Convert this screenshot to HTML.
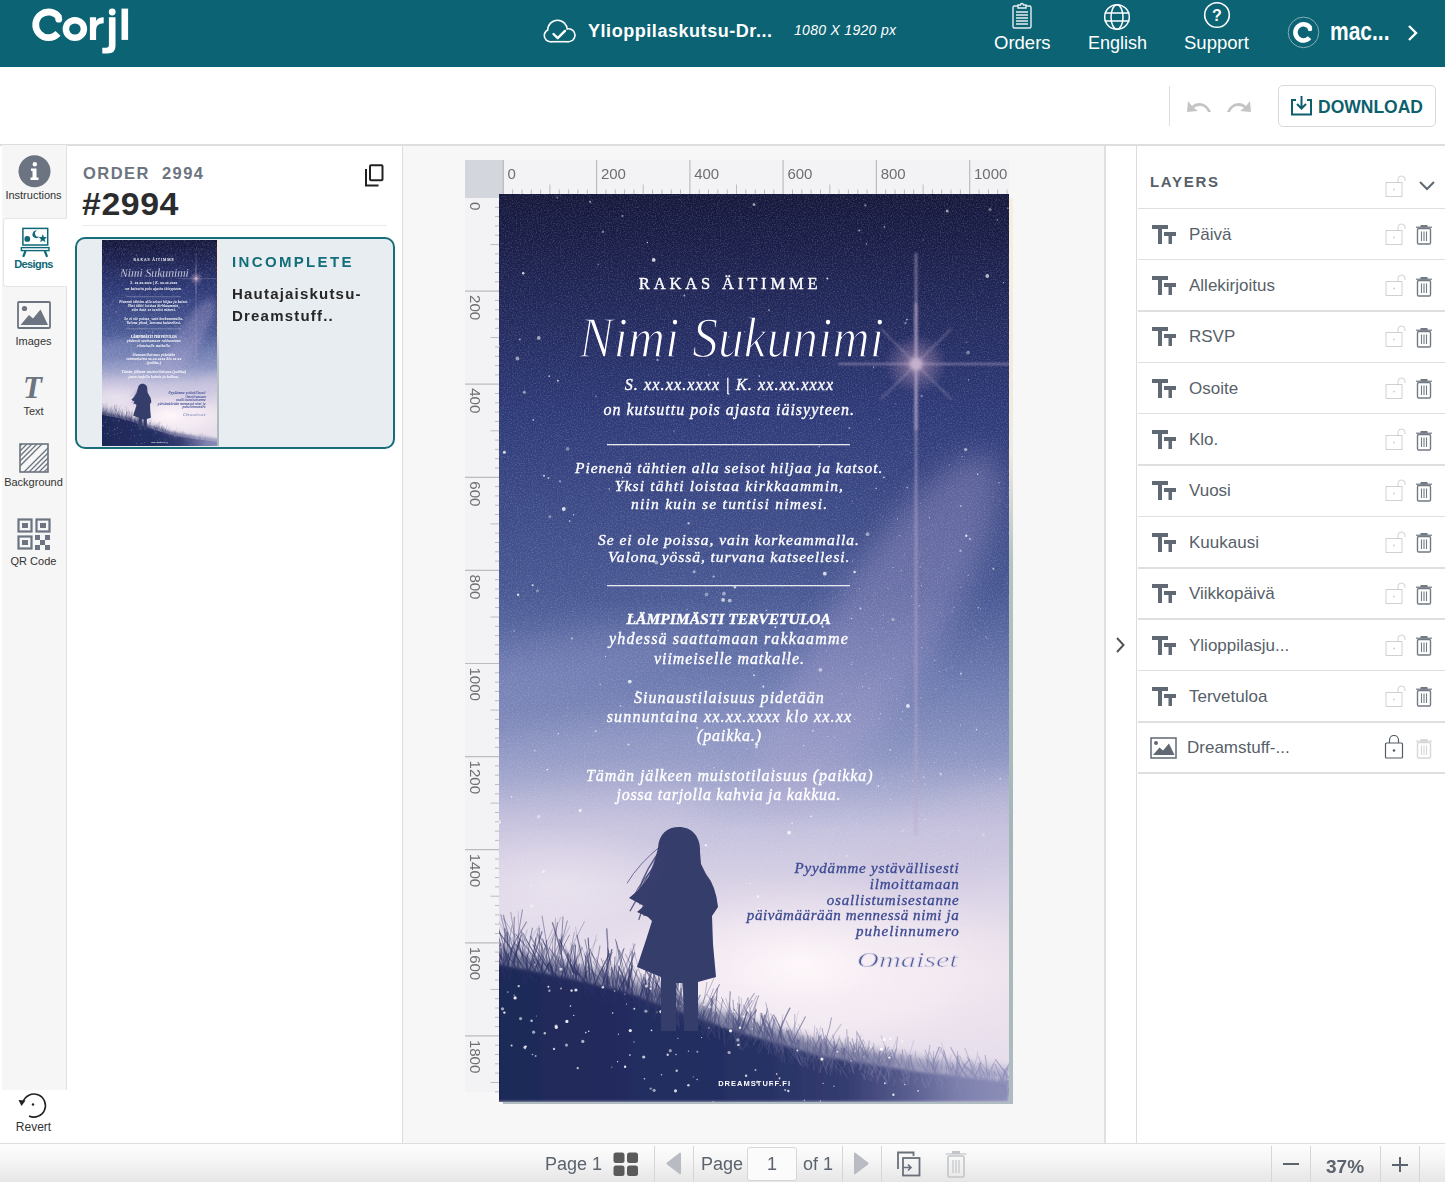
<!DOCTYPE html>
<html><head><meta charset="utf-8">
<style>
*{margin:0;padding:0;box-sizing:border-box}
html,body{width:1445px;height:1182px;overflow:hidden;background:#fff;font-family:"Liberation Sans",sans-serif}
.a{position:absolute}
.nw{white-space:nowrap}
#hdr{left:0;top:0;width:1445px;height:67px;background:#0b6374}
#hdr .t{color:#fff}
#tb{left:0;top:67px;width:1445px;height:78px;background:#fff}
#sep1{left:0;top:144px;width:1445px;height:1.5px;background:#dedede}
#lsb{left:2px;top:145px;width:65px;height:945px;background:#f6f6f6;border-right:1px solid #e2e2e2}
.lbl{font-size:11px;color:#333;text-align:center;width:67px;left:0}
#ord{left:67px;top:146px;width:336px;height:997px;background:#fff;border-right:1px solid #dcdcdc}
#cv{left:403px;top:146px;width:703px;height:997px;background:#f7f7f7}
#strip{left:1104px;top:146px;width:32px;height:997px;background:#fff;border-left:2px solid #e0e0e0}
#lay{left:1136px;top:146px;width:309px;height:997px;background:#fff;border-left:1px solid #dcdcdc}
.row{left:1138px;width:307px;height:51px;border-bottom:2px solid #e3e3e3}
.lname{font-size:17px;color:#575f69}
#bb{left:0;top:1143px;width:1445px;height:39px;background:linear-gradient(#fdfdfd,#f6f6f6 40%,#e6e6e6);border-top:1.5px solid #dedede}
.bsep{top:1146px;width:1px;height:36px;background:#d6d6d6}
</style></head><body>

<!-- HEADER -->
<div id="hdr" class="a">
  <svg class="a" style="left:0;top:0" width="140" height="60" viewBox="0 0 140 60"><g fill="#fff">
<path d="M58.01 33.36 A12.8 12.8 0 1 1 59.36 18.02" fill="none" stroke="#fff" stroke-width="6.8"/>
<circle cx="58.76" cy="19.22" r="3.4"/>
<ellipse cx="74.9" cy="29" rx="9" ry="8.8" fill="none" stroke="#fff" stroke-width="6.5"/>
<path d="M89.9 39.9 V17.3 H96.1 V21 Q98 17.3 103.7 17.3 V23.2 Q96.1 23.2 96.1 30 V39.9z"/>
<path d="M108.9 17.3 H115.5 V46 Q115.5 53.6 107.5 53.6 H102.3 V47.8 H106 Q108.9 47.8 108.9 45z"/>
<circle cx="112.2" cy="12" r="3.4"/>
<rect x="121.5" y="8.6" width="6.6" height="31.3"/>
</g></svg>
  <svg class="a" style="left:543px;top:19px" width="34" height="25" viewBox="0 0 34 25"><circle cx="14.5" cy="11" r="10.600000000000001" fill="#fff"/><circle cx="7.5" cy="16.5" r="7.0" fill="#fff"/><circle cx="25.5" cy="16.2" r="7.3" fill="#fff"/><rect x="7.5" y="11" width="18" height="12.5" fill="#fff"/><circle cx="14.5" cy="11" r="9.0" fill="#0b6374"/><circle cx="7.5" cy="16.5" r="5.4" fill="#0b6374"/><circle cx="25.5" cy="16.2" r="5.7" fill="#0b6374"/><rect x="7.5" y="11" width="18" height="10.899999999999999" fill="#0b6374"/><path d="M10.5 15 l4.2 4.2 l7.3 -7.3" fill="none" stroke="#fff" stroke-width="2.4" stroke-linecap="round" stroke-linejoin="round"/></svg>
  <div class="a t nw" style="left:588px;top:21px;font-size:18px;font-weight:bold;letter-spacing:0.55px">Ylioppilaskutsu-Dr...</div>
  <div class="a t nw" style="left:794px;top:22px;font-size:14px;font-style:italic;letter-spacing:0.3px">1080 X 1920 px</div>
  <div class="a t nw" style="left:994px;top:32px;font-size:18.5px">Orders</div>
  <div class="a t nw" style="left:1088px;top:33px;font-size:18px">English</div>
  <div class="a t nw" style="left:1184px;top:32px;font-size:18.5px">Support</div>
  <svg class="a" style="left:1011px;top:2px" width="22" height="27" viewBox="0 0 22 27"><rect x="2" y="4" width="18" height="22" rx="1.5" fill="none" stroke="#e8eef0" stroke-width="1.4"/><path d="M7 6 V3 h2.5 a1.5 1.5 0 0 1 3 0 H15 v3z" fill="#0b6374" stroke="#e8eef0" stroke-width="1.4"/><path d="M5 10h12M5 13h12M5 16h12M5 19h12M5 22h12" stroke="#e8eef0" stroke-width="1.3"/></svg>
  <svg class="a" style="left:1103px;top:3px" width="28" height="28" viewBox="0 0 28 28"><g fill="none" stroke="#fff" stroke-width="1.5"><circle cx="14" cy="14" r="12.3"/><ellipse cx="14" cy="14" rx="6" ry="12.3"/><path d="M1.7 10h24.6M1.7 18h24.6"/></g></svg>
  <svg class="a" style="left:1203px;top:1px" width="28" height="28" viewBox="0 0 28 28"><circle cx="14" cy="14" r="12.3" fill="none" stroke="#fff" stroke-width="1.6"/><text x="14" y="19.5" font-family="Liberation Sans" font-weight="bold" font-size="16" fill="#fff" text-anchor="middle">?</text></svg>
  <svg class="a" style="left:1287px;top:16px" width="33" height="33" viewBox="0 0 33 33"><circle cx="16.5" cy="16.4" r="15.3" fill="none" stroke="#86aeb6" stroke-width="1"/><path d="M22.52 21.82 A8.1 8.1 0 1 1 23.37 12.11" fill="none" stroke="#fff" stroke-width="4.6"/><circle cx="22.97" cy="12.91" r="2.3" fill="#fff"/></svg>
  <svg class="a" style="left:1406px;top:24px" width="14" height="18" viewBox="0 0 14 18"><path d="M3 2 L10 9 L3 16" fill="none" stroke="#fff" stroke-width="2.4"/></svg>
  <div class="a t nw" style="left:1330px;top:17px;font-size:21px;font-weight:bold;transform:scaleY(1.2);transform-origin:0 0">mac...</div>
</div>

<!-- TOOLBAR -->
<div id="tb" class="a"></div>
<div class="a" style="left:1169px;top:86px;width:1px;height:40px;background:#dedede"></div>
<div class="a" style="left:1278px;top:85px;width:158px;height:42px;border:1px solid #d8d8d8;border-radius:5px"></div>
<div class="a nw" style="left:1318px;top:97px;font-size:17.5px;font-weight:bold;color:#0e5f6e">DOWNLOAD</div>
<svg class="a" style="left:1185px;top:98px" width="29" height="15" viewBox="0 0 29 15"><path d="M26 14 C22 4 12 3 7 8 L3 3 L2 14 L13 13 L9 10 C13 7 20 7 23 14z" fill="#c4c4c4"/></svg>
<svg class="a" style="left:1224px;top:98px" width="29" height="15" viewBox="0 0 29 15"><path d="M3 14 C7 4 17 3 22 8 L26 3 L27 14 L16 13 L20 10 C16 7 9 7 6 14z" fill="#c4c4c4"/></svg>
<svg class="a" style="left:1290px;top:95px" width="23" height="21" viewBox="0 0 23 21"><path d="M6 5 H2 V19.5 H21 V5 H17" fill="none" stroke="#0e5f6e" stroke-width="2"/><path d="M11.5 1 V13 M7 9 L11.5 13.5 L16 9" fill="none" stroke="#0e5f6e" stroke-width="2"/></svg>
<div id="sep1" class="a"></div>

<!-- LEFT SIDEBAR -->
<div id="lsb" class="a"></div>
<div class="a" style="left:3px;top:218px;width:65px;height:69px;background:#fff;border:1px solid #e6e6e6;border-right:none;border-radius:4px 0 0 4px"></div>
<svg class="a" style="left:18px;top:155px" width="33" height="33" viewBox="0 0 33 33"><circle cx="16.5" cy="16.3" r="16" fill="#6b7480"/><circle cx="16.8" cy="9.3" r="2.2" fill="#fff"/><path d="M13 13.5 H18.5 V22.5 H20.5 V25 H12.5 V22.5 H14.5 V16 H13z" fill="#fff"/></svg>
<div class="a lbl nw" style="top:189px">Instructions</div>
<svg class="a" style="left:19px;top:226px" width="32" height="32" viewBox="0 0 32 32"><rect x="3.9" y="2.4" width="24.8" height="16.6" fill="none" stroke="#0e6877" stroke-width="1.5"/><circle cx="8.3" cy="12.9" r="2.9" fill="#0e6877"/><path d="M18.2 4.6 A3.8 3.8 0 1 0 20.3 10.6 A3 3 0 0 1 18.2 4.6z" fill="#0e6877"/><polygon points="23.80,8.20 24.92,11.06 27.98,11.24 25.61,13.19 26.39,16.16 23.80,14.50 21.21,16.16 21.99,13.19 19.62,11.24 22.68,11.06" fill="#0e6877"/><rect x="2.4" y="21.6" width="27.6" height="3" fill="none" stroke="#0e6877" stroke-width="1.4"/><path d="M6.5 25 L4.2 30.8 M25.8 25 L28.1 30.8" stroke="#0e6877" stroke-width="2.2"/></svg>
<div class="a lbl nw" style="top:258px;color:#0e6877;font-weight:bold;letter-spacing:-0.6px">Designs</div>
<svg class="a" style="left:17px;top:301px" width="34" height="28" viewBox="0 0 34 28"><rect x="1" y="1" width="32" height="26" rx="1" fill="none" stroke="#6b7480" stroke-width="1.8"/><circle cx="7.5" cy="7.5" r="2.6" fill="#6b7480"/><path d="M3.5 24 L12 14 L16 17.5 L23.5 8.5 L31 24z" fill="#6b7480"/></svg>
<div class="a lbl nw" style="top:335px">Images</div>
<div class="a nw" style="left:23px;top:371px;font-family:'Liberation Serif',serif;font-style:italic;font-weight:bold;font-size:31px;line-height:34px;color:#6b7480">T</div>
<div class="a lbl nw" style="top:405px">Text</div>
<svg class="a" style="left:19px;top:443px" width="30" height="30" viewBox="0 0 30 30"><defs><clipPath id="bgc"><rect x="1" y="1" width="28" height="28"/></clipPath></defs><rect x="1" y="1" width="28" height="28" fill="none" stroke="#6b7480" stroke-width="1.6"/><g clip-path="url(#bgc)" stroke="#6b7480" stroke-width="1.3"><path d="M-5 9 L9 -5 M-5 14 L14 -5 M-5 19 L19 -5 M-5 24 L24 -5 M-5 29 L29 -5 M0 34 L34 0 M5 34 L34 5 M10 34 L34 10 M15 34 L34 15 M20 34 L34 20 M25 34 L34 25 M-5 4 L4 -5"/></g></svg>
<div class="a lbl nw" style="top:476px">Background</div>
<svg class="a" style="left:17px;top:518px" width="34" height="32" viewBox="0 0 34 32"><g fill="none" stroke="#6b7480" stroke-width="2.2"><rect x="1.5" y="1.5" width="13" height="12"/><rect x="19.5" y="1.5" width="13" height="12"/><rect x="1.5" y="18.5" width="13" height="12"/></g><g fill="#6b7480"><rect x="5" y="5" width="6" height="5"/><rect x="23" y="5" width="6" height="5"/><rect x="5" y="22" width="6" height="5"/><rect x="18" y="17" width="5" height="5"/><rect x="28" y="17" width="5" height="5"/><rect x="23" y="22" width="5" height="5"/><rect x="18" y="27" width="5" height="5"/><rect x="28" y="27" width="5" height="5"/></g></svg>
<div class="a lbl nw" style="top:555px">QR Code</div>
<svg class="a" style="left:17px;top:1091px" width="32" height="28" viewBox="0 0 32 28"><path d="M6 11 A11.5 11.5 0 1 1 12 25" fill="none" stroke="#222" stroke-width="1.6"/><path d="M1.5 9 L8.5 9.5 L4.5 15z" fill="#222"/><circle cx="16" cy="13.5" r="1.2" fill="#222"/></svg>
<div class="a lbl nw" style="top:1120px;font-size:12px">Revert</div>

<!-- ORDER PANEL -->
<div id="ord" class="a"></div>
<div class="a nw" style="left:83px;top:163.5px;font-size:16.5px;font-weight:bold;color:#6c7480;letter-spacing:1.45px">ORDER&nbsp; 2994</div>
<div class="a nw" style="left:82px;top:187px;font-size:30.5px;font-weight:bold;color:#2a2c2e;letter-spacing:0.5px;transform:scaleX(1.11);transform-origin:0 0">#2994</div>
<svg class="a" style="left:364px;top:164px" width="20" height="23" viewBox="0 0 20 23"><rect x="6" y="1.2" width="12.5" height="15" rx="1" fill="none" stroke="#222" stroke-width="2"/><path d="M2 5 V21.5 H14.5" fill="none" stroke="#222" stroke-width="2"/></svg>
<div class="a" style="left:82px;top:225px;width:305px;height:1px;background:#ececec"></div>
<div class="a" style="left:75px;top:237px;width:320px;height:212px;border:2px solid #166e7b;border-radius:10px;background:#e8edf1"></div>
<svg class="a" style="left:102px;top:239.6px" width="115" height="206.2" viewBox="0 0 510 908" preserveAspectRatio="none"><use href="#dz"/></svg>
<div class="a" style="left:216.5px;top:240px;width:2.5px;height:206px;background:linear-gradient(#f6eadc,#efe6da 45%,#b8c4c2 60%,#aab9ba)"></div>

<div class="a nw" style="left:232px;top:253px;font-size:15px;font-weight:bold;color:#146d7a;letter-spacing:2.35px">INCOMPLETE</div>
<div class="a" style="left:232px;top:283px;font-size:15px;font-weight:bold;color:#262626;line-height:22px;letter-spacing:1.2px">Hautajaiskutsu-<br>Dreamstuff..</div>

<!-- CANVAS -->
<div id="cv" class="a"></div>
<svg class="a" style="left:0;top:0" width="1445" height="1182" viewBox="0 0 1445 1182"><rect x="465" y="160" width="544" height="34" fill="#f3f3f5"/><rect x="465" y="160" width="34" height="932" fill="#f3f3f5"/><rect x="465" y="160" width="39" height="38" fill="#d3d7dd"/><line x1="503.3" y1="160" x2="503.3" y2="194" stroke="#b9bcc0" stroke-width="1.2"/><text x="507.6" y="179" font-size="15" fill="#6e6e6e" font-family="Liberation Sans">0</text><line x1="512.6" y1="189.5" x2="512.6" y2="194" stroke="#b9bcc0" stroke-width="1"/><line x1="522.0" y1="189.5" x2="522.0" y2="194" stroke="#b9bcc0" stroke-width="1"/><line x1="531.3" y1="189.5" x2="531.3" y2="194" stroke="#b9bcc0" stroke-width="1"/><line x1="540.6" y1="189.5" x2="540.6" y2="194" stroke="#b9bcc0" stroke-width="1"/><line x1="549.9" y1="184.5" x2="549.9" y2="194" stroke="#b9bcc0" stroke-width="1"/><line x1="559.3" y1="189.5" x2="559.3" y2="194" stroke="#b9bcc0" stroke-width="1"/><line x1="568.6" y1="189.5" x2="568.6" y2="194" stroke="#b9bcc0" stroke-width="1"/><line x1="577.9" y1="189.5" x2="577.9" y2="194" stroke="#b9bcc0" stroke-width="1"/><line x1="587.3" y1="189.5" x2="587.3" y2="194" stroke="#b9bcc0" stroke-width="1"/><line x1="596.6" y1="160" x2="596.6" y2="194" stroke="#b9bcc0" stroke-width="1.2"/><text x="600.9" y="179" font-size="15" fill="#6e6e6e" font-family="Liberation Sans">200</text><line x1="605.9" y1="189.5" x2="605.9" y2="194" stroke="#b9bcc0" stroke-width="1"/><line x1="615.2" y1="189.5" x2="615.2" y2="194" stroke="#b9bcc0" stroke-width="1"/><line x1="624.6" y1="189.5" x2="624.6" y2="194" stroke="#b9bcc0" stroke-width="1"/><line x1="633.9" y1="189.5" x2="633.9" y2="194" stroke="#b9bcc0" stroke-width="1"/><line x1="643.2" y1="184.5" x2="643.2" y2="194" stroke="#b9bcc0" stroke-width="1"/><line x1="652.5" y1="189.5" x2="652.5" y2="194" stroke="#b9bcc0" stroke-width="1"/><line x1="661.9" y1="189.5" x2="661.9" y2="194" stroke="#b9bcc0" stroke-width="1"/><line x1="671.2" y1="189.5" x2="671.2" y2="194" stroke="#b9bcc0" stroke-width="1"/><line x1="680.5" y1="189.5" x2="680.5" y2="194" stroke="#b9bcc0" stroke-width="1"/><line x1="689.9" y1="160" x2="689.9" y2="194" stroke="#b9bcc0" stroke-width="1.2"/><text x="694.2" y="179" font-size="15" fill="#6e6e6e" font-family="Liberation Sans">400</text><line x1="699.2" y1="189.5" x2="699.2" y2="194" stroke="#b9bcc0" stroke-width="1"/><line x1="708.5" y1="189.5" x2="708.5" y2="194" stroke="#b9bcc0" stroke-width="1"/><line x1="717.8" y1="189.5" x2="717.8" y2="194" stroke="#b9bcc0" stroke-width="1"/><line x1="727.2" y1="189.5" x2="727.2" y2="194" stroke="#b9bcc0" stroke-width="1"/><line x1="736.5" y1="184.5" x2="736.5" y2="194" stroke="#b9bcc0" stroke-width="1"/><line x1="745.8" y1="189.5" x2="745.8" y2="194" stroke="#b9bcc0" stroke-width="1"/><line x1="755.2" y1="189.5" x2="755.2" y2="194" stroke="#b9bcc0" stroke-width="1"/><line x1="764.5" y1="189.5" x2="764.5" y2="194" stroke="#b9bcc0" stroke-width="1"/><line x1="773.8" y1="189.5" x2="773.8" y2="194" stroke="#b9bcc0" stroke-width="1"/><line x1="783.1" y1="160" x2="783.1" y2="194" stroke="#b9bcc0" stroke-width="1.2"/><text x="787.4" y="179" font-size="15" fill="#6e6e6e" font-family="Liberation Sans">600</text><line x1="792.5" y1="189.5" x2="792.5" y2="194" stroke="#b9bcc0" stroke-width="1"/><line x1="801.8" y1="189.5" x2="801.8" y2="194" stroke="#b9bcc0" stroke-width="1"/><line x1="811.1" y1="189.5" x2="811.1" y2="194" stroke="#b9bcc0" stroke-width="1"/><line x1="820.5" y1="189.5" x2="820.5" y2="194" stroke="#b9bcc0" stroke-width="1"/><line x1="829.8" y1="184.5" x2="829.8" y2="194" stroke="#b9bcc0" stroke-width="1"/><line x1="839.1" y1="189.5" x2="839.1" y2="194" stroke="#b9bcc0" stroke-width="1"/><line x1="848.4" y1="189.5" x2="848.4" y2="194" stroke="#b9bcc0" stroke-width="1"/><line x1="857.8" y1="189.5" x2="857.8" y2="194" stroke="#b9bcc0" stroke-width="1"/><line x1="867.1" y1="189.5" x2="867.1" y2="194" stroke="#b9bcc0" stroke-width="1"/><line x1="876.4" y1="160" x2="876.4" y2="194" stroke="#b9bcc0" stroke-width="1.2"/><text x="880.7" y="179" font-size="15" fill="#6e6e6e" font-family="Liberation Sans">800</text><line x1="885.7" y1="189.5" x2="885.7" y2="194" stroke="#b9bcc0" stroke-width="1"/><line x1="895.1" y1="189.5" x2="895.1" y2="194" stroke="#b9bcc0" stroke-width="1"/><line x1="904.4" y1="189.5" x2="904.4" y2="194" stroke="#b9bcc0" stroke-width="1"/><line x1="913.7" y1="189.5" x2="913.7" y2="194" stroke="#b9bcc0" stroke-width="1"/><line x1="923.1" y1="184.5" x2="923.1" y2="194" stroke="#b9bcc0" stroke-width="1"/><line x1="932.4" y1="189.5" x2="932.4" y2="194" stroke="#b9bcc0" stroke-width="1"/><line x1="941.7" y1="189.5" x2="941.7" y2="194" stroke="#b9bcc0" stroke-width="1"/><line x1="951.0" y1="189.5" x2="951.0" y2="194" stroke="#b9bcc0" stroke-width="1"/><line x1="960.4" y1="189.5" x2="960.4" y2="194" stroke="#b9bcc0" stroke-width="1"/><line x1="969.7" y1="160" x2="969.7" y2="194" stroke="#b9bcc0" stroke-width="1.2"/><text x="974.0" y="179" font-size="15" fill="#6e6e6e" font-family="Liberation Sans">1000</text><line x1="979.0" y1="189.5" x2="979.0" y2="194" stroke="#b9bcc0" stroke-width="1"/><line x1="988.4" y1="189.5" x2="988.4" y2="194" stroke="#b9bcc0" stroke-width="1"/><line x1="997.7" y1="189.5" x2="997.7" y2="194" stroke="#b9bcc0" stroke-width="1"/><line x1="1007.0" y1="189.5" x2="1007.0" y2="194" stroke="#b9bcc0" stroke-width="1"/><text x="0" y="0" font-size="15" fill="#6e6e6e" font-family="Liberation Sans" transform="translate(469.5 202.0) rotate(90)">0</text><line x1="495" y1="207.3" x2="499" y2="207.3" stroke="#b9bcc0" stroke-width="1"/><line x1="495" y1="216.6" x2="499" y2="216.6" stroke="#b9bcc0" stroke-width="1"/><line x1="495" y1="225.9" x2="499" y2="225.9" stroke="#b9bcc0" stroke-width="1"/><line x1="495" y1="235.2" x2="499" y2="235.2" stroke="#b9bcc0" stroke-width="1"/><line x1="490.5" y1="244.6" x2="499" y2="244.6" stroke="#b9bcc0" stroke-width="1"/><line x1="495" y1="253.9" x2="499" y2="253.9" stroke="#b9bcc0" stroke-width="1"/><line x1="495" y1="263.2" x2="499" y2="263.2" stroke="#b9bcc0" stroke-width="1"/><line x1="495" y1="272.5" x2="499" y2="272.5" stroke="#b9bcc0" stroke-width="1"/><line x1="495" y1="281.8" x2="499" y2="281.8" stroke="#b9bcc0" stroke-width="1"/><line x1="465" y1="291.1" x2="499" y2="291.1" stroke="#b9bcc0" stroke-width="1.2"/><text x="0" y="0" font-size="15" fill="#6e6e6e" font-family="Liberation Sans" transform="translate(469.5 295.1) rotate(90)">200</text><line x1="495" y1="300.4" x2="499" y2="300.4" stroke="#b9bcc0" stroke-width="1"/><line x1="495" y1="309.7" x2="499" y2="309.7" stroke="#b9bcc0" stroke-width="1"/><line x1="495" y1="319.0" x2="499" y2="319.0" stroke="#b9bcc0" stroke-width="1"/><line x1="495" y1="328.3" x2="499" y2="328.3" stroke="#b9bcc0" stroke-width="1"/><line x1="490.5" y1="337.6" x2="499" y2="337.6" stroke="#b9bcc0" stroke-width="1"/><line x1="495" y1="347.0" x2="499" y2="347.0" stroke="#b9bcc0" stroke-width="1"/><line x1="495" y1="356.3" x2="499" y2="356.3" stroke="#b9bcc0" stroke-width="1"/><line x1="495" y1="365.6" x2="499" y2="365.6" stroke="#b9bcc0" stroke-width="1"/><line x1="495" y1="374.9" x2="499" y2="374.9" stroke="#b9bcc0" stroke-width="1"/><line x1="465" y1="384.2" x2="499" y2="384.2" stroke="#b9bcc0" stroke-width="1.2"/><text x="0" y="0" font-size="15" fill="#6e6e6e" font-family="Liberation Sans" transform="translate(469.5 388.2) rotate(90)">400</text><line x1="495" y1="393.5" x2="499" y2="393.5" stroke="#b9bcc0" stroke-width="1"/><line x1="495" y1="402.8" x2="499" y2="402.8" stroke="#b9bcc0" stroke-width="1"/><line x1="495" y1="412.1" x2="499" y2="412.1" stroke="#b9bcc0" stroke-width="1"/><line x1="495" y1="421.4" x2="499" y2="421.4" stroke="#b9bcc0" stroke-width="1"/><line x1="490.5" y1="430.8" x2="499" y2="430.8" stroke="#b9bcc0" stroke-width="1"/><line x1="495" y1="440.1" x2="499" y2="440.1" stroke="#b9bcc0" stroke-width="1"/><line x1="495" y1="449.4" x2="499" y2="449.4" stroke="#b9bcc0" stroke-width="1"/><line x1="495" y1="458.7" x2="499" y2="458.7" stroke="#b9bcc0" stroke-width="1"/><line x1="495" y1="468.0" x2="499" y2="468.0" stroke="#b9bcc0" stroke-width="1"/><line x1="465" y1="477.3" x2="499" y2="477.3" stroke="#b9bcc0" stroke-width="1.2"/><text x="0" y="0" font-size="15" fill="#6e6e6e" font-family="Liberation Sans" transform="translate(469.5 481.3) rotate(90)">600</text><line x1="495" y1="486.6" x2="499" y2="486.6" stroke="#b9bcc0" stroke-width="1"/><line x1="495" y1="495.9" x2="499" y2="495.9" stroke="#b9bcc0" stroke-width="1"/><line x1="495" y1="505.2" x2="499" y2="505.2" stroke="#b9bcc0" stroke-width="1"/><line x1="495" y1="514.5" x2="499" y2="514.5" stroke="#b9bcc0" stroke-width="1"/><line x1="490.5" y1="523.9" x2="499" y2="523.9" stroke="#b9bcc0" stroke-width="1"/><line x1="495" y1="533.2" x2="499" y2="533.2" stroke="#b9bcc0" stroke-width="1"/><line x1="495" y1="542.5" x2="499" y2="542.5" stroke="#b9bcc0" stroke-width="1"/><line x1="495" y1="551.8" x2="499" y2="551.8" stroke="#b9bcc0" stroke-width="1"/><line x1="495" y1="561.1" x2="499" y2="561.1" stroke="#b9bcc0" stroke-width="1"/><line x1="465" y1="570.4" x2="499" y2="570.4" stroke="#b9bcc0" stroke-width="1.2"/><text x="0" y="0" font-size="15" fill="#6e6e6e" font-family="Liberation Sans" transform="translate(469.5 574.4) rotate(90)">800</text><line x1="495" y1="579.7" x2="499" y2="579.7" stroke="#b9bcc0" stroke-width="1"/><line x1="495" y1="589.0" x2="499" y2="589.0" stroke="#b9bcc0" stroke-width="1"/><line x1="495" y1="598.3" x2="499" y2="598.3" stroke="#b9bcc0" stroke-width="1"/><line x1="495" y1="607.6" x2="499" y2="607.6" stroke="#b9bcc0" stroke-width="1"/><line x1="490.5" y1="617.0" x2="499" y2="617.0" stroke="#b9bcc0" stroke-width="1"/><line x1="495" y1="626.3" x2="499" y2="626.3" stroke="#b9bcc0" stroke-width="1"/><line x1="495" y1="635.6" x2="499" y2="635.6" stroke="#b9bcc0" stroke-width="1"/><line x1="495" y1="644.9" x2="499" y2="644.9" stroke="#b9bcc0" stroke-width="1"/><line x1="495" y1="654.2" x2="499" y2="654.2" stroke="#b9bcc0" stroke-width="1"/><line x1="465" y1="663.5" x2="499" y2="663.5" stroke="#b9bcc0" stroke-width="1.2"/><text x="0" y="0" font-size="15" fill="#6e6e6e" font-family="Liberation Sans" transform="translate(469.5 667.5) rotate(90)">1000</text><line x1="495" y1="672.8" x2="499" y2="672.8" stroke="#b9bcc0" stroke-width="1"/><line x1="495" y1="682.1" x2="499" y2="682.1" stroke="#b9bcc0" stroke-width="1"/><line x1="495" y1="691.4" x2="499" y2="691.4" stroke="#b9bcc0" stroke-width="1"/><line x1="495" y1="700.7" x2="499" y2="700.7" stroke="#b9bcc0" stroke-width="1"/><line x1="490.5" y1="710.1" x2="499" y2="710.1" stroke="#b9bcc0" stroke-width="1"/><line x1="495" y1="719.4" x2="499" y2="719.4" stroke="#b9bcc0" stroke-width="1"/><line x1="495" y1="728.7" x2="499" y2="728.7" stroke="#b9bcc0" stroke-width="1"/><line x1="495" y1="738.0" x2="499" y2="738.0" stroke="#b9bcc0" stroke-width="1"/><line x1="495" y1="747.3" x2="499" y2="747.3" stroke="#b9bcc0" stroke-width="1"/><line x1="465" y1="756.6" x2="499" y2="756.6" stroke="#b9bcc0" stroke-width="1.2"/><text x="0" y="0" font-size="15" fill="#6e6e6e" font-family="Liberation Sans" transform="translate(469.5 760.6) rotate(90)">1200</text><line x1="495" y1="765.9" x2="499" y2="765.9" stroke="#b9bcc0" stroke-width="1"/><line x1="495" y1="775.2" x2="499" y2="775.2" stroke="#b9bcc0" stroke-width="1"/><line x1="495" y1="784.5" x2="499" y2="784.5" stroke="#b9bcc0" stroke-width="1"/><line x1="495" y1="793.8" x2="499" y2="793.8" stroke="#b9bcc0" stroke-width="1"/><line x1="490.5" y1="803.1" x2="499" y2="803.1" stroke="#b9bcc0" stroke-width="1"/><line x1="495" y1="812.5" x2="499" y2="812.5" stroke="#b9bcc0" stroke-width="1"/><line x1="495" y1="821.8" x2="499" y2="821.8" stroke="#b9bcc0" stroke-width="1"/><line x1="495" y1="831.1" x2="499" y2="831.1" stroke="#b9bcc0" stroke-width="1"/><line x1="495" y1="840.4" x2="499" y2="840.4" stroke="#b9bcc0" stroke-width="1"/><line x1="465" y1="849.7" x2="499" y2="849.7" stroke="#b9bcc0" stroke-width="1.2"/><text x="0" y="0" font-size="15" fill="#6e6e6e" font-family="Liberation Sans" transform="translate(469.5 853.7) rotate(90)">1400</text><line x1="495" y1="859.0" x2="499" y2="859.0" stroke="#b9bcc0" stroke-width="1"/><line x1="495" y1="868.3" x2="499" y2="868.3" stroke="#b9bcc0" stroke-width="1"/><line x1="495" y1="877.6" x2="499" y2="877.6" stroke="#b9bcc0" stroke-width="1"/><line x1="495" y1="886.9" x2="499" y2="886.9" stroke="#b9bcc0" stroke-width="1"/><line x1="490.5" y1="896.2" x2="499" y2="896.2" stroke="#b9bcc0" stroke-width="1"/><line x1="495" y1="905.6" x2="499" y2="905.6" stroke="#b9bcc0" stroke-width="1"/><line x1="495" y1="914.9" x2="499" y2="914.9" stroke="#b9bcc0" stroke-width="1"/><line x1="495" y1="924.2" x2="499" y2="924.2" stroke="#b9bcc0" stroke-width="1"/><line x1="495" y1="933.5" x2="499" y2="933.5" stroke="#b9bcc0" stroke-width="1"/><line x1="465" y1="942.8" x2="499" y2="942.8" stroke="#b9bcc0" stroke-width="1.2"/><text x="0" y="0" font-size="15" fill="#6e6e6e" font-family="Liberation Sans" transform="translate(469.5 946.8) rotate(90)">1600</text><line x1="495" y1="952.1" x2="499" y2="952.1" stroke="#b9bcc0" stroke-width="1"/><line x1="495" y1="961.4" x2="499" y2="961.4" stroke="#b9bcc0" stroke-width="1"/><line x1="495" y1="970.7" x2="499" y2="970.7" stroke="#b9bcc0" stroke-width="1"/><line x1="495" y1="980.0" x2="499" y2="980.0" stroke="#b9bcc0" stroke-width="1"/><line x1="490.5" y1="989.4" x2="499" y2="989.4" stroke="#b9bcc0" stroke-width="1"/><line x1="495" y1="998.7" x2="499" y2="998.7" stroke="#b9bcc0" stroke-width="1"/><line x1="495" y1="1008.0" x2="499" y2="1008.0" stroke="#b9bcc0" stroke-width="1"/><line x1="495" y1="1017.3" x2="499" y2="1017.3" stroke="#b9bcc0" stroke-width="1"/><line x1="495" y1="1026.6" x2="499" y2="1026.6" stroke="#b9bcc0" stroke-width="1"/><line x1="465" y1="1035.9" x2="499" y2="1035.9" stroke="#b9bcc0" stroke-width="1.2"/><text x="0" y="0" font-size="15" fill="#6e6e6e" font-family="Liberation Sans" transform="translate(469.5 1039.9) rotate(90)">1800</text><line x1="495" y1="1045.2" x2="499" y2="1045.2" stroke="#b9bcc0" stroke-width="1"/><line x1="495" y1="1054.5" x2="499" y2="1054.5" stroke="#b9bcc0" stroke-width="1"/><line x1="495" y1="1063.8" x2="499" y2="1063.8" stroke="#b9bcc0" stroke-width="1"/><line x1="495" y1="1073.1" x2="499" y2="1073.1" stroke="#b9bcc0" stroke-width="1"/><line x1="490.5" y1="1082.5" x2="499" y2="1082.5" stroke="#b9bcc0" stroke-width="1"/><line x1="495" y1="1091.8" x2="499" y2="1091.8" stroke="#b9bcc0" stroke-width="1"/></svg>
<div class="a" style="left:503px;top:198px;width:510px;height:906px;background:linear-gradient(180deg,#f8ede0 0%,#f1e9df 28%,#b4c3c2 40%,#a3b6b6 70%,#aebcbf 100%)"></div>
<svg class="a" style="left:499px;top:194px" width="510" height="908" viewBox="0 0 510 908">
<defs>
<linearGradient id="g0" x1="0" y1="0" x2="0" y2="1">
<stop offset="0" stop-color="#15173a"/>
<stop offset="0.06" stop-color="#1a1e49"/>
<stop offset="0.24" stop-color="#2d3977"/>
<stop offset="0.44" stop-color="#485893"/>
<stop offset="0.53" stop-color="#6a78ae"/>
<stop offset="0.62" stop-color="#8d96c2"/>
<stop offset="0.70" stop-color="#c5c2de"/>
<stop offset="0.76" stop-color="#d8d1e5"/>
<stop offset="0.86" stop-color="#eee5ef"/>
<stop offset="1" stop-color="#e4dbe9"/>
</linearGradient>
<radialGradient id="glow" cx="0.5" cy="0.5" r="0.5">
<stop offset="0" stop-color="#fff8fa" stop-opacity="0.95"/>
<stop offset="0.55" stop-color="#f7eef4" stop-opacity="0.6"/>
<stop offset="1" stop-color="#eadfec" stop-opacity="0"/>
</radialGradient>
<radialGradient id="mw" cx="0.5" cy="0.5" r="0.5">
<stop offset="0" stop-color="#a7a6d2" stop-opacity="0.45"/>
<stop offset="1" stop-color="#8b8cc0" stop-opacity="0"/>
</radialGradient>
<radialGradient id="sg" cx="0.5" cy="0.5" r="0.5">
<stop offset="0" stop-color="#d8c0d4" stop-opacity="0.9"/>
<stop offset="0.35" stop-color="#b895b6" stop-opacity="0.45"/>
<stop offset="1" stop-color="#9c84b0" stop-opacity="0"/>
</radialGradient>
<linearGradient id="hillg" x1="0" y1="0" x2="1" y2="0">
<stop offset="0" stop-color="#1e2858"/>
<stop offset="0.5" stop-color="#253063"/>
<stop offset="0.68" stop-color="#343c6f"/>
<stop offset="0.8" stop-color="#575c8e"/>
<stop offset="0.9" stop-color="#7b7fac"/>
<stop offset="1" stop-color="#8d90b9"/>
</linearGradient>
<filter id="b4" x="-20%" y="-20%" width="140%" height="140%"><feGaussianBlur stdDeviation="4"/></filter>
<filter id="b12" x="-30%" y="-30%" width="160%" height="160%"><feGaussianBlur stdDeviation="14"/></filter>
<filter id="b1"><feGaussianBlur stdDeviation="0.5"/></filter>
<filter id="b08" x="-10%" y="-10%" width="120%" height="120%"><feGaussianBlur stdDeviation="0.9"/></filter>
<filter id="b06" x="-5%" y="-5%" width="110%" height="110%"><feGaussianBlur stdDeviation="0.6"/></filter>
<filter id="grain" x="0" y="0" width="100%" height="100%"><feTurbulence type="fractalNoise" baseFrequency="0.75" numOctaves="2" seed="5"/><feColorMatrix type="matrix" values="0 0 0 0 0.85  0 0 0 0 0.85  0 0 0 0 1  0 0 0 -2.2 1.25"/></filter>
<filter id="b15" x="-50%" y="-50%" width="200%" height="200%"><feGaussianBlur stdDeviation="1.5"/></filter>
</defs>
<g id="dz">
<rect width="510" height="908" fill="url(#g0)"/>
<g filter="url(#b12)">
<ellipse cx="380" cy="440" rx="210" ry="55" fill="#b4a9d2" opacity="0.32" transform="rotate(-58 380 440)"/>
<ellipse cx="60" cy="470" rx="150" ry="28" fill="#9ea3d0" opacity="0.2" transform="rotate(-12 60 470)"/>
<ellipse cx="110" cy="560" rx="190" ry="32" fill="#b3b0d8" opacity="0.22" transform="rotate(-8 110 560)"/>
<ellipse cx="40" cy="640" rx="170" ry="40" fill="#d8cde4" opacity="0.3" transform="rotate(-10 40 640)"/>
<ellipse cx="470" cy="640" rx="120" ry="40" fill="#c9bfdc" opacity="0.35" transform="rotate(-20 470 640)"/>
<ellipse cx="460" cy="760" rx="110" ry="35" fill="#f0e4ee" opacity="0.45"/>
</g>
<ellipse cx="60" cy="690" rx="150" ry="60" fill="url(#glow)" opacity="0.45"/>
<ellipse cx="310" cy="780" rx="250" ry="100" fill="url(#glow)"/>
<ellipse cx="300" cy="770" rx="120" ry="55" fill="url(#glow)" opacity="0.8"/>
<ellipse cx="417" cy="170" rx="32" ry="30" fill="url(#sg)"/>
<g stroke="#b9a6c6" stroke-linecap="round" filter="url(#b08)">
<path d="M417 60 L417 640" stroke-width="2.6" opacity="0.55"/>
<path d="M417 110 L417 235" stroke-width="3.2" opacity="0.6"/>
<path d="M340 170 L510 170" stroke-width="2.2" opacity="0.55"/>
<path d="M382 135 L452 205 M452 135 L382 205" stroke-width="1.3" opacity="0.5"/>
</g>
<circle cx="417" cy="170" r="6" fill="#c9b4cf" opacity="0.7" filter="url(#b15)"/>
<g filter="url(#b06)"><circle cx="230.7" cy="406.6" r="1.9" fill="#fff" opacity="0.58"/><circle cx="259.0" cy="426.7" r="0.8" fill="#fff" opacity="0.75"/><circle cx="242.6" cy="446.0" r="0.8" fill="#fff" opacity="0.40"/><circle cx="154.7" cy="65.9" r="1.9" fill="#fff" opacity="0.80"/><circle cx="323.6" cy="432.5" r="1.0" fill="#fff" opacity="0.83"/><circle cx="333.5" cy="447.1" r="0.8" fill="#fff" opacity="0.66"/><circle cx="424.2" cy="45.9" r="0.7" fill="#fff" opacity="0.45"/><circle cx="123.4" cy="21.9" r="1.0" fill="#fff" opacity="0.51"/><circle cx="301.4" cy="141.9" r="0.8" fill="#fff" opacity="0.67"/><circle cx="254.9" cy="481.2" r="1.0" fill="#fff" opacity="0.68"/><circle cx="207.5" cy="400.4" r="1.9" fill="#fff" opacity="0.39"/><circle cx="129.5" cy="550.6" r="1.2" fill="#fff" opacity="0.49"/><circle cx="35.8" cy="556.6" r="1.0" fill="#fff" opacity="0.40"/><circle cx="148.4" cy="48.5" r="0.7" fill="#fff" opacity="0.77"/><circle cx="0.3" cy="152.3" r="0.7" fill="#fff" opacity="0.58"/><circle cx="500.0" cy="288.7" r="0.7" fill="#fff" opacity="0.63"/><circle cx="101.2" cy="490.3" r="0.9" fill="#fff" opacity="0.39"/><circle cx="169.6" cy="700.3" r="1.9" fill="#fff" opacity="0.81"/><circle cx="68.6" cy="513.6" r="0.7" fill="#fff" opacity="0.38"/><circle cx="406.5" cy="129.1" r="1.2" fill="#fff" opacity="0.44"/><circle cx="259.5" cy="715.7" r="1.9" fill="#fff" opacity="0.42"/><circle cx="328.3" cy="84.6" r="1.0" fill="#fff" opacity="0.85"/><circle cx="0.2" cy="627.9" r="1.9" fill="#fff" opacity="0.65"/><circle cx="508.9" cy="14.3" r="0.8" fill="#fff" opacity="0.55"/><circle cx="435.7" cy="466.2" r="0.7" fill="#fff" opacity="0.37"/><circle cx="74.6" cy="320.7" r="0.7" fill="#fff" opacity="0.74"/><circle cx="167.8" cy="215.3" r="0.7" fill="#fff" opacity="0.39"/><circle cx="106.5" cy="462.4" r="0.7" fill="#fff" opacity="0.65"/><circle cx="189.6" cy="329.2" r="1.2" fill="#fff" opacity="0.59"/><circle cx="293.0" cy="629.4" r="0.8" fill="#fff" opacity="0.66"/><circle cx="158.5" cy="165.9" r="1.2" fill="#fff" opacity="0.47"/><circle cx="96.8" cy="537.1" r="1.2" fill="#fff" opacity="0.45"/><circle cx="484.6" cy="640.8" r="1.2" fill="#fff" opacity="0.39"/><circle cx="24.2" cy="79.2" r="1.2" fill="#fff" opacity="0.83"/><circle cx="121.6" cy="511.8" r="0.9" fill="#fff" opacity="0.56"/><circle cx="461.5" cy="356.7" r="1.2" fill="#fff" opacity="0.44"/><circle cx="367.4" cy="50.0" r="0.8" fill="#fff" opacity="0.59"/><circle cx="333.3" cy="447.4" r="0.7" fill="#fff" opacity="0.49"/><circle cx="467.9" cy="148.2" r="0.7" fill="#fff" opacity="0.38"/><circle cx="209.8" cy="180.9" r="0.7" fill="#fff" opacity="0.44"/><circle cx="188.1" cy="415.6" r="0.8" fill="#fff" opacity="0.40"/><circle cx="70.6" cy="327.1" r="0.9" fill="#fff" opacity="0.68"/><circle cx="352.5" cy="424.5" r="0.8" fill="#fff" opacity="0.64"/><circle cx="471.0" cy="344.9" r="0.9" fill="#fff" opacity="0.70"/><circle cx="491.0" cy="15.4" r="1.5" fill="#fff" opacity="0.39"/><circle cx="34.3" cy="226.0" r="0.8" fill="#fff" opacity="0.85"/><circle cx="38.4" cy="396.7" r="1.5" fill="#fff" opacity="0.37"/><circle cx="477.5" cy="535.5" r="0.8" fill="#fff" opacity="0.75"/><circle cx="466.7" cy="255.6" r="1.5" fill="#fff" opacity="0.59"/><circle cx="39.6" cy="622.7" r="1.9" fill="#fff" opacity="0.37"/><circle cx="255.0" cy="10.6" r="1.5" fill="#fff" opacity="0.54"/><circle cx="297.2" cy="442.3" r="0.7" fill="#fff" opacity="0.40"/><circle cx="58.9" cy="186.8" r="1.0" fill="#fff" opacity="0.71"/><circle cx="198.1" cy="533.9" r="1.2" fill="#fff" opacity="0.58"/><circle cx="235.9" cy="393.2" r="1.2" fill="#fff" opacity="0.73"/><circle cx="15.2" cy="436.8" r="1.0" fill="#fff" opacity="0.36"/><circle cx="488.3" cy="82.0" r="1.9" fill="#fff" opacity="0.66"/><circle cx="469.4" cy="185.8" r="0.7" fill="#fff" opacity="0.53"/><circle cx="73.0" cy="444.4" r="1.2" fill="#fff" opacity="0.43"/><circle cx="461.9" cy="479.4" r="1.0" fill="#fff" opacity="0.60"/><circle cx="123.2" cy="294.0" r="0.9" fill="#fff" opacity="0.45"/><circle cx="219.8" cy="585.5" r="0.8" fill="#fff" opacity="0.79"/><circle cx="196.1" cy="423.6" r="0.9" fill="#fff" opacity="0.45"/><circle cx="68.6" cy="254.8" r="1.9" fill="#fff" opacity="0.37"/><circle cx="32.7" cy="712.1" r="1.9" fill="#fff" opacity="0.43"/><circle cx="229.8" cy="199.9" r="0.8" fill="#fff" opacity="0.77"/><circle cx="195.1" cy="377.7" r="1.5" fill="#fff" opacity="0.51"/><circle cx="428.0" cy="713.4" r="1.0" fill="#fff" opacity="0.51"/><circle cx="422.7" cy="202.0" r="1.2" fill="#fff" opacity="0.37"/><circle cx="361.4" cy="414.5" r="0.9" fill="#fff" opacity="0.67"/><circle cx="287.7" cy="465.6" r="1.0" fill="#fff" opacity="0.58"/><circle cx="12.6" cy="602.7" r="0.8" fill="#fff" opacity="0.74"/><circle cx="406.4" cy="714.8" r="0.7" fill="#fff" opacity="0.57"/><circle cx="321.3" cy="475.8" r="1.9" fill="#fff" opacity="0.53"/><circle cx="39.8" cy="143.9" r="1.9" fill="#fff" opacity="0.59"/><circle cx="91.1" cy="7.8" r="1.0" fill="#fff" opacity="0.62"/><circle cx="18.4" cy="164.5" r="1.9" fill="#fff" opacity="0.52"/><circle cx="355.6" cy="378.0" r="1.2" fill="#fff" opacity="0.85"/><circle cx="81.2" cy="616.5" r="1.5" fill="#fff" opacity="0.80"/><circle cx="44.5" cy="677.4" r="1.5" fill="#fff" opacity="0.54"/><circle cx="229.8" cy="143.0" r="0.7" fill="#fff" opacity="0.54"/><circle cx="290.1" cy="638.7" r="1.9" fill="#fff" opacity="0.76"/><circle cx="175.0" cy="237.1" r="0.8" fill="#fff" opacity="0.40"/><circle cx="441.7" cy="579.9" r="1.5" fill="#fff" opacity="0.41"/><circle cx="123.6" cy="283.5" r="0.7" fill="#fff" opacity="0.84"/><circle cx="273.8" cy="574.4" r="0.9" fill="#fff" opacity="0.48"/><circle cx="366.3" cy="11.4" r="1.2" fill="#fff" opacity="0.39"/><circle cx="224.9" cy="399.7" r="1.9" fill="#fff" opacity="0.49"/><circle cx="469.1" cy="158.6" r="1.9" fill="#fff" opacity="0.38"/><circle cx="407.9" cy="125.6" r="0.9" fill="#fff" opacity="0.69"/><circle cx="467.2" cy="341.8" r="1.2" fill="#fff" opacity="0.80"/><circle cx="264.3" cy="492.4" r="1.0" fill="#fff" opacity="0.82"/><circle cx="251.2" cy="689.5" r="0.7" fill="#fff" opacity="0.73"/><circle cx="224.1" cy="405.9" r="1.9" fill="#fff" opacity="0.71"/><circle cx="325.8" cy="379.7" r="1.9" fill="#fff" opacity="0.80"/><circle cx="130.8" cy="487.6" r="1.9" fill="#fff" opacity="0.79"/><circle cx="310.8" cy="221.2" r="0.8" fill="#fff" opacity="0.83"/><circle cx="267.4" cy="416.2" r="0.8" fill="#fff" opacity="0.56"/><circle cx="58.3" cy="3.6" r="1.0" fill="#fff" opacity="0.36"/><circle cx="494.4" cy="374.8" r="1.0" fill="#fff" opacity="0.62"/><circle cx="504.6" cy="88.6" r="0.7" fill="#fff" opacity="0.70"/><circle cx="33.6" cy="391.3" r="1.0" fill="#fff" opacity="0.81"/><circle cx="408.2" cy="293.6" r="0.8" fill="#fff" opacity="0.59"/><circle cx="64.8" cy="315.0" r="1.9" fill="#fff" opacity="0.82"/><circle cx="469.2" cy="381.3" r="0.7" fill="#fff" opacity="0.45"/><circle cx="315.1" cy="672.1" r="0.8" fill="#fff" opacity="0.70"/><circle cx="498.4" cy="25.9" r="0.8" fill="#fff" opacity="0.46"/><circle cx="350.4" cy="234.0" r="0.9" fill="#fff" opacity="0.47"/><circle cx="254.4" cy="363.0" r="1.2" fill="#fff" opacity="0.41"/><circle cx="260.3" cy="182.0" r="0.8" fill="#fff" opacity="0.70"/><circle cx="448.2" cy="16.9" r="1.5" fill="#fff" opacity="0.56"/><circle cx="270.0" cy="116.0" r="0.8" fill="#fff" opacity="0.78"/><circle cx="272.3" cy="158.6" r="0.8" fill="#fff" opacity="0.78"/><circle cx="312.0" cy="622.4" r="0.8" fill="#fff" opacity="0.81"/><circle cx="320.2" cy="252.5" r="0.8" fill="#fff" opacity="0.51"/><circle cx="160.6" cy="670.3" r="0.8" fill="#fff" opacity="0.74"/><circle cx="99.2" cy="70.4" r="0.8" fill="#fff" opacity="0.42"/><circle cx="45.0" cy="281.8" r="1.0" fill="#fff" opacity="0.77"/><circle cx="215.0" cy="573.8" r="0.8" fill="#fff" opacity="0.45"/><circle cx="320.3" cy="580.3" r="0.7" fill="#fff" opacity="0.45"/><circle cx="348.0" cy="662.0" r="0.9" fill="#fff" opacity="0.41"/><circle cx="257.9" cy="550.7" r="1.2" fill="#fff" opacity="0.85"/><circle cx="424.8" cy="583.2" r="1.0" fill="#fff" opacity="0.40"/><circle cx="19.1" cy="400.7" r="1.2" fill="#fff" opacity="0.80"/><circle cx="245.5" cy="137.7" r="0.7" fill="#fff" opacity="0.45"/><circle cx="428.5" cy="719.4" r="1.5" fill="#fff" opacity="0.40"/><circle cx="31.6" cy="691.2" r="1.0" fill="#fff" opacity="0.39"/><circle cx="49.3" cy="283.9" r="1.0" fill="#fff" opacity="0.61"/><circle cx="219.3" cy="436.5" r="0.7" fill="#fff" opacity="0.67"/><circle cx="20.8" cy="145.5" r="1.0" fill="#fff" opacity="0.58"/><circle cx="377.1" cy="294.4" r="0.8" fill="#fff" opacity="0.65"/><circle cx="48.3" cy="575.6" r="0.9" fill="#fff" opacity="0.80"/><circle cx="408.9" cy="511.9" r="1.9" fill="#fff" opacity="0.80"/><circle cx="479.2" cy="413.8" r="0.8" fill="#fff" opacity="0.60"/><circle cx="501.2" cy="584.6" r="0.9" fill="#fff" opacity="0.49"/><circle cx="59.3" cy="539.7" r="0.8" fill="#fff" opacity="0.76"/><circle cx="206.9" cy="651.3" r="1.2" fill="#fff" opacity="0.70"/><circle cx="391.3" cy="555.9" r="1.0" fill="#fff" opacity="0.45"/><circle cx="94.3" cy="579.2" r="0.9" fill="#fff" opacity="0.58"/><circle cx="5.4" cy="258.3" r="1.5" fill="#fff" opacity="0.80"/><circle cx="25.3" cy="198.3" r="1.5" fill="#fff" opacity="0.50"/><circle cx="110.2" cy="295.0" r="0.8" fill="#fff" opacity="0.62"/><circle cx="198.7" cy="726.3" r="1.5" fill="#fff" opacity="0.46"/><circle cx="61.0" cy="287.2" r="1.2" fill="#fff" opacity="0.36"/><circle cx="313.9" cy="536.7" r="0.9" fill="#fff" opacity="0.57"/><circle cx="257.4" cy="553.0" r="1.5" fill="#fff" opacity="0.54"/><circle cx="50.2" cy="182.2" r="0.9" fill="#fff" opacity="0.63"/><circle cx="259.0" cy="702.5" r="1.2" fill="#fff" opacity="0.77"/><circle cx="50.8" cy="322.8" r="1.5" fill="#fff" opacity="0.39"/><circle cx="304.7" cy="551.5" r="0.7" fill="#fff" opacity="0.54"/><circle cx="478.7" cy="280.3" r="0.8" fill="#fff" opacity="0.78"/><circle cx="276.4" cy="433.3" r="1.0" fill="#fff" opacity="0.82"/><circle cx="214.6" cy="382.6" r="1.2" fill="#fff" opacity="0.51"/><circle cx="270.5" cy="351.0" r="0.9" fill="#fff" opacity="0.63"/><circle cx="144.6" cy="520.5" r="0.9" fill="#fff" opacity="0.36"/><circle cx="394.0" cy="425.5" r="1.5" fill="#fff" opacity="0.43"/><circle cx="384.9" cy="283.3" r="0.9" fill="#fff" opacity="0.72"/><circle cx="25.6" cy="718.2" r="0.9" fill="#fff" opacity="0.39"/><circle cx="461.8" cy="312.0" r="1.0" fill="#fff" opacity="0.48"/><circle cx="385.3" cy="33.0" r="0.7" fill="#fff" opacity="0.82"/><circle cx="368.6" cy="340.2" r="1.9" fill="#fff" opacity="0.47"/><circle cx="360.3" cy="36.6" r="1.0" fill="#fff" opacity="0.58"/><circle cx="103.9" cy="37.8" r="1.2" fill="#fff" opacity="0.43"/><circle cx="185.3" cy="101.5" r="1.0" fill="#fff" opacity="0.58"/><circle cx="133.7" cy="422.9" r="1.0" fill="#fff" opacity="0.53"/><circle cx="379.4" cy="592.1" r="0.8" fill="#fff" opacity="0.83"/><circle cx="374.5" cy="173.2" r="0.7" fill="#fff" opacity="0.60"/><circle cx="157.4" cy="368.5" r="1.9" fill="#fff" opacity="0.53"/><circle cx="138.5" cy="497.6" r="1.2" fill="#fff" opacity="0.70"/><circle cx="96.9" cy="202.4" r="0.8" fill="#fff" opacity="0.44"/><circle cx="401.1" cy="815.1" r="0.6" fill="#fff" opacity="0.57"/><circle cx="412.3" cy="456.5" r="0.6" fill="#fff" opacity="0.22"/><circle cx="391.7" cy="605.2" r="0.6" fill="#fff" opacity="0.45"/><circle cx="459.9" cy="570.0" r="0.6" fill="#fff" opacity="0.23"/><circle cx="477.1" cy="573.1" r="0.6" fill="#fff" opacity="0.42"/><circle cx="360.6" cy="394.9" r="0.6" fill="#fff" opacity="0.39"/><circle cx="413.5" cy="586.8" r="0.6" fill="#fff" opacity="0.50"/><circle cx="412.5" cy="439.9" r="0.6" fill="#fff" opacity="0.25"/><circle cx="430.5" cy="323.7" r="0.6" fill="#fff" opacity="0.51"/><circle cx="414.5" cy="602.8" r="0.6" fill="#fff" opacity="0.30"/><circle cx="421.2" cy="372.9" r="0.6" fill="#fff" opacity="0.46"/><circle cx="453.1" cy="472.8" r="0.6" fill="#fff" opacity="0.42"/><circle cx="396.7" cy="209.8" r="0.6" fill="#fff" opacity="0.37"/><circle cx="381.5" cy="519.7" r="0.6" fill="#fff" opacity="0.55"/><circle cx="422.0" cy="503.7" r="0.6" fill="#fff" opacity="0.43"/><circle cx="309.2" cy="497.3" r="0.6" fill="#fff" opacity="0.32"/><circle cx="403.8" cy="432.9" r="0.6" fill="#fff" opacity="0.29"/><circle cx="387.0" cy="437.8" r="0.6" fill="#fff" opacity="0.32"/><circle cx="385.6" cy="297.6" r="0.6" fill="#fff" opacity="0.31"/><circle cx="435.2" cy="568.3" r="0.6" fill="#fff" opacity="0.49"/><circle cx="380.0" cy="524.6" r="0.6" fill="#fff" opacity="0.48"/><circle cx="278.2" cy="366.7" r="0.6" fill="#fff" opacity="0.58"/><circle cx="455.1" cy="413.3" r="0.6" fill="#fff" opacity="0.52"/><circle cx="382.3" cy="578.8" r="0.6" fill="#fff" opacity="0.36"/><circle cx="400.6" cy="593.7" r="0.6" fill="#fff" opacity="0.35"/><circle cx="360.7" cy="571.2" r="0.6" fill="#fff" opacity="0.36"/><circle cx="426.2" cy="625.4" r="0.6" fill="#fff" opacity="0.52"/><circle cx="289.5" cy="422.4" r="0.6" fill="#fff" opacity="0.43"/><circle cx="445.0" cy="661.3" r="0.6" fill="#fff" opacity="0.55"/><circle cx="397.5" cy="504.9" r="0.6" fill="#fff" opacity="0.41"/><circle cx="325.3" cy="437.5" r="0.6" fill="#fff" opacity="0.59"/><circle cx="337.0" cy="303.7" r="0.6" fill="#fff" opacity="0.23"/><circle cx="298.8" cy="418.7" r="0.6" fill="#fff" opacity="0.23"/><circle cx="485.4" cy="576.3" r="0.6" fill="#fff" opacity="0.56"/><circle cx="473.3" cy="566.3" r="0.6" fill="#fff" opacity="0.26"/><circle cx="397.7" cy="306.4" r="0.6" fill="#fff" opacity="0.30"/><circle cx="418.9" cy="680.8" r="0.6" fill="#fff" opacity="0.41"/><circle cx="405.5" cy="360.3" r="0.6" fill="#fff" opacity="0.34"/><circle cx="487.9" cy="444.5" r="0.6" fill="#fff" opacity="0.40"/><circle cx="306.8" cy="435.4" r="0.6" fill="#fff" opacity="0.48"/><circle cx="453.1" cy="417.2" r="0.6" fill="#fff" opacity="0.53"/><circle cx="341.2" cy="276.3" r="0.6" fill="#fff" opacity="0.52"/><circle cx="463.2" cy="262.6" r="0.6" fill="#fff" opacity="0.58"/><circle cx="353.5" cy="367.2" r="0.6" fill="#fff" opacity="0.48"/><circle cx="420.2" cy="361.1" r="0.6" fill="#fff" opacity="0.37"/><circle cx="459.9" cy="636.8" r="0.6" fill="#fff" opacity="0.60"/><circle cx="374.2" cy="531.2" r="0.6" fill="#fff" opacity="0.28"/><circle cx="355.6" cy="525.3" r="0.6" fill="#fff" opacity="0.59"/><circle cx="448.0" cy="517.5" r="0.6" fill="#fff" opacity="0.25"/><circle cx="337.9" cy="313.6" r="0.6" fill="#fff" opacity="0.27"/><circle cx="461.4" cy="530.8" r="0.6" fill="#fff" opacity="0.43"/><circle cx="413.8" cy="462.4" r="0.6" fill="#fff" opacity="0.24"/><circle cx="416.8" cy="557.0" r="0.6" fill="#fff" opacity="0.29"/><circle cx="383.5" cy="322.1" r="0.6" fill="#fff" opacity="0.29"/><circle cx="419.4" cy="569.5" r="0.6" fill="#fff" opacity="0.27"/><circle cx="402.4" cy="376.4" r="0.6" fill="#fff" opacity="0.42"/><circle cx="428.1" cy="354.9" r="0.6" fill="#fff" opacity="0.30"/><circle cx="501.1" cy="307.2" r="0.6" fill="#fff" opacity="0.34"/><circle cx="256.1" cy="391.8" r="0.6" fill="#fff" opacity="0.39"/><circle cx="403.5" cy="517.7" r="0.6" fill="#fff" opacity="0.58"/><circle cx="418.8" cy="367.8" r="0.6" fill="#fff" opacity="0.41"/><circle cx="352.2" cy="470.5" r="0.6" fill="#fff" opacity="0.60"/><circle cx="375.7" cy="406.1" r="0.6" fill="#fff" opacity="0.20"/><circle cx="343.0" cy="499.8" r="0.6" fill="#fff" opacity="0.52"/><circle cx="381.3" cy="320.5" r="0.6" fill="#fff" opacity="0.26"/><circle cx="429.2" cy="568.2" r="0.6" fill="#fff" opacity="0.30"/><circle cx="449.2" cy="374.1" r="0.6" fill="#fff" opacity="0.45"/><circle cx="447.2" cy="475.9" r="0.6" fill="#fff" opacity="0.41"/><circle cx="460.2" cy="647.0" r="0.6" fill="#fff" opacity="0.20"/><circle cx="450.4" cy="270.8" r="0.6" fill="#fff" opacity="0.53"/><circle cx="441.4" cy="527.1" r="0.6" fill="#fff" opacity="0.49"/><circle cx="456.2" cy="558.7" r="0.6" fill="#fff" opacity="0.39"/><circle cx="476.7" cy="436.0" r="0.6" fill="#fff" opacity="0.54"/><circle cx="365.0" cy="679.9" r="0.6" fill="#fff" opacity="0.37"/><circle cx="422.7" cy="453.8" r="0.6" fill="#fff" opacity="0.53"/><circle cx="419.4" cy="625.2" r="0.6" fill="#fff" opacity="0.41"/><circle cx="462.2" cy="669.5" r="0.6" fill="#fff" opacity="0.32"/><circle cx="391.1" cy="524.3" r="0.6" fill="#fff" opacity="0.32"/><circle cx="306.9" cy="518.9" r="0.6" fill="#fff" opacity="0.34"/><circle cx="389.1" cy="427.6" r="0.6" fill="#fff" opacity="0.36"/><circle cx="247.8" cy="554.6" r="0.6" fill="#fff" opacity="0.53"/><circle cx="394.6" cy="464.4" r="0.6" fill="#fff" opacity="0.35"/><circle cx="389.0" cy="394.4" r="0.6" fill="#fff" opacity="0.43"/><circle cx="391.6" cy="484.5" r="0.6" fill="#fff" opacity="0.60"/><circle cx="412.5" cy="402.2" r="0.6" fill="#fff" opacity="0.45"/><circle cx="385.4" cy="592.8" r="0.6" fill="#fff" opacity="0.42"/><circle cx="383.8" cy="583.9" r="0.6" fill="#fff" opacity="0.36"/><circle cx="376.9" cy="400.0" r="0.6" fill="#fff" opacity="0.28"/><circle cx="393.8" cy="373.5" r="0.6" fill="#fff" opacity="0.58"/><circle cx="311.2" cy="406.0" r="0.6" fill="#fff" opacity="0.33"/><circle cx="412.3" cy="433.2" r="0.6" fill="#fff" opacity="0.26"/><circle cx="474.9" cy="580.9" r="0.6" fill="#fff" opacity="0.48"/><circle cx="426.0" cy="590.1" r="0.6" fill="#fff" opacity="0.53"/><circle cx="378.2" cy="451.3" r="0.6" fill="#fff" opacity="0.29"/><circle cx="417.0" cy="531.5" r="0.6" fill="#fff" opacity="0.36"/><circle cx="335.6" cy="543.6" r="0.6" fill="#fff" opacity="0.46"/><circle cx="411.8" cy="258.6" r="0.6" fill="#fff" opacity="0.35"/><circle cx="369.7" cy="587.9" r="0.6" fill="#fff" opacity="0.21"/><circle cx="324.4" cy="588.8" r="0.6" fill="#fff" opacity="0.59"/><circle cx="421.7" cy="309.1" r="0.6" fill="#fff" opacity="0.44"/><circle cx="453.4" cy="492.5" r="0.6" fill="#fff" opacity="0.34"/><circle cx="383.4" cy="433.8" r="0.6" fill="#fff" opacity="0.35"/><circle cx="294.4" cy="467.6" r="0.6" fill="#fff" opacity="0.53"/><circle cx="373.1" cy="434.6" r="0.6" fill="#fff" opacity="0.51"/><circle cx="462.0" cy="393.4" r="0.6" fill="#fff" opacity="0.34"/><circle cx="366.8" cy="479.8" r="0.6" fill="#fff" opacity="0.49"/><circle cx="472.0" cy="468.0" r="0.6" fill="#fff" opacity="0.49"/><circle cx="420.4" cy="411.7" r="0.6" fill="#fff" opacity="0.58"/><circle cx="372.2" cy="422.9" r="0.6" fill="#fff" opacity="0.23"/><circle cx="402.7" cy="637.2" r="0.6" fill="#fff" opacity="0.48"/><circle cx="334.1" cy="722.6" r="0.6" fill="#fff" opacity="0.34"/><circle cx="370.0" cy="494.2" r="0.6" fill="#fff" opacity="0.59"/><circle cx="485.5" cy="675.5" r="0.6" fill="#fff" opacity="0.42"/><circle cx="328.6" cy="422.7" r="0.6" fill="#fff" opacity="0.31"/><circle cx="433.5" cy="331.6" r="0.6" fill="#fff" opacity="0.25"/><circle cx="422.4" cy="391.7" r="0.6" fill="#fff" opacity="0.56"/><circle cx="404.5" cy="636.4" r="0.6" fill="#fff" opacity="0.53"/><circle cx="429.8" cy="619.0" r="0.6" fill="#fff" opacity="0.23"/><circle cx="437.0" cy="495.1" r="0.6" fill="#fff" opacity="0.59"/><circle cx="481.6" cy="414.7" r="0.6" fill="#fff" opacity="0.32"/><circle cx="353.4" cy="307.2" r="0.6" fill="#fff" opacity="0.35"/><circle cx="309.3" cy="361.8" r="0.6" fill="#fff" opacity="0.21"/><circle cx="421.0" cy="608.1" r="0.6" fill="#fff" opacity="0.26"/><circle cx="341.1" cy="582.0" r="0.6" fill="#fff" opacity="0.27"/><circle cx="353.4" cy="468.4" r="0.6" fill="#fff" opacity="0.43"/><circle cx="357.6" cy="629.6" r="0.6" fill="#fff" opacity="0.22"/><circle cx="384.0" cy="421.0" r="0.6" fill="#fff" opacity="0.58"/><circle cx="345.3" cy="400.5" r="0.6" fill="#fff" opacity="0.36"/><circle cx="334.6" cy="351.2" r="0.6" fill="#fff" opacity="0.50"/><circle cx="400.7" cy="341.6" r="0.6" fill="#fff" opacity="0.60"/><circle cx="462.1" cy="279.5" r="0.6" fill="#fff" opacity="0.36"/><circle cx="329.1" cy="542.5" r="0.6" fill="#fff" opacity="0.56"/><circle cx="327.8" cy="456.2" r="0.6" fill="#fff" opacity="0.37"/><circle cx="443.5" cy="420.3" r="0.6" fill="#fff" opacity="0.22"/><circle cx="380.3" cy="225.4" r="0.6" fill="#fff" opacity="0.49"/><circle cx="318.0" cy="364.8" r="0.6" fill="#fff" opacity="0.32"/><circle cx="381.0" cy="454.7" r="0.6" fill="#fff" opacity="0.25"/><circle cx="333.0" cy="526.4" r="0.6" fill="#fff" opacity="0.36"/><circle cx="487.6" cy="539.3" r="0.6" fill="#fff" opacity="0.41"/><circle cx="403.5" cy="582.4" r="0.6" fill="#fff" opacity="0.36"/><circle cx="402.0" cy="525.0" r="0.6" fill="#fff" opacity="0.56"/><circle cx="486.9" cy="442.9" r="0.6" fill="#fff" opacity="0.55"/><circle cx="304.4" cy="582.9" r="0.6" fill="#fff" opacity="0.29"/><circle cx="398.4" cy="324.8" r="0.6" fill="#fff" opacity="0.56"/><circle cx="486.6" cy="603.5" r="0.6" fill="#fff" opacity="0.25"/><circle cx="256.7" cy="411.0" r="0.6" fill="#fff" opacity="0.20"/><circle cx="401.9" cy="581.1" r="0.6" fill="#fff" opacity="0.33"/><circle cx="424.1" cy="369.3" r="0.6" fill="#fff" opacity="0.34"/><circle cx="384.2" cy="461.2" r="0.6" fill="#fff" opacity="0.21"/><circle cx="441.4" cy="418.7" r="0.6" fill="#fff" opacity="0.40"/><circle cx="359.8" cy="494.0" r="0.6" fill="#fff" opacity="0.32"/><circle cx="438.4" cy="695.6" r="0.6" fill="#fff" opacity="0.34"/><circle cx="363.7" cy="492.7" r="0.6" fill="#fff" opacity="0.55"/><circle cx="440.3" cy="477.7" r="0.6" fill="#fff" opacity="0.45"/></g>
<rect width="510" height="908" filter="url(#grain)" opacity="0.2"/>
<path d="M-5 770 L0 770.0 L10 772.0 L20 774.0 L30 776.0 L40 778.0 L50 780.0 L60 782.0 L70 784.3 L80 786.6 L90 788.9 L100 791.2 L110 793.5 L120 795.8 L130 799.2 L140 802.8 L150 806.4 L160 810.0 L170 813.5 L180 817.1 L190 820.7 L200 824.3 L210 827.8 L220 831.4 L230 835.0 L240 838.0 L250 840.9 L260 843.9 L270 846.9 L280 849.8 L290 852.8 L300 855.8 L310 858.7 L320 861.7 L330 863.5 L340 865.1 L350 866.7 L360 868.3 L370 869.9 L380 871.5 L390 873.2 L400 874.8 L410 876.4 L420 878.0 L430 879.1 L440 880.2 L450 881.3 L460 882.4 L470 883.6 L480 884.7 L490 885.8 L500 886.9 L510 888.0 L510 908 L-5 908Z" fill="url(#hillg)" opacity="0.55" filter="url(#b4)" transform="translate(0 -14)"/>
<path d="M-5 770 L0 770.0 L10 772.0 L20 774.0 L30 776.0 L40 778.0 L50 780.0 L60 782.0 L70 784.3 L80 786.6 L90 788.9 L100 791.2 L110 793.5 L120 795.8 L130 799.2 L140 802.8 L150 806.4 L160 810.0 L170 813.5 L180 817.1 L190 820.7 L200 824.3 L210 827.8 L220 831.4 L230 835.0 L240 838.0 L250 840.9 L260 843.9 L270 846.9 L280 849.8 L290 852.8 L300 855.8 L310 858.7 L320 861.7 L330 863.5 L340 865.1 L350 866.7 L360 868.3 L370 869.9 L380 871.5 L390 873.2 L400 874.8 L410 876.4 L420 878.0 L430 879.1 L440 880.2 L450 881.3 L460 882.4 L470 883.6 L480 884.7 L490 885.8 L500 886.9 L510 888.0 L510 908 L-5 908Z" fill="url(#hillg)" filter="url(#b15)"/>
<g><path d="M94.6 805.1 Q93.6 800.8 89.1 796.6" stroke="#2a3062" stroke-width="0.78" fill="none" opacity="0.66"/><path d="M447.2 892.1 Q451.2 888.7 448.1 885.2" stroke="#8181ac" stroke-width="0.90" fill="none" opacity="0.29"/><path d="M111.1 795.1 Q98.5 775.1 91.0 755.0" stroke="#2a3062" stroke-width="0.71" fill="none" opacity="0.55"/><path d="M406.1 878.7 Q410.4 869.2 413.2 859.7" stroke="#7677a3" stroke-width="0.71" fill="none" opacity="0.39"/><path d="M476.9 894.3 Q474.0 889.1 477.6 883.8" stroke="#8989b3" stroke-width="1.38" fill="none" opacity="0.45"/><path d="M269.7 853.5 Q268.1 850.0 269.9 846.4" stroke="#515584" stroke-width="0.73" fill="none" opacity="0.61"/><path d="M40.3 778.9 Q29.3 757.2 21.7 735.6" stroke="#2a3062" stroke-width="0.99" fill="none" opacity="0.33"/><path d="M461.5 900.3 Q463.1 898.1 460.8 895.9" stroke="#8585af" stroke-width="0.85" fill="none" opacity="0.67"/><path d="M254.9 840.7 Q254.8 827.5 256.9 814.4" stroke="#4d5180" stroke-width="1.09" fill="none" opacity="0.60"/><path d="M263.7 851.1 Q266.1 832.6 268.2 814.1" stroke="#505382" stroke-width="1.36" fill="none" opacity="0.33"/><path d="M400.4 872.8 Q396.1 864.2 392.7 855.5" stroke="#7476a1" stroke-width="1.20" fill="none" opacity="0.60"/><path d="M406.4 875.5 Q403.7 868.2 399.7 861.0" stroke="#7677a3" stroke-width="0.95" fill="none" opacity="0.27"/><path d="M305.4 868.5 Q307.4 855.8 314.6 843.1" stroke="#5b5e8c" stroke-width="0.64" fill="none" opacity="0.26"/><path d="M253.0 846.2 Q251.2 836.0 244.7 825.8" stroke="#4d5180" stroke-width="0.57" fill="none" opacity="0.66"/><path d="M290.8 860.1 Q280.9 843.9 276.6 827.8" stroke="#575a88" stroke-width="0.78" fill="none" opacity="0.27"/><path d="M158.5 818.3 Q152.6 802.0 145.4 785.8" stroke="#34396a" stroke-width="0.58" fill="none" opacity="0.62"/><path d="M84.2 787.7 Q87.9 779.8 86.3 771.9" stroke="#2a3062" stroke-width="1.21" fill="none" opacity="0.28"/><path d="M208.5 830.1 Q207.9 824.0 214.6 817.9" stroke="#414676" stroke-width="0.94" fill="none" opacity="0.59"/><path d="M507.8 885.2 Q505.6 877.8 510.7 870.4" stroke="#8a8ab4" stroke-width="0.72" fill="none" opacity="0.65"/><path d="M68.6 787.4 Q63.0 776.0 64.2 764.7" stroke="#2a3062" stroke-width="0.53" fill="none" opacity="0.70"/><path d="M391.9 885.1 Q390.5 880.7 388.3 876.4" stroke="#72739f" stroke-width="0.72" fill="none" opacity="0.46"/><path d="M479.9 887.4 Q483.5 882.0 485.4 876.6" stroke="#8989b3" stroke-width="0.54" fill="none" opacity="0.43"/><path d="M332.9 859.3 Q336.6 853.3 334.5 847.2" stroke="#626592" stroke-width="1.03" fill="none" opacity="0.65"/><path d="M235.5 840.1 Q233.3 822.0 226.6 803.9" stroke="#484c7c" stroke-width="0.69" fill="none" opacity="0.41"/><path d="M90.5 796.2 Q84.6 789.0 83.4 781.7" stroke="#2a3062" stroke-width="0.92" fill="none" opacity="0.39"/><path d="M227.5 851.9 Q230.2 837.3 237.7 822.6" stroke="#464a7a" stroke-width="0.84" fill="none" opacity="0.28"/><path d="M354.5 870.1 Q348.7 866.0 347.9 861.9" stroke="#686a97" stroke-width="0.74" fill="none" opacity="0.43"/><path d="M475.3 895.3 Q471.1 890.3 472.5 885.3" stroke="#8888b2" stroke-width="1.34" fill="none" opacity="0.41"/><path d="M393.2 885.0 Q383.5 874.7 376.6 864.4" stroke="#7274a0" stroke-width="0.85" fill="none" opacity="0.29"/><path d="M453.8 883.6 Q449.4 872.1 452.1 860.6" stroke="#8383ae" stroke-width="0.85" fill="none" opacity="0.36"/><path d="M16.2 770.9 Q2.8 755.6 -7.6 740.3" stroke="#2a3062" stroke-width="0.88" fill="none" opacity="0.49"/><path d="M65.7 794.3 Q68.8 783.8 69.3 773.4" stroke="#2a3062" stroke-width="0.63" fill="none" opacity="0.34"/><path d="M140.8 814.2 Q140.3 800.2 134.0 786.2" stroke="#2f3566" stroke-width="0.70" fill="none" opacity="0.38"/><path d="M174.4 814.3 Q172.4 810.5 168.4 806.7" stroke="#383d6e" stroke-width="1.01" fill="none" opacity="0.61"/><path d="M502.3 888.3 Q504.1 878.9 510.3 869.4" stroke="#8a8ab4" stroke-width="1.12" fill="none" opacity="0.55"/><path d="M491.7 900.8 Q488.7 896.1 492.2 891.3" stroke="#8a8ab4" stroke-width="0.88" fill="none" opacity="0.43"/><path d="M26.3 778.5 Q23.2 766.2 23.7 753.9" stroke="#2a3062" stroke-width="0.64" fill="none" opacity="0.43"/><path d="M242.1 836.6 Q232.7 822.6 229.9 808.6" stroke="#4a4e7d" stroke-width="0.81" fill="none" opacity="0.44"/><path d="M73.4 793.1 Q74.2 770.9 71.8 748.8" stroke="#2a3062" stroke-width="0.52" fill="none" opacity="0.43"/><path d="M184.4 814.2 Q175.9 802.6 167.4 791.1" stroke="#3b4070" stroke-width="1.03" fill="none" opacity="0.46"/><path d="M164.3 811.6 Q166.2 807.4 161.8 803.2" stroke="#353b6c" stroke-width="1.01" fill="none" opacity="0.37"/><path d="M342.4 863.9 Q346.3 856.2 343.0 848.5" stroke="#656794" stroke-width="0.83" fill="none" opacity="0.51"/><path d="M485.0 897.7 Q484.8 888.0 485.9 878.4" stroke="#8a8ab4" stroke-width="0.87" fill="none" opacity="0.37"/><path d="M426.4 893.8 Q425.2 887.7 431.4 881.6" stroke="#7b7ca7" stroke-width="0.62" fill="none" opacity="0.48"/><path d="M155.5 811.0 Q138.4 785.5 126.3 760.0" stroke="#33386a" stroke-width="0.71" fill="none" opacity="0.56"/><path d="M117.0 789.1 Q110.8 771.5 108.8 754.0" stroke="#2a3062" stroke-width="0.94" fill="none" opacity="0.54"/><path d="M280.0 858.8 Q287.7 846.1 287.8 833.4" stroke="#545886" stroke-width="0.80" fill="none" opacity="0.41"/><path d="M455.9 883.5 Q458.8 872.8 458.8 862.1" stroke="#8383ae" stroke-width="1.37" fill="none" opacity="0.62"/><path d="M77.9 795.0 Q76.5 778.4 77.1 761.8" stroke="#2a3062" stroke-width="0.76" fill="none" opacity="0.59"/><path d="M272.7 847.3 Q267.8 840.3 268.2 833.2" stroke="#525684" stroke-width="0.96" fill="none" opacity="0.31"/><path d="M27.9 771.2 Q25.7 764.9 29.8 758.5" stroke="#2a3062" stroke-width="0.91" fill="none" opacity="0.60"/><path d="M245.0 837.3 Q247.8 819.4 257.8 801.4" stroke="#4b4f7e" stroke-width="0.73" fill="none" opacity="0.48"/><path d="M409.2 879.7 Q406.7 869.7 400.8 859.7" stroke="#7778a3" stroke-width="0.79" fill="none" opacity="0.40"/><path d="M389.8 887.3 Q388.9 875.1 389.3 862.9" stroke="#71739f" stroke-width="1.14" fill="none" opacity="0.53"/><path d="M427.1 892.0 Q427.6 888.7 425.5 885.5" stroke="#7b7ca7" stroke-width="0.71" fill="none" opacity="0.33"/><path d="M2.1 778.5 Q11.9 753.0 27.6 727.6" stroke="#2a3062" stroke-width="1.12" fill="none" opacity="0.44"/><path d="M323.4 865.9 Q329.3 847.9 342.4 829.9" stroke="#606290" stroke-width="1.14" fill="none" opacity="0.30"/><path d="M17.0 774.3 Q24.9 754.1 38.7 733.8" stroke="#2a3062" stroke-width="0.80" fill="none" opacity="0.26"/><path d="M277.1 854.6 Q276.4 845.3 270.8 836.1" stroke="#535785" stroke-width="1.25" fill="none" opacity="0.38"/><path d="M198.7 832.6 Q208.7 811.4 220.6 790.3" stroke="#3e4373" stroke-width="1.12" fill="none" opacity="0.50"/><path d="M411.1 874.1 Q412.4 870.7 406.8 867.3" stroke="#7778a4" stroke-width="0.73" fill="none" opacity="0.47"/><path d="M57.6 783.3 Q54.7 779.0 57.4 774.8" stroke="#2a3062" stroke-width="1.06" fill="none" opacity="0.37"/><path d="M113.3 799.8 Q104.7 787.5 103.2 775.1" stroke="#2a3062" stroke-width="0.56" fill="none" opacity="0.65"/><path d="M155.9 804.4 Q158.8 795.9 153.8 787.4" stroke="#33386a" stroke-width="0.68" fill="none" opacity="0.64"/><path d="M246.8 843.9 Q239.3 826.4 238.8 808.9" stroke="#4b4f7e" stroke-width="1.00" fill="none" opacity="0.55"/><path d="M319.0 862.1 Q329.7 842.8 332.5 823.5" stroke="#5f618f" stroke-width="0.90" fill="none" opacity="0.63"/><path d="M372.0 868.5 Q367.9 866.6 369.9 864.7" stroke="#6d6e9b" stroke-width="0.57" fill="none" opacity="0.41"/><path d="M386.9 874.1 Q379.3 867.7 376.3 861.3" stroke="#71729e" stroke-width="1.36" fill="none" opacity="0.25"/><path d="M269.2 860.1 Q271.6 842.7 275.6 825.3" stroke="#515583" stroke-width="1.22" fill="none" opacity="0.62"/><path d="M394.2 891.5 Q394.7 888.7 396.8 885.9" stroke="#7374a0" stroke-width="1.13" fill="none" opacity="0.36"/><path d="M468.0 877.9 Q463.4 869.6 460.5 861.4" stroke="#8687b1" stroke-width="0.83" fill="none" opacity="0.55"/><path d="M416.6 880.2 Q412.2 870.7 411.2 861.3" stroke="#797aa5" stroke-width="1.31" fill="none" opacity="0.39"/><path d="M44.0 780.8 Q35.9 759.9 23.9 738.9" stroke="#2a3062" stroke-width="0.99" fill="none" opacity="0.56"/><path d="M87.2 784.8 Q84.6 777.6 83.1 770.4" stroke="#2a3062" stroke-width="0.51" fill="none" opacity="0.48"/><path d="M204.7 827.7 Q207.9 816.1 215.8 804.5" stroke="#404575" stroke-width="1.29" fill="none" opacity="0.39"/><path d="M387.1 869.3 Q388.2 855.3 381.9 841.3" stroke="#71729e" stroke-width="0.70" fill="none" opacity="0.43"/><path d="M362.1 866.9 Q366.3 861.7 363.3 856.5" stroke="#6a6c99" stroke-width="0.79" fill="none" opacity="0.33"/><path d="M180.7 835.1 Q180.2 827.5 181.7 819.9" stroke="#3a3f6f" stroke-width="1.08" fill="none" opacity="0.35"/><path d="M315.5 875.7 Q316.5 856.8 317.5 837.9" stroke="#5e608e" stroke-width="1.01" fill="none" opacity="0.30"/><path d="M430.5 889.7 Q430.6 882.2 432.0 874.8" stroke="#7c7da8" stroke-width="0.85" fill="none" opacity="0.35"/><path d="M307.3 865.7 Q300.7 855.9 292.1 846.1" stroke="#5b5e8c" stroke-width="0.90" fill="none" opacity="0.52"/><path d="M304.2 873.4 Q307.4 867.8 302.6 862.3" stroke="#5b5e8b" stroke-width="1.16" fill="none" opacity="0.39"/><path d="M378.1 889.0 Q377.4 882.5 382.7 876.0" stroke="#6e709c" stroke-width="1.39" fill="none" opacity="0.47"/><path d="M116.7 809.2 Q128.0 790.2 133.9 771.3" stroke="#2a3062" stroke-width="1.22" fill="none" opacity="0.48"/><path d="M511.7 883.6 Q511.7 870.9 515.6 858.3" stroke="#8a8ab4" stroke-width="1.23" fill="none" opacity="0.45"/><path d="M273.9 862.8 Q272.8 856.8 269.3 850.8" stroke="#535685" stroke-width="0.57" fill="none" opacity="0.50"/><path d="M404.3 881.2 Q408.4 876.6 406.8 871.9" stroke="#7577a2" stroke-width="1.19" fill="none" opacity="0.50"/><path d="M466.0 896.2 Q461.8 892.6 464.0 889.1" stroke="#8686b0" stroke-width="0.53" fill="none" opacity="0.41"/><path d="M444.7 894.8 Q442.3 891.9 441.7 888.9" stroke="#8081ab" stroke-width="1.26" fill="none" opacity="0.53"/><path d="M463.9 878.6 Q458.7 865.8 451.5 853.0" stroke="#8585b0" stroke-width="1.29" fill="none" opacity="0.58"/><path d="M97.5 800.6 Q86.7 788.9 78.5 777.3" stroke="#2a3062" stroke-width="0.78" fill="none" opacity="0.53"/><path d="M139.8 811.2 Q126.6 791.7 119.4 772.3" stroke="#2f3466" stroke-width="1.12" fill="none" opacity="0.46"/><path d="M62.1 779.3 Q61.9 750.8 64.0 722.4" stroke="#2a3062" stroke-width="0.68" fill="none" opacity="0.70"/><path d="M354.7 879.1 Q351.9 873.1 350.6 867.1" stroke="#686a97" stroke-width="0.63" fill="none" opacity="0.53"/><path d="M215.9 843.6 Q214.3 833.3 212.7 823.0" stroke="#434777" stroke-width="1.35" fill="none" opacity="0.41"/><path d="M360.9 868.1 Q360.7 859.6 354.5 851.0" stroke="#6a6c98" stroke-width="0.76" fill="none" opacity="0.63"/><path d="M346.9 871.1 Q345.7 857.9 340.6 844.7" stroke="#666895" stroke-width="1.04" fill="none" opacity="0.45"/><path d="M28.4 779.7 Q30.1 768.8 24.6 757.8" stroke="#2a3062" stroke-width="0.76" fill="none" opacity="0.56"/><path d="M344.5 865.7 Q344.0 859.7 337.3 853.7" stroke="#656895" stroke-width="0.73" fill="none" opacity="0.44"/><path d="M172.6 828.2 Q173.2 802.1 173.1 776.0" stroke="#383d6d" stroke-width="0.59" fill="none" opacity="0.65"/><path d="M41.0 780.9 Q44.6 767.5 45.5 754.1" stroke="#2a3062" stroke-width="0.81" fill="none" opacity="0.65"/><path d="M488.8 880.2 Q486.4 870.5 486.2 860.8" stroke="#8a8ab4" stroke-width="0.92" fill="none" opacity="0.39"/><path d="M343.9 874.2 Q354.2 861.7 356.6 849.2" stroke="#656794" stroke-width="0.86" fill="none" opacity="0.62"/><path d="M333.0 874.8 Q324.3 863.1 316.3 851.4" stroke="#626592" stroke-width="0.86" fill="none" opacity="0.55"/><path d="M108.4 810.9 Q103.2 801.9 103.7 793.0" stroke="#2a3062" stroke-width="0.86" fill="none" opacity="0.58"/><path d="M38.4 775.7 Q41.4 754.9 40.4 734.2" stroke="#2a3062" stroke-width="0.73" fill="none" opacity="0.62"/><path d="M375.1 883.4 Q370.7 880.1 374.1 876.8" stroke="#6e6f9c" stroke-width="1.27" fill="none" opacity="0.68"/><path d="M460.8 877.1 Q460.7 870.9 460.1 864.7" stroke="#8485af" stroke-width="0.60" fill="none" opacity="0.61"/><path d="M151.8 813.2 Q148.7 806.2 151.5 799.2" stroke="#323769" stroke-width="0.58" fill="none" opacity="0.48"/><path d="M147.9 818.3 Q142.2 808.3 143.7 798.2" stroke="#313668" stroke-width="0.70" fill="none" opacity="0.45"/><path d="M285.2 856.4 Q277.8 840.6 264.8 824.9" stroke="#565987" stroke-width="0.64" fill="none" opacity="0.69"/><path d="M268.0 850.0 Q276.4 836.6 277.4 823.1" stroke="#515483" stroke-width="0.87" fill="none" opacity="0.25"/><path d="M74.9 799.1 Q75.8 776.3 82.1 753.6" stroke="#2a3062" stroke-width="0.98" fill="none" opacity="0.26"/><path d="M52.3 781.7 Q57.2 752.6 56.5 723.6" stroke="#2a3062" stroke-width="0.54" fill="none" opacity="0.44"/><path d="M35.7 777.4 Q37.0 771.3 41.0 765.1" stroke="#2a3062" stroke-width="0.94" fill="none" opacity="0.54"/><path d="M456.1 898.7 Q458.4 889.8 454.3 880.9" stroke="#8384ae" stroke-width="0.86" fill="none" opacity="0.38"/><path d="M379.4 871.6 Q378.1 865.3 377.1 859.0" stroke="#6f709d" stroke-width="0.82" fill="none" opacity="0.44"/><path d="M229.4 830.0 Q218.8 815.0 207.8 800.0" stroke="#474b7a" stroke-width="0.99" fill="none" opacity="0.43"/><path d="M110.8 790.0 Q106.4 777.2 102.2 764.4" stroke="#2a3062" stroke-width="0.71" fill="none" opacity="0.59"/><path d="M248.5 834.7 Q249.1 825.4 257.7 816.1" stroke="#4c507f" stroke-width="1.03" fill="none" opacity="0.68"/><path d="M185.1 827.3 Q181.5 814.6 176.2 802.0" stroke="#3b4070" stroke-width="1.03" fill="none" opacity="0.39"/><path d="M253.8 848.4 Q240.4 834.8 233.6 821.2" stroke="#4d5180" stroke-width="0.73" fill="none" opacity="0.37"/><path d="M408.7 880.4 Q404.3 868.1 403.3 855.7" stroke="#7678a3" stroke-width="1.11" fill="none" opacity="0.29"/><path d="M506.7 901.6 Q507.4 896.0 503.0 890.3" stroke="#8a8ab4" stroke-width="1.21" fill="none" opacity="0.54"/><path d="M24.5 787.2 Q25.2 782.2 25.0 777.2" stroke="#2a3062" stroke-width="1.33" fill="none" opacity="0.54"/><path d="M6.6 787.7 Q2.6 764.2 6.4 740.7" stroke="#2a3062" stroke-width="1.16" fill="none" opacity="0.44"/><path d="M348.4 884.0 Q343.0 873.1 333.1 862.2" stroke="#666996" stroke-width="0.90" fill="none" opacity="0.59"/><path d="M191.5 826.0 Q182.0 813.1 175.3 800.1" stroke="#3d4172" stroke-width="1.16" fill="none" opacity="0.28"/><path d="M55.2 795.1 Q51.3 773.8 53.5 752.6" stroke="#2a3062" stroke-width="0.61" fill="none" opacity="0.39"/><path d="M491.0 893.3 Q484.5 881.2 479.4 869.1" stroke="#8a8ab4" stroke-width="0.98" fill="none" opacity="0.63"/><path d="M59.1 796.8 Q48.7 784.1 39.3 771.3" stroke="#2a3062" stroke-width="0.84" fill="none" opacity="0.55"/><path d="M477.6 890.3 Q477.4 880.1 472.8 869.8" stroke="#8989b3" stroke-width="0.59" fill="none" opacity="0.58"/><path d="M81.6 795.0 Q76.4 786.3 76.5 777.6" stroke="#2a3062" stroke-width="0.81" fill="none" opacity="0.52"/><path d="M265.4 848.8 Q268.4 835.9 273.7 823.0" stroke="#505483" stroke-width="1.03" fill="none" opacity="0.47"/><path d="M504.9 889.3 Q498.7 879.6 496.3 870.0" stroke="#8a8ab4" stroke-width="1.16" fill="none" opacity="0.51"/><path d="M128.7 794.3 Q124.2 769.7 116.3 745.0" stroke="#2c3263" stroke-width="0.89" fill="none" opacity="0.53"/><path d="M286.0 869.0 Q282.8 849.4 279.9 829.7" stroke="#565987" stroke-width="0.71" fill="none" opacity="0.59"/><path d="M48.2 781.0 Q33.9 760.4 16.4 739.9" stroke="#2a3062" stroke-width="1.01" fill="none" opacity="0.50"/><path d="M168.2 810.5 Q176.8 782.5 180.6 754.5" stroke="#363c6c" stroke-width="0.59" fill="none" opacity="0.60"/><path d="M108.6 791.9 Q106.1 774.2 109.7 756.4" stroke="#2a3062" stroke-width="1.19" fill="none" opacity="0.51"/><path d="M462.7 898.9 Q463.6 888.8 457.2 878.7" stroke="#8585b0" stroke-width="1.15" fill="none" opacity="0.38"/><path d="M441.0 891.8 Q435.1 887.0 437.0 882.3" stroke="#7f80ab" stroke-width="0.98" fill="none" opacity="0.36"/><path d="M147.4 805.5 Q144.7 798.4 145.7 791.2" stroke="#313668" stroke-width="0.76" fill="none" opacity="0.37"/><path d="M259.8 858.8 Q264.5 853.4 263.5 848.0" stroke="#4f5281" stroke-width="1.05" fill="none" opacity="0.49"/><path d="M376.6 877.8 Q382.8 868.5 384.6 859.2" stroke="#6e709c" stroke-width="0.73" fill="none" opacity="0.27"/><path d="M482.1 887.6 Q476.9 876.9 472.5 866.2" stroke="#8a8ab4" stroke-width="0.83" fill="none" opacity="0.58"/><path d="M485.7 891.4 Q481.1 882.9 480.7 874.3" stroke="#8a8ab4" stroke-width="1.35" fill="none" opacity="0.30"/><path d="M484.1 894.9 Q481.9 892.4 486.1 889.9" stroke="#8a8ab4" stroke-width="1.01" fill="none" opacity="0.30"/><path d="M509.2 889.3 Q503.0 879.0 494.2 868.6" stroke="#8a8ab4" stroke-width="0.56" fill="none" opacity="0.26"/><path d="M291.9 870.9 Q299.2 856.1 301.9 841.3" stroke="#575a89" stroke-width="0.97" fill="none" opacity="0.28"/><path d="M269.0 845.0 Q265.6 832.8 262.2 820.7" stroke="#515583" stroke-width="0.68" fill="none" opacity="0.57"/><path d="M212.0 834.2 Q212.0 830.1 211.0 825.9" stroke="#424676" stroke-width="1.38" fill="none" opacity="0.50"/><path d="M65.1 784.4 Q70.4 772.0 68.7 759.5" stroke="#2a3062" stroke-width="1.38" fill="none" opacity="0.68"/><path d="M476.2 898.8 Q467.6 888.3 459.2 877.7" stroke="#8889b3" stroke-width="1.03" fill="none" opacity="0.56"/><path d="M313.6 868.5 Q302.4 851.7 290.8 834.9" stroke="#5d608e" stroke-width="1.36" fill="none" opacity="0.26"/><path d="M53.1 795.5 Q31.4 772.9 17.2 750.3" stroke="#2a3062" stroke-width="1.25" fill="none" opacity="0.56"/><path d="M265.3 853.4 Q265.8 837.0 274.3 820.6" stroke="#505483" stroke-width="0.56" fill="none" opacity="0.61"/><path d="M502.2 901.1 Q498.9 894.5 498.1 887.9" stroke="#8a8ab4" stroke-width="0.51" fill="none" opacity="0.60"/><path d="M131.4 807.8 Q127.6 791.0 121.1 774.2" stroke="#2d3264" stroke-width="0.91" fill="none" opacity="0.36"/><path d="M453.6 879.9 Q452.0 876.5 450.7 873.1" stroke="#8283ad" stroke-width="1.21" fill="none" opacity="0.40"/><path d="M118.9 805.2 Q116.2 794.7 117.4 784.1" stroke="#2a3062" stroke-width="1.29" fill="none" opacity="0.33"/><path d="M115.8 796.0 Q119.3 783.8 120.0 771.6" stroke="#2a3062" stroke-width="1.21" fill="none" opacity="0.49"/><path d="M35.9 789.5 Q30.9 780.3 27.2 771.1" stroke="#2a3062" stroke-width="1.39" fill="none" opacity="0.42"/><path d="M180.4 833.1 Q170.5 804.2 166.5 775.2" stroke="#3a3f6f" stroke-width="1.21" fill="none" opacity="0.60"/><path d="M170.8 826.8 Q166.8 813.9 161.3 801.1" stroke="#373c6d" stroke-width="1.17" fill="none" opacity="0.46"/><path d="M420.5 872.4 Q415.1 864.5 416.6 856.7" stroke="#7a7ba6" stroke-width="1.32" fill="none" opacity="0.31"/><path d="M101.9 806.7 Q112.4 780.2 125.4 753.7" stroke="#2a3062" stroke-width="1.34" fill="none" opacity="0.31"/><path d="M366.6 886.1 Q365.8 882.4 362.2 878.8" stroke="#6b6d9a" stroke-width="1.29" fill="none" opacity="0.58"/><path d="M488.6 890.5 Q483.4 885.0 481.8 879.5" stroke="#8a8ab4" stroke-width="1.34" fill="none" opacity="0.28"/><path d="M91.1 791.5 Q86.9 786.7 87.8 781.9" stroke="#2a3062" stroke-width="0.61" fill="none" opacity="0.49"/><path d="M276.0 856.3 Q278.4 839.2 273.6 822.1" stroke="#535685" stroke-width="0.57" fill="none" opacity="0.35"/><path d="M34.9 778.4 Q44.3 756.6 53.7 734.9" stroke="#2a3062" stroke-width="0.64" fill="none" opacity="0.40"/><path d="M290.6 854.0 Q298.2 838.3 306.5 822.5" stroke="#575a88" stroke-width="1.04" fill="none" opacity="0.63"/><path d="M236.8 835.6 Q242.4 817.3 255.6 799.0" stroke="#494d7c" stroke-width="1.19" fill="none" opacity="0.43"/><path d="M22.0 772.3 Q21.2 764.2 25.0 756.0" stroke="#2a3062" stroke-width="0.52" fill="none" opacity="0.35"/><path d="M410.6 882.5 Q406.6 872.5 407.7 862.6" stroke="#7778a4" stroke-width="0.51" fill="none" opacity="0.39"/><path d="M16.6 773.6 Q11.3 754.2 6.4 734.9" stroke="#2a3062" stroke-width="1.06" fill="none" opacity="0.39"/><path d="M180.4 832.5 Q177.0 813.9 172.9 795.2" stroke="#3a3f6f" stroke-width="0.91" fill="none" opacity="0.40"/><path d="M470.1 883.2 Q477.5 870.3 478.8 857.4" stroke="#8787b1" stroke-width="0.65" fill="none" opacity="0.48"/><path d="M507.0 888.6 Q505.5 884.7 508.3 880.8" stroke="#8a8ab4" stroke-width="1.03" fill="none" opacity="0.32"/><path d="M487.7 886.3 Q486.8 883.3 488.4 880.3" stroke="#8a8ab4" stroke-width="1.00" fill="none" opacity="0.47"/><path d="M474.7 890.4 Q470.5 885.4 466.3 880.3" stroke="#8888b2" stroke-width="0.74" fill="none" opacity="0.51"/><path d="M323.6 867.5 Q323.0 863.1 322.7 858.8" stroke="#606290" stroke-width="1.08" fill="none" opacity="0.69"/><path d="M140.7 807.7 Q140.1 801.9 143.7 796.1" stroke="#2f3566" stroke-width="1.25" fill="none" opacity="0.61"/><path d="M127.4 814.0 Q124.7 797.3 121.1 780.6" stroke="#2b3163" stroke-width="1.35" fill="none" opacity="0.47"/><path d="M245.7 840.6 Q242.7 822.1 242.2 803.6" stroke="#4b4f7e" stroke-width="0.68" fill="none" opacity="0.35"/><path d="M428.8 892.3 Q435.7 879.2 439.8 866.2" stroke="#7c7da8" stroke-width="1.22" fill="none" opacity="0.57"/><path d="M416.0 890.6 Q415.5 886.7 418.2 882.9" stroke="#787aa5" stroke-width="0.72" fill="none" opacity="0.66"/><path d="M6.9 777.7 Q10.9 765.3 13.2 752.9" stroke="#2a3062" stroke-width="1.32" fill="none" opacity="0.67"/><path d="M330.0 859.0 Q328.4 850.4 319.0 841.8" stroke="#626491" stroke-width="1.28" fill="none" opacity="0.39"/><path d="M91.7 799.9 Q103.6 779.0 113.6 758.0" stroke="#2a3062" stroke-width="0.61" fill="none" opacity="0.58"/><path d="M25.5 789.9 Q34.2 766.7 36.9 743.5" stroke="#2a3062" stroke-width="1.01" fill="none" opacity="0.67"/><path d="M327.3 868.8 Q320.8 859.2 321.9 849.7" stroke="#616391" stroke-width="0.64" fill="none" opacity="0.61"/><path d="M113.9 804.1 Q117.3 780.2 120.3 756.3" stroke="#2a3062" stroke-width="0.78" fill="none" opacity="0.37"/><path d="M92.4 799.0 Q100.1 779.2 110.6 759.4" stroke="#2a3062" stroke-width="1.33" fill="none" opacity="0.66"/><path d="M146.1 821.8 Q157.1 803.9 163.7 785.9" stroke="#303667" stroke-width="0.80" fill="none" opacity="0.38"/><path d="M266.7 851.6 Q268.1 848.4 268.9 845.2" stroke="#515483" stroke-width="0.93" fill="none" opacity="0.59"/><path d="M124.9 796.2 Q115.9 778.8 109.7 761.3" stroke="#2b3163" stroke-width="0.56" fill="none" opacity="0.27"/><path d="M179.8 823.7 Q181.0 795.1 183.6 766.5" stroke="#393e6f" stroke-width="0.87" fill="none" opacity="0.36"/><path d="M241.4 855.4 Q242.0 850.5 239.6 845.6" stroke="#4a4e7d" stroke-width="1.19" fill="none" opacity="0.50"/><path d="M328.4 879.7 Q321.1 861.5 313.1 843.3" stroke="#616491" stroke-width="1.40" fill="none" opacity="0.49"/><path d="M93.5 802.1 Q91.3 797.5 88.3 793.0" stroke="#2a3062" stroke-width="0.75" fill="none" opacity="0.57"/><path d="M372.9 872.1 Q375.5 860.6 374.7 849.2" stroke="#6d6f9b" stroke-width="0.91" fill="none" opacity="0.44"/><path d="M50.4 785.5 Q57.2 758.6 71.0 731.7" stroke="#2a3062" stroke-width="0.56" fill="none" opacity="0.37"/><path d="M356.1 872.2 Q356.1 868.8 354.8 865.5" stroke="#686b97" stroke-width="1.17" fill="none" opacity="0.43"/><path d="M332.8 874.3 Q328.8 866.6 321.3 859.0" stroke="#626592" stroke-width="0.62" fill="none" opacity="0.27"/><path d="M241.3 832.8 Q240.1 828.8 239.4 824.8" stroke="#4a4e7d" stroke-width="0.60" fill="none" opacity="0.68"/><path d="M438.1 885.7 Q439.1 877.0 432.3 868.2" stroke="#7e7faa" stroke-width="0.61" fill="none" opacity="0.39"/><path d="M109.9 808.2 Q105.6 791.5 102.8 774.7" stroke="#2a3062" stroke-width="1.30" fill="none" opacity="0.37"/><path d="M406.5 886.8 Q404.0 879.6 402.6 872.4" stroke="#7677a3" stroke-width="0.91" fill="none" opacity="0.39"/><path d="M319.4 865.4 Q320.9 857.2 323.2 848.9" stroke="#5f618f" stroke-width="0.93" fill="none" opacity="0.65"/><path d="M231.4 838.4 Q242.6 820.9 249.3 803.4" stroke="#474b7b" stroke-width="0.86" fill="none" opacity="0.55"/><path d="M380.3 872.7 Q386.2 862.8 389.6 852.9" stroke="#6f719d" stroke-width="1.10" fill="none" opacity="0.45"/><path d="M334.8 863.6 Q338.0 852.2 333.6 840.7" stroke="#636592" stroke-width="0.81" fill="none" opacity="0.57"/><path d="M3.7 774.7 Q-4.4 752.6 -14.4 730.6" stroke="#2a3062" stroke-width="0.70" fill="none" opacity="0.43"/><path d="M511.7 886.7 Q504.6 876.0 496.1 865.2" stroke="#8a8ab4" stroke-width="1.24" fill="none" opacity="0.63"/><path d="M198.5 831.9 Q205.2 809.9 208.0 788.0" stroke="#3e4373" stroke-width="1.02" fill="none" opacity="0.36"/><path d="M361.7 876.1 Q362.8 868.4 369.8 860.7" stroke="#6a6c99" stroke-width="1.20" fill="none" opacity="0.40"/><path d="M372.8 887.2 Q372.9 881.9 372.6 876.7" stroke="#6d6f9b" stroke-width="0.95" fill="none" opacity="0.33"/><path d="M320.2 877.2 Q317.4 862.9 309.7 848.6" stroke="#5f628f" stroke-width="0.88" fill="none" opacity="0.32"/><path d="M310.0 863.8 Q316.6 852.6 322.0 841.4" stroke="#5c5f8d" stroke-width="1.36" fill="none" opacity="0.41"/><path d="M389.6 868.9 Q391.9 863.4 391.1 857.8" stroke="#71739f" stroke-width="1.25" fill="none" opacity="0.42"/><path d="M137.3 804.4 Q125.2 790.4 115.1 776.5" stroke="#2e3465" stroke-width="1.09" fill="none" opacity="0.32"/><path d="M156.8 823.7 Q143.2 797.7 134.8 771.7" stroke="#33396a" stroke-width="0.61" fill="none" opacity="0.29"/><path d="M407.9 887.8 Q408.9 882.7 406.8 877.6" stroke="#7677a3" stroke-width="0.53" fill="none" opacity="0.62"/><path d="M442.0 879.5 Q442.1 869.0 444.9 858.4" stroke="#7f80ab" stroke-width="1.29" fill="none" opacity="0.35"/><path d="M241.4 839.9 Q245.0 829.3 247.4 818.6" stroke="#4a4e7d" stroke-width="1.05" fill="none" opacity="0.69"/><path d="M111.2 793.1 Q104.9 775.7 91.3 758.3" stroke="#2a3062" stroke-width="0.81" fill="none" opacity="0.45"/><path d="M219.2 845.0 Q218.8 825.1 223.7 805.3" stroke="#444878" stroke-width="0.82" fill="none" opacity="0.57"/><path d="M107.4 808.1 Q95.2 783.8 85.2 759.6" stroke="#2a3062" stroke-width="0.71" fill="none" opacity="0.57"/><path d="M19.5 784.6 Q21.5 779.5 22.8 774.3" stroke="#2a3062" stroke-width="1.02" fill="none" opacity="0.29"/><path d="M18.0 776.1 Q21.5 746.5 19.2 716.9" stroke="#2a3062" stroke-width="0.56" fill="none" opacity="0.30"/><path d="M5.9 781.9 Q4.2 774.1 -0.2 766.3" stroke="#2a3062" stroke-width="1.13" fill="none" opacity="0.40"/><path d="M238.1 838.3 Q233.4 825.5 230.9 812.7" stroke="#494d7c" stroke-width="0.72" fill="none" opacity="0.38"/><path d="M130.7 793.9 Q129.0 782.0 130.9 770.1" stroke="#2c3264" stroke-width="0.60" fill="none" opacity="0.63"/><path d="M238.9 843.9 Q244.0 835.9 245.1 827.9" stroke="#494d7d" stroke-width="1.06" fill="none" opacity="0.55"/><path d="M355.0 873.5 Q353.5 866.7 351.8 859.9" stroke="#686a97" stroke-width="0.92" fill="none" opacity="0.49"/><path d="M272.2 860.4 Q260.2 842.7 255.8 824.9" stroke="#525684" stroke-width="0.77" fill="none" opacity="0.26"/><path d="M409.1 885.1 Q409.6 880.3 404.2 875.5" stroke="#7778a3" stroke-width="1.25" fill="none" opacity="0.56"/><path d="M354.7 879.3 Q353.4 872.0 351.4 864.6" stroke="#686a97" stroke-width="1.29" fill="none" opacity="0.70"/><path d="M471.8 897.8 Q474.5 895.3 469.7 892.8" stroke="#8787b2" stroke-width="0.99" fill="none" opacity="0.48"/><path d="M156.1 823.3 Q160.8 808.0 172.4 792.7" stroke="#33396a" stroke-width="1.39" fill="none" opacity="0.26"/><path d="M72.1 788.1 Q61.6 770.8 50.0 753.5" stroke="#2a3062" stroke-width="1.35" fill="none" opacity="0.45"/><path d="M391.4 881.6 Q386.8 873.5 382.8 865.5" stroke="#72739f" stroke-width="1.31" fill="none" opacity="0.55"/><path d="M107.7 797.7 Q103.1 780.4 97.2 763.2" stroke="#2a3062" stroke-width="1.07" fill="none" opacity="0.26"/><path d="M109.4 803.1 Q106.1 795.4 98.6 787.8" stroke="#2a3062" stroke-width="0.80" fill="none" opacity="0.68"/><path d="M285.6 847.9 Q282.5 834.3 274.5 820.6" stroke="#565987" stroke-width="1.15" fill="none" opacity="0.59"/><path d="M24.8 769.8 Q9.9 748.5 -0.3 727.2" stroke="#2a3062" stroke-width="0.53" fill="none" opacity="0.32"/><path d="M241.3 855.3 Q240.6 847.2 234.6 839.1" stroke="#4a4e7d" stroke-width="0.67" fill="none" opacity="0.54"/><path d="M314.9 876.6 Q313.9 873.1 314.7 869.6" stroke="#5d608e" stroke-width="1.24" fill="none" opacity="0.36"/><path d="M366.8 867.8 Q368.3 860.7 374.0 853.5" stroke="#6b6d9a" stroke-width="0.75" fill="none" opacity="0.66"/><path d="M345.7 861.6 Q342.4 857.8 342.4 854.0" stroke="#666895" stroke-width="1.26" fill="none" opacity="0.57"/><path d="M504.5 897.5 Q503.9 888.0 499.8 878.6" stroke="#8a8ab4" stroke-width="0.94" fill="none" opacity="0.28"/><path d="M250.8 844.4 Q239.5 834.2 235.6 824.0" stroke="#4c507f" stroke-width="1.38" fill="none" opacity="0.42"/><path d="M166.6 809.9 Q171.5 792.1 181.6 774.3" stroke="#363b6c" stroke-width="0.95" fill="none" opacity="0.47"/><path d="M393.2 881.2 Q392.8 877.0 388.9 872.7" stroke="#7274a0" stroke-width="0.57" fill="none" opacity="0.64"/><path d="M12.4 771.0 Q18.3 755.8 22.3 740.5" stroke="#2a3062" stroke-width="1.17" fill="none" opacity="0.59"/><path d="M370.6 865.3 Q361.8 854.7 358.5 844.1" stroke="#6c6e9b" stroke-width="0.53" fill="none" opacity="0.26"/><path d="M451.0 884.6 Q452.0 882.3 447.5 880.0" stroke="#8282ad" stroke-width="1.04" fill="none" opacity="0.66"/><path d="M14.4 769.6 Q6.2 759.5 4.2 749.5" stroke="#2a3062" stroke-width="0.68" fill="none" opacity="0.54"/><path d="M82.4 785.2 Q75.2 767.9 73.6 750.7" stroke="#2a3062" stroke-width="1.01" fill="none" opacity="0.48"/><path d="M196.8 828.5 Q194.5 823.7 197.1 818.9" stroke="#3e4373" stroke-width="0.80" fill="none" opacity="0.25"/><path d="M456.6 890.2 Q459.8 883.4 455.9 876.7" stroke="#8384ae" stroke-width="0.62" fill="none" opacity="0.42"/><path d="M363.2 871.7 Q363.6 861.8 371.3 851.9" stroke="#6a6c99" stroke-width="0.76" fill="none" opacity="0.38"/><path d="M385.1 885.2 Q386.8 875.5 393.6 865.7" stroke="#70729e" stroke-width="0.85" fill="none" opacity="0.63"/><path d="M393.1 870.4 Q398.7 856.5 398.4 842.6" stroke="#7274a0" stroke-width="0.83" fill="none" opacity="0.52"/><path d="M493.5 901.7 Q500.8 893.3 500.1 884.8" stroke="#8a8ab4" stroke-width="1.26" fill="none" opacity="0.55"/><path d="M494.4 883.7 Q491.3 876.8 494.1 869.9" stroke="#8a8ab4" stroke-width="1.20" fill="none" opacity="0.28"/><path d="M322.0 862.9 Q319.7 854.1 322.4 845.3" stroke="#5f6290" stroke-width="0.90" fill="none" opacity="0.64"/><path d="M508.2 888.1 Q506.5 881.7 509.9 875.4" stroke="#8a8ab4" stroke-width="1.26" fill="none" opacity="0.34"/><path d="M284.5 853.3 Q278.8 851.2 281.0 849.1" stroke="#555987" stroke-width="0.80" fill="none" opacity="0.37"/><path d="M510.5 897.3 Q508.8 894.7 511.3 892.1" stroke="#8a8ab4" stroke-width="0.93" fill="none" opacity="0.58"/><path d="M440.5 896.7 Q437.4 890.0 436.0 883.2" stroke="#7f80aa" stroke-width="0.78" fill="none" opacity="0.58"/><path d="M235.7 847.2 Q240.8 841.7 238.4 836.3" stroke="#484c7c" stroke-width="0.68" fill="none" opacity="0.53"/><path d="M79.3 781.3 Q74.4 768.3 65.8 755.3" stroke="#2a3062" stroke-width="1.02" fill="none" opacity="0.55"/><path d="M498.3 882.1 Q496.2 879.7 494.6 877.3" stroke="#8a8ab4" stroke-width="1.24" fill="none" opacity="0.56"/><path d="M279.9 864.3 Q275.8 856.1 269.5 847.9" stroke="#545786" stroke-width="0.52" fill="none" opacity="0.35"/><path d="M10.5 770.0 Q7.2 764.6 9.8 759.1" stroke="#2a3062" stroke-width="1.04" fill="none" opacity="0.62"/><path d="M174.1 811.9 Q180.9 790.8 181.5 769.8" stroke="#383d6e" stroke-width="1.00" fill="none" opacity="0.51"/><path d="M443.8 890.9 Q441.1 877.7 434.0 864.5" stroke="#8080ab" stroke-width="1.07" fill="none" opacity="0.46"/><path d="M0.6 775.6 Q0.9 764.9 1.1 754.2" stroke="#2a3062" stroke-width="0.96" fill="none" opacity="0.28"/><path d="M63.4 791.3 Q75.9 772.2 83.7 753.1" stroke="#2a3062" stroke-width="0.76" fill="none" opacity="0.46"/><path d="M258.0 856.6 Q261.9 847.3 266.0 837.9" stroke="#4e5281" stroke-width="0.86" fill="none" opacity="0.47"/><path d="M180.8 835.4 Q176.4 830.5 178.7 825.7" stroke="#3a3f6f" stroke-width="1.11" fill="none" opacity="0.32"/><path d="M72.6 789.0 Q76.3 769.9 80.9 750.8" stroke="#2a3062" stroke-width="0.77" fill="none" opacity="0.42"/><path d="M456.9 881.2 Q457.5 879.4 458.3 877.6" stroke="#8384ae" stroke-width="0.62" fill="none" opacity="0.31"/><path d="M458.0 894.2 Q456.0 891.6 458.6 889.0" stroke="#8484ae" stroke-width="0.90" fill="none" opacity="0.52"/><path d="M21.5 790.7 Q17.4 779.9 8.8 769.1" stroke="#2a3062" stroke-width="0.60" fill="none" opacity="0.27"/><path d="M334.0 869.4 Q334.9 856.6 340.5 843.9" stroke="#636592" stroke-width="0.54" fill="none" opacity="0.52"/><path d="M239.6 839.1 Q232.0 821.0 222.2 803.0" stroke="#494d7d" stroke-width="0.57" fill="none" opacity="0.67"/><path d="M488.3 894.4 Q492.6 888.7 490.3 882.9" stroke="#8a8ab4" stroke-width="1.22" fill="none" opacity="0.27"/><path d="M257.1 840.4 Q265.6 828.6 268.2 816.8" stroke="#4e5281" stroke-width="0.72" fill="none" opacity="0.50"/><path d="M160.1 808.0 Q163.6 785.3 169.8 762.5" stroke="#343a6b" stroke-width="0.88" fill="none" opacity="0.56"/><path d="M373.3 875.6 Q368.9 872.8 369.7 870.1" stroke="#6d6f9b" stroke-width="1.24" fill="none" opacity="0.47"/><path d="M330.1 866.2 Q330.9 860.5 324.1 854.8" stroke="#626491" stroke-width="1.04" fill="none" opacity="0.31"/><path d="M360.4 876.7 Q363.4 867.4 364.6 858.1" stroke="#6a6c98" stroke-width="1.29" fill="none" opacity="0.69"/><path d="M206.5 836.2 Q203.4 826.6 202.5 817.0" stroke="#414575" stroke-width="1.08" fill="none" opacity="0.41"/><path d="M178.0 830.7 Q183.5 806.1 183.5 781.6" stroke="#393e6f" stroke-width="0.85" fill="none" opacity="0.54"/><path d="M125.6 799.2 Q130.6 793.1 128.9 786.9" stroke="#2b3163" stroke-width="0.77" fill="none" opacity="0.42"/><path d="M55.9 778.6 Q60.0 759.5 70.7 740.4" stroke="#2a3062" stroke-width="0.73" fill="none" opacity="0.59"/><path d="M112.5 809.1 Q108.4 796.2 109.0 783.3" stroke="#2a3062" stroke-width="0.76" fill="none" opacity="0.44"/><path d="M139.7 814.2 Q142.4 809.6 140.3 805.1" stroke="#2f3466" stroke-width="0.79" fill="none" opacity="0.34"/><path d="M57.4 777.3 Q54.1 752.8 58.5 728.3" stroke="#2a3062" stroke-width="0.91" fill="none" opacity="0.52"/><path d="M161.1 805.2 Q160.8 790.9 153.0 776.7" stroke="#343a6b" stroke-width="0.82" fill="none" opacity="0.67"/><path d="M446.4 888.7 Q444.0 885.5 448.2 882.2" stroke="#8181ac" stroke-width="1.00" fill="none" opacity="0.29"/><path d="M43.1 782.5 Q47.5 775.6 50.5 768.6" stroke="#2a3062" stroke-width="1.31" fill="none" opacity="0.68"/><path d="M389.1 882.5 Q392.3 875.0 392.7 867.4" stroke="#71739f" stroke-width="0.64" fill="none" opacity="0.49"/><path d="M210.0 834.2 Q212.6 818.2 214.1 802.1" stroke="#424676" stroke-width="1.21" fill="none" opacity="0.62"/><path d="M43.0 776.1 Q44.3 771.7 38.2 767.4" stroke="#2a3062" stroke-width="0.78" fill="none" opacity="0.45"/><path d="M237.0 844.6 Q237.5 836.9 240.7 829.1" stroke="#494d7c" stroke-width="1.26" fill="none" opacity="0.61"/><path d="M-4.4 895.1 Q-5.7 889.4 -0.0 883.6" stroke="#2a3062" stroke-width="0.74" fill="none" opacity="0.60"/><path d="M302.2 866.4 Q299.1 856.0 300.7 845.5" stroke="#5a5d8b" stroke-width="0.92" fill="none" opacity="0.37"/><path d="M346.3 862.6 Q345.0 859.5 343.1 856.3" stroke="#666895" stroke-width="1.02" fill="none" opacity="0.25"/><path d="M508.3 901.9 Q507.7 896.1 501.9 890.4" stroke="#8a8ab4" stroke-width="1.38" fill="none" opacity="0.33"/><path d="M388.1 886.5 Q379.2 874.2 376.3 862.0" stroke="#71739f" stroke-width="0.65" fill="none" opacity="0.35"/><path d="M463.0 898.6 Q457.8 892.0 454.9 885.3" stroke="#8585b0" stroke-width="0.72" fill="none" opacity="0.54"/><path d="M369.4 882.4 Q368.0 875.2 367.2 868.0" stroke="#6c6e9a" stroke-width="0.83" fill="none" opacity="0.45"/><path d="M351.3 878.0 Q348.4 872.1 351.1 866.2" stroke="#676996" stroke-width="0.54" fill="none" opacity="0.42"/><path d="M181.8 812.5 Q184.3 806.8 179.6 801.1" stroke="#3a3f70" stroke-width="1.25" fill="none" opacity="0.26"/><path d="M159.7 812.7 Q154.3 802.4 147.5 792.2" stroke="#34396b" stroke-width="1.26" fill="none" opacity="0.42"/><path d="M86.7 784.7 Q85.4 780.6 88.5 776.6" stroke="#2a3062" stroke-width="1.15" fill="none" opacity="0.61"/><path d="M38.4 776.2 Q42.9 764.5 43.7 752.7" stroke="#2a3062" stroke-width="0.77" fill="none" opacity="0.45"/><path d="M179.6 822.3 Q172.9 799.5 161.1 776.8" stroke="#393e6f" stroke-width="1.33" fill="none" opacity="0.52"/><path d="M493.8 902.7 Q493.2 899.2 497.5 895.7" stroke="#8a8ab4" stroke-width="1.22" fill="none" opacity="0.30"/><path d="M152.4 811.8 Q153.0 786.2 158.4 760.6" stroke="#323869" stroke-width="1.31" fill="none" opacity="0.64"/><path d="M260.1 839.2 Q256.7 831.5 254.6 823.9" stroke="#4f5381" stroke-width="1.35" fill="none" opacity="0.52"/><path d="M421.2 873.8 Q420.8 869.0 422.9 864.2" stroke="#7a7ba6" stroke-width="0.70" fill="none" opacity="0.28"/><path d="M21.4 778.2 Q18.0 760.5 13.5 742.9" stroke="#2a3062" stroke-width="0.76" fill="none" opacity="0.26"/><path d="M345.7 868.0 Q341.9 860.3 341.8 852.5" stroke="#666895" stroke-width="0.55" fill="none" opacity="0.38"/><path d="M150.0 803.1 Q145.6 798.6 148.9 794.1" stroke="#313768" stroke-width="1.29" fill="none" opacity="0.41"/><path d="M225.7 840.1 Q226.3 837.5 222.3 834.8" stroke="#464a7a" stroke-width="1.00" fill="none" opacity="0.47"/><path d="M173.8 826.9 Q180.6 810.5 182.2 794.1" stroke="#383d6e" stroke-width="1.30" fill="none" opacity="0.58"/><path d="M345.4 871.0 Q345.6 862.5 345.4 854.0" stroke="#666895" stroke-width="1.24" fill="none" opacity="0.64"/><path d="M22.1 786.5 Q25.7 766.5 22.8 746.6" stroke="#2a3062" stroke-width="0.54" fill="none" opacity="0.46"/><path d="M190.2 837.5 Q187.2 829.4 189.8 821.4" stroke="#3c4171" stroke-width="1.18" fill="none" opacity="0.47"/><path d="M377.4 872.5 Q367.0 862.5 360.9 852.6" stroke="#6e709c" stroke-width="1.16" fill="none" opacity="0.65"/><path d="M399.2 875.2 Q401.5 872.4 400.0 869.7" stroke="#7475a1" stroke-width="0.55" fill="none" opacity="0.67"/><path d="M269.5 841.5 Q262.9 830.3 262.7 819.0" stroke="#515584" stroke-width="1.30" fill="none" opacity="0.67"/><path d="M59.5 786.6 Q57.6 775.7 61.9 764.9" stroke="#2a3062" stroke-width="0.80" fill="none" opacity="0.43"/><path d="M240.8 842.7 Q250.1 830.0 252.4 817.3" stroke="#4a4e7d" stroke-width="1.32" fill="none" opacity="0.62"/><path d="M113.7 794.2 Q115.7 778.4 116.0 762.6" stroke="#2a3062" stroke-width="0.81" fill="none" opacity="0.70"/><path d="M157.4 803.5 Q156.6 798.0 152.1 792.4" stroke="#33396a" stroke-width="1.26" fill="none" opacity="0.27"/><path d="M118.2 795.2 Q125.3 772.5 136.2 749.8" stroke="#2a3062" stroke-width="0.59" fill="none" opacity="0.69"/><path d="M500.2 898.1 Q503.8 890.5 503.2 882.9" stroke="#8a8ab4" stroke-width="0.96" fill="none" opacity="0.37"/><path d="M268.1 856.2 Q265.8 847.4 269.3 838.6" stroke="#515583" stroke-width="1.37" fill="none" opacity="0.35"/><path d="M112.7 811.1 Q126.9 784.8 135.6 758.5" stroke="#2a3062" stroke-width="1.26" fill="none" opacity="0.62"/><path d="M289.7 848.5 Q297.3 832.7 299.5 816.9" stroke="#575a88" stroke-width="0.54" fill="none" opacity="0.28"/><path d="M374.9 876.4 Q380.6 864.9 387.2 853.4" stroke="#6d6f9c" stroke-width="1.11" fill="none" opacity="0.55"/><path d="M355.7 870.4 Q353.2 862.4 344.3 854.4" stroke="#686a97" stroke-width="1.15" fill="none" opacity="0.61"/><path d="M235.4 835.5 Q237.1 824.4 238.0 813.2" stroke="#484c7c" stroke-width="0.60" fill="none" opacity="0.25"/><path d="M201.8 824.8 Q198.2 818.5 196.0 812.1" stroke="#3f4474" stroke-width="1.13" fill="none" opacity="0.66"/><path d="M346.9 860.7 Q349.1 848.0 347.7 835.2" stroke="#666895" stroke-width="1.05" fill="none" opacity="0.41"/><path d="M171.4 809.7 Q160.3 792.7 146.3 775.6" stroke="#373c6d" stroke-width="1.32" fill="none" opacity="0.55"/><path d="M310.2 872.2 Q319.8 852.1 321.6 832.1" stroke="#5c5f8d" stroke-width="0.91" fill="none" opacity="0.26"/><path d="M314.5 869.4 Q314.0 850.4 315.8 831.4" stroke="#5d608e" stroke-width="0.50" fill="none" opacity="0.62"/><path d="M319.8 879.3 Q326.4 866.1 328.7 852.9" stroke="#5f618f" stroke-width="1.39" fill="none" opacity="0.46"/><path d="M461.5 886.1 Q459.8 884.3 460.4 882.4" stroke="#8585af" stroke-width="1.39" fill="none" opacity="0.43"/><path d="M137.9 812.6 Q135.0 806.7 133.7 800.7" stroke="#2e3466" stroke-width="0.61" fill="none" opacity="0.52"/><path d="M214.9 842.9 Q216.7 834.7 223.2 826.6" stroke="#434777" stroke-width="0.98" fill="none" opacity="0.35"/><path d="M2.4 771.7 Q-7.0 746.1 -16.3 720.5" stroke="#2a3062" stroke-width="0.97" fill="none" opacity="0.37"/><path d="M273.1 843.4 Q272.4 834.7 266.6 825.9" stroke="#525684" stroke-width="1.19" fill="none" opacity="0.57"/><path d="M304.3 871.9 Q291.5 858.4 284.6 844.9" stroke="#5b5e8b" stroke-width="1.17" fill="none" opacity="0.63"/><path d="M509.4 900.5 Q510.4 896.8 509.3 893.0" stroke="#8a8ab4" stroke-width="1.04" fill="none" opacity="0.31"/><path d="M498.6 893.0 Q500.1 888.4 503.4 883.8" stroke="#8a8ab4" stroke-width="0.56" fill="none" opacity="0.55"/><path d="M130.0 798.5 Q128.9 786.8 130.7 775.1" stroke="#2c3264" stroke-width="1.10" fill="none" opacity="0.66"/><path d="M510.2 903.3 Q507.7 891.0 499.9 878.6" stroke="#8a8ab4" stroke-width="0.58" fill="none" opacity="0.51"/><path d="M34.3 773.2 Q21.1 748.8 4.4 724.3" stroke="#2a3062" stroke-width="0.97" fill="none" opacity="0.25"/><path d="M407.4 871.4 Q411.0 859.0 414.7 846.5" stroke="#7677a3" stroke-width="0.90" fill="none" opacity="0.26"/><path d="M359.0 863.1 Q363.8 855.4 365.7 847.6" stroke="#696b98" stroke-width="0.60" fill="none" opacity="0.57"/><path d="M359.8 870.2 Q359.1 858.7 359.7 847.1" stroke="#696b98" stroke-width="0.97" fill="none" opacity="0.37"/><path d="M144.3 819.7 Q146.2 807.1 150.1 794.5" stroke="#303667" stroke-width="0.67" fill="none" opacity="0.25"/><path d="M496.0 898.5 Q492.6 884.3 496.2 870.1" stroke="#8a8ab4" stroke-width="0.65" fill="none" opacity="0.27"/><path d="M313.4 868.7 Q304.2 849.1 299.4 829.6" stroke="#5d608e" stroke-width="0.70" fill="none" opacity="0.32"/><path d="M9.9 777.8 Q9.7 763.5 2.3 749.3" stroke="#2a3062" stroke-width="0.78" fill="none" opacity="0.62"/><path d="M271.9 843.9 Q275.0 840.6 272.1 837.4" stroke="#525584" stroke-width="0.55" fill="none" opacity="0.57"/><path d="M115.9 805.3 Q118.2 780.1 124.7 754.8" stroke="#2a3062" stroke-width="0.64" fill="none" opacity="0.69"/><path d="M471.2 899.8 Q465.0 892.9 460.9 886.0" stroke="#8787b1" stroke-width="1.32" fill="none" opacity="0.28"/><path d="M148.6 800.9 Q137.9 775.0 133.9 749.2" stroke="#313768" stroke-width="0.82" fill="none" opacity="0.34"/><path d="M220.3 840.3 Q212.3 827.7 203.6 815.1" stroke="#444978" stroke-width="0.55" fill="none" opacity="0.45"/><path d="M415.1 877.5 Q409.5 866.3 405.5 855.2" stroke="#7879a5" stroke-width="1.21" fill="none" opacity="0.25"/><path d="M283.1 857.6 Q291.5 843.0 296.8 828.3" stroke="#555887" stroke-width="0.70" fill="none" opacity="0.34"/><path d="M245.5 840.4 Q239.7 829.4 230.8 818.5" stroke="#4b4f7e" stroke-width="0.87" fill="none" opacity="0.27"/><path d="M57.7 798.0 Q66.0 773.6 75.9 749.2" stroke="#2a3062" stroke-width="1.39" fill="none" opacity="0.33"/><path d="M372.5 886.9 Q366.7 883.5 366.9 880.1" stroke="#6d6f9b" stroke-width="0.58" fill="none" opacity="0.61"/><path d="M310.2 864.2 Q307.6 859.4 310.9 854.5" stroke="#5c5f8d" stroke-width="0.62" fill="none" opacity="0.52"/><path d="M329.6 876.6 Q318.7 860.9 310.9 845.1" stroke="#616491" stroke-width="0.63" fill="none" opacity="0.47"/><path d="M9.7 786.8 Q15.4 765.9 21.3 745.1" stroke="#2a3062" stroke-width="1.32" fill="none" opacity="0.63"/><path d="M426.1 892.0 Q421.3 887.7 423.6 883.3" stroke="#7b7ca7" stroke-width="1.19" fill="none" opacity="0.46"/><path d="M507.9 888.7 Q514.1 881.9 512.7 875.1" stroke="#8a8ab4" stroke-width="1.18" fill="none" opacity="0.65"/><path d="M475.3 884.7 Q471.1 876.9 464.1 869.1" stroke="#8888b2" stroke-width="1.36" fill="none" opacity="0.48"/><path d="M70.8 792.1 Q66.7 786.7 69.2 781.3" stroke="#2a3062" stroke-width="0.88" fill="none" opacity="0.62"/><path d="M379.5 885.9 Q374.6 878.5 376.9 871.0" stroke="#6f709d" stroke-width="1.21" fill="none" opacity="0.51"/><path d="M207.1 824.3 Q197.4 815.1 193.8 805.9" stroke="#414575" stroke-width="0.57" fill="none" opacity="0.44"/><path d="M66.4 797.3 Q73.4 778.7 79.6 760.1" stroke="#2a3062" stroke-width="0.64" fill="none" opacity="0.37"/><path d="M431.6 887.3 Q428.5 877.4 432.7 867.5" stroke="#7d7da8" stroke-width="0.68" fill="none" opacity="0.44"/><path d="M434.0 896.2 Q426.9 887.6 427.0 879.1" stroke="#7d7ea9" stroke-width="1.00" fill="none" opacity="0.43"/><path d="M479.0 883.5 Q472.5 880.1 473.5 876.7" stroke="#8989b3" stroke-width="1.23" fill="none" opacity="0.64"/><path d="M75.0 779.8 Q68.5 762.4 60.1 745.1" stroke="#2a3062" stroke-width="1.32" fill="none" opacity="0.59"/><path d="M140.6 811.6 Q141.0 800.5 145.4 789.4" stroke="#2f3566" stroke-width="1.28" fill="none" opacity="0.56"/><path d="M458.8 884.6 Q456.8 870.8 458.7 857.0" stroke="#8484af" stroke-width="1.08" fill="none" opacity="0.39"/><path d="M53.9 775.7 Q42.9 757.6 38.2 739.5" stroke="#2a3062" stroke-width="1.20" fill="none" opacity="0.31"/><path d="M387.5 873.3 Q392.7 867.5 392.7 861.6" stroke="#71729e" stroke-width="1.25" fill="none" opacity="0.69"/><path d="M308.9 874.9 Q307.5 860.4 308.9 845.9" stroke="#5c5f8d" stroke-width="0.84" fill="none" opacity="0.51"/><path d="M123.5 806.3 Q125.6 780.2 132.1 754.2" stroke="#2a3062" stroke-width="0.52" fill="none" opacity="0.42"/><path d="M220.7 846.0 Q220.6 833.0 218.7 820.0" stroke="#444978" stroke-width="1.00" fill="none" opacity="0.56"/><path d="M285.0 858.6 Q280.8 852.5 277.5 846.4" stroke="#565987" stroke-width="1.30" fill="none" opacity="0.68"/><path d="M147.5 813.3 Q142.2 796.1 142.1 779.0" stroke="#313668" stroke-width="1.21" fill="none" opacity="0.29"/><path d="M113.5 795.0 Q106.1 786.9 105.3 778.8" stroke="#2a3062" stroke-width="0.97" fill="none" opacity="0.33"/><path d="M329.1 871.7 Q328.3 857.3 325.6 842.9" stroke="#616491" stroke-width="0.77" fill="none" opacity="0.46"/><path d="M353.1 866.3 Q356.9 855.3 353.1 844.3" stroke="#686a97" stroke-width="1.05" fill="none" opacity="0.50"/><path d="M394.5 874.8 Q395.2 868.4 392.1 862.0" stroke="#7374a0" stroke-width="1.15" fill="none" opacity="0.33"/><path d="M491.1 903.5 Q495.9 896.4 498.7 889.3" stroke="#8a8ab4" stroke-width="0.85" fill="none" opacity="0.29"/><path d="M4.0 779.0 Q7.2 756.4 5.8 733.8" stroke="#2a3062" stroke-width="0.89" fill="none" opacity="0.58"/><path d="M309.1 867.7 Q310.8 854.7 311.7 841.7" stroke="#5c5f8d" stroke-width="0.58" fill="none" opacity="0.55"/><path d="M360.9 872.7 Q356.5 858.8 357.5 844.9" stroke="#6a6c98" stroke-width="0.96" fill="none" opacity="0.41"/><path d="M81.0 802.2 Q79.7 793.9 83.6 785.6" stroke="#2a3062" stroke-width="0.97" fill="none" opacity="0.70"/><path d="M41.2 792.8 Q46.2 789.4 44.7 785.9" stroke="#2a3062" stroke-width="0.90" fill="none" opacity="0.54"/><path d="M234.1 834.2 Q235.5 824.9 230.9 815.6" stroke="#484c7b" stroke-width="0.60" fill="none" opacity="0.49"/><path d="M240.2 845.3 Q239.1 827.6 240.8 809.9" stroke="#4a4e7d" stroke-width="1.36" fill="none" opacity="0.52"/><path d="M136.0 808.5 Q121.3 787.3 104.2 766.1" stroke="#2e3465" stroke-width="0.94" fill="none" opacity="0.38"/><path d="M77.9 785.7 Q75.8 770.7 72.0 755.8" stroke="#2a3062" stroke-width="0.74" fill="none" opacity="0.53"/><path d="M241.2 851.4 Q237.8 835.0 226.7 818.6" stroke="#4a4e7d" stroke-width="0.99" fill="none" opacity="0.40"/><path d="M127.4 809.4 Q127.3 794.3 131.0 779.2" stroke="#2b3163" stroke-width="1.27" fill="none" opacity="0.37"/><path d="M447.5 885.6 Q447.6 878.7 447.4 871.9" stroke="#8181ac" stroke-width="0.99" fill="none" opacity="0.50"/><path d="M489.0 897.5 Q486.5 894.9 491.8 892.3" stroke="#8a8ab4" stroke-width="0.55" fill="none" opacity="0.62"/><path d="M138.3 796.9 Q140.2 788.6 136.5 780.2" stroke="#2e3466" stroke-width="0.52" fill="none" opacity="0.32"/><path d="M1.6 765.6 Q4.0 753.7 -1.0 741.7" stroke="#2a3062" stroke-width="1.08" fill="none" opacity="0.63"/><path d="M302.2 872.3 Q295.0 858.1 289.8 844.0" stroke="#5a5d8b" stroke-width="0.93" fill="none" opacity="0.30"/><path d="M475.6 889.8 Q477.5 885.5 474.6 881.2" stroke="#8888b2" stroke-width="0.75" fill="none" opacity="0.51"/><path d="M42.6 778.3 Q43.3 769.7 41.0 761.1" stroke="#2a3062" stroke-width="0.70" fill="none" opacity="0.56"/><path d="M299.7 867.7 Q297.4 847.2 287.0 826.6" stroke="#595c8a" stroke-width="0.91" fill="none" opacity="0.48"/><path d="M87.4 784.3 Q72.4 767.0 64.8 749.6" stroke="#2a3062" stroke-width="0.58" fill="none" opacity="0.49"/><path d="M96.9 790.8 Q90.2 767.2 89.1 743.7" stroke="#2a3062" stroke-width="1.11" fill="none" opacity="0.70"/><path d="M318.5 865.9 Q323.0 853.2 322.1 840.4" stroke="#5e618f" stroke-width="1.21" fill="none" opacity="0.36"/><path d="M400.6 871.4 Q397.8 868.0 400.0 864.6" stroke="#7476a1" stroke-width="1.01" fill="none" opacity="0.38"/><path d="M485.6 889.7 Q490.3 878.7 495.7 867.8" stroke="#8a8ab4" stroke-width="1.19" fill="none" opacity="0.47"/><path d="M202.7 822.2 Q210.2 808.3 214.6 794.4" stroke="#404474" stroke-width="0.79" fill="none" opacity="0.49"/><path d="M180.4 820.6 Q164.9 802.1 149.7 783.6" stroke="#3a3f6f" stroke-width="0.96" fill="none" opacity="0.32"/><path d="M375.7 870.9 Q373.8 864.6 370.3 858.3" stroke="#6e6f9c" stroke-width="0.89" fill="none" opacity="0.56"/><path d="M216.1 842.8 Q208.9 831.8 201.8 820.8" stroke="#434877" stroke-width="0.73" fill="none" opacity="0.38"/><path d="M488.0 891.1 Q483.6 881.4 477.1 871.7" stroke="#8a8ab4" stroke-width="0.61" fill="none" opacity="0.35"/><path d="M61.3 776.9 Q72.4 752.2 85.6 727.4" stroke="#2a3062" stroke-width="0.51" fill="none" opacity="0.58"/><path d="M339.7 860.1 Q330.9 850.8 326.4 841.4" stroke="#646694" stroke-width="1.20" fill="none" opacity="0.60"/><path d="M116.7 801.2 Q117.5 776.5 117.9 751.7" stroke="#2a3062" stroke-width="0.67" fill="none" opacity="0.28"/><path d="M92.7 796.1 Q90.9 776.9 87.0 757.7" stroke="#2a3062" stroke-width="1.01" fill="none" opacity="0.54"/><path d="M208.7 841.6 Q217.1 829.7 217.6 817.7" stroke="#414676" stroke-width="1.25" fill="none" opacity="0.60"/><path d="M353.8 874.6 Q352.4 870.4 348.4 866.3" stroke="#686a97" stroke-width="0.72" fill="none" opacity="0.53"/><path d="M280.7 858.6 Q274.8 848.7 272.0 838.8" stroke="#545886" stroke-width="1.13" fill="none" opacity="0.65"/><path d="M160.8 811.8 Q159.0 796.5 155.1 781.3" stroke="#343a6b" stroke-width="1.18" fill="none" opacity="0.60"/><path d="M415.7 888.7 Q413.0 874.9 411.2 861.0" stroke="#7879a5" stroke-width="1.09" fill="none" opacity="0.39"/><path d="M426.3 882.7 Q424.5 873.9 424.9 865.1" stroke="#7b7ca7" stroke-width="0.51" fill="none" opacity="0.38"/><path d="M242.6 855.6 Q248.4 850.7 246.6 845.8" stroke="#4a4e7d" stroke-width="1.21" fill="none" opacity="0.38"/><path d="M5.0 786.1 Q6.6 780.9 1.3 775.7" stroke="#2a3062" stroke-width="1.11" fill="none" opacity="0.62"/><path d="M428.5 877.2 Q423.0 870.4 419.5 863.6" stroke="#7c7da8" stroke-width="0.95" fill="none" opacity="0.62"/><path d="M145.4 814.7 Q139.0 807.8 139.7 801.0" stroke="#303667" stroke-width="1.02" fill="none" opacity="0.51"/><path d="M365.7 873.3 Q368.6 859.9 370.3 846.5" stroke="#6b6d99" stroke-width="1.29" fill="none" opacity="0.33"/><path d="M146.9 812.5 Q156.8 794.9 163.8 777.4" stroke="#313668" stroke-width="0.54" fill="none" opacity="0.67"/><path d="M238.0 836.3 Q241.8 819.2 239.9 802.2" stroke="#494d7c" stroke-width="1.00" fill="none" opacity="0.36"/><path d="M239.6 843.0 Q236.8 833.7 239.6 824.3" stroke="#494d7d" stroke-width="0.73" fill="none" opacity="0.30"/><path d="M9.1 778.4 Q7.3 755.9 -0.9 733.3" stroke="#2a3062" stroke-width="1.05" fill="none" opacity="0.55"/><path d="M143.8 819.7 Q145.8 807.5 151.8 795.2" stroke="#303567" stroke-width="1.36" fill="none" opacity="0.56"/><path d="M87.8 799.9 Q85.0 792.3 84.1 784.7" stroke="#2a3062" stroke-width="0.80" fill="none" opacity="0.41"/><path d="M78.5 789.9 Q78.9 783.9 81.6 777.9" stroke="#2a3062" stroke-width="1.14" fill="none" opacity="0.44"/><path d="M501.8 902.2 Q508.3 892.0 508.3 881.8" stroke="#8a8ab4" stroke-width="1.34" fill="none" opacity="0.44"/><path d="M303.3 852.4 Q301.4 843.3 297.5 834.1" stroke="#5a5d8b" stroke-width="0.51" fill="none" opacity="0.59"/><path d="M33.7 780.9 Q39.8 765.2 43.8 749.5" stroke="#2a3062" stroke-width="0.63" fill="none" opacity="0.55"/><path d="M117.3 804.0 Q123.2 790.8 129.9 777.6" stroke="#2a3062" stroke-width="0.74" fill="none" opacity="0.39"/><path d="M492.9 888.5 Q494.0 883.6 492.4 878.8" stroke="#8a8ab4" stroke-width="1.35" fill="none" opacity="0.29"/><path d="M166.3 823.6 Q169.8 806.9 170.6 790.3" stroke="#363b6c" stroke-width="0.58" fill="none" opacity="0.27"/><path d="M87.2 789.5 Q81.1 781.5 81.2 773.5" stroke="#2a3062" stroke-width="0.52" fill="none" opacity="0.49"/><path d="M389.1 870.8 Q386.2 867.9 390.1 864.9" stroke="#71739f" stroke-width="0.63" fill="none" opacity="0.47"/><path d="M149.5 819.0 Q147.3 802.0 147.1 785.0" stroke="#313768" stroke-width="0.52" fill="none" opacity="0.62"/><path d="M197.5 837.2 Q196.7 830.8 195.2 824.4" stroke="#3e4373" stroke-width="0.64" fill="none" opacity="0.28"/><path d="M481.4 901.4 Q482.6 887.0 480.1 872.6" stroke="#8a8ab4" stroke-width="1.04" fill="none" opacity="0.46"/><path d="M84.3 797.0 Q82.4 781.7 87.9 766.4" stroke="#2a3062" stroke-width="0.76" fill="none" opacity="0.30"/><path d="M391.7 878.9 Q393.2 873.7 394.3 868.4" stroke="#72739f" stroke-width="0.76" fill="none" opacity="0.43"/><path d="M-4.0 883.5 Q1.1 879.2 0.1 875.0" stroke="#2a3062" stroke-width="0.99" fill="none" opacity="0.67"/><path d="M275.5 858.9 Q275.6 854.2 273.9 849.6" stroke="#535685" stroke-width="0.87" fill="none" opacity="0.54"/><path d="M173.5 824.5 Q171.9 815.4 171.5 806.2" stroke="#383d6e" stroke-width="0.97" fill="none" opacity="0.27"/><path d="M121.1 807.2 Q124.0 799.2 119.0 791.1" stroke="#2a3062" stroke-width="1.05" fill="none" opacity="0.58"/><path d="M395.8 891.3 Q396.4 884.8 392.8 878.3" stroke="#7374a0" stroke-width="0.52" fill="none" opacity="0.46"/><path d="M136.2 808.8 Q143.7 787.1 151.2 765.4" stroke="#2e3465" stroke-width="1.12" fill="none" opacity="0.29"/><path d="M338.0 881.1 Q337.0 871.6 335.9 862.1" stroke="#646693" stroke-width="0.87" fill="none" opacity="0.33"/><path d="M97.6 803.7 Q88.0 790.0 76.6 776.3" stroke="#2a3062" stroke-width="1.25" fill="none" opacity="0.54"/><path d="M88.7 805.4 Q87.6 796.9 87.2 788.5" stroke="#2a3062" stroke-width="0.65" fill="none" opacity="0.37"/><path d="M91.9 787.3 Q93.6 782.5 92.6 777.7" stroke="#2a3062" stroke-width="0.73" fill="none" opacity="0.68"/><path d="M215.1 834.6 Q216.4 814.5 218.3 794.3" stroke="#434777" stroke-width="1.17" fill="none" opacity="0.58"/><path d="M155.3 803.9 Q160.6 781.4 164.3 758.9" stroke="#33386a" stroke-width="0.61" fill="none" opacity="0.58"/><path d="M86.2 801.2 Q84.1 781.1 88.7 761.1" stroke="#2a3062" stroke-width="0.83" fill="none" opacity="0.58"/><path d="M52.8 775.5 Q58.5 761.6 62.1 747.8" stroke="#2a3062" stroke-width="0.71" fill="none" opacity="0.29"/><path d="M430.2 893.4 Q427.5 883.8 420.9 874.2" stroke="#7c7da8" stroke-width="0.51" fill="none" opacity="0.33"/><path d="M161.4 827.4 Q161.0 823.3 156.9 819.2" stroke="#353a6b" stroke-width="1.19" fill="none" opacity="0.37"/><path d="M34.7 791.4 Q46.3 764.4 56.9 737.4" stroke="#2a3062" stroke-width="0.58" fill="none" opacity="0.58"/><path d="M332.7 877.8 Q335.4 866.5 330.5 855.2" stroke="#626592" stroke-width="0.92" fill="none" opacity="0.45"/><path d="M326.4 875.8 Q330.3 863.2 337.8 850.7" stroke="#616391" stroke-width="1.31" fill="none" opacity="0.65"/><path d="M175.0 810.0 Q179.5 790.5 176.7 771.0" stroke="#383d6e" stroke-width="1.00" fill="none" opacity="0.58"/><path d="M389.9 871.2 Q385.9 861.1 386.4 851.1" stroke="#71739f" stroke-width="0.75" fill="none" opacity="0.41"/><path d="M377.1 878.3 Q375.9 873.6 370.1 868.9" stroke="#6e709c" stroke-width="1.18" fill="none" opacity="0.63"/><path d="M403.9 870.9 Q401.5 865.6 402.3 860.3" stroke="#7576a2" stroke-width="1.24" fill="none" opacity="0.34"/><path d="M2.6 775.3 Q0.3 771.3 -3.7 767.4" stroke="#2a3062" stroke-width="1.04" fill="none" opacity="0.49"/><path d="M31.6 783.8 Q23.6 767.3 20.1 750.8" stroke="#2a3062" stroke-width="0.64" fill="none" opacity="0.47"/><path d="M185.8 827.2 Q178.9 807.2 170.3 787.2" stroke="#3b4070" stroke-width="0.73" fill="none" opacity="0.59"/><path d="M101.1 799.7 Q107.3 777.4 113.0 755.1" stroke="#2a3062" stroke-width="1.32" fill="none" opacity="0.69"/><path d="M407.1 878.5 Q404.4 873.4 407.6 868.2" stroke="#7677a3" stroke-width="0.66" fill="none" opacity="0.29"/><path d="M333.5 867.3 Q337.3 854.4 340.6 841.4" stroke="#626592" stroke-width="0.81" fill="none" opacity="0.39"/><path d="M22.2 771.1 Q9.3 746.0 4.3 720.9" stroke="#2a3062" stroke-width="1.38" fill="none" opacity="0.42"/><path d="M397.8 879.3 Q389.7 867.8 381.9 856.2" stroke="#7475a1" stroke-width="1.08" fill="none" opacity="0.26"/><path d="M472.0 885.9 Q462.8 877.4 460.3 868.9" stroke="#8788b2" stroke-width="0.58" fill="none" opacity="0.60"/><path d="M484.9 901.2 Q482.4 894.1 475.5 887.1" stroke="#8a8ab4" stroke-width="0.96" fill="none" opacity="0.60"/><path d="M324.8 870.2 Q318.5 865.1 318.8 860.0" stroke="#606390" stroke-width="0.89" fill="none" opacity="0.38"/><path d="M491.2 881.1 Q482.0 871.4 479.2 861.8" stroke="#8a8ab4" stroke-width="1.33" fill="none" opacity="0.35"/><path d="M304.4 865.1 Q298.7 855.3 298.7 845.4" stroke="#5b5e8c" stroke-width="1.13" fill="none" opacity="0.42"/><path d="M307.4 871.6 Q305.5 867.6 305.9 863.5" stroke="#5b5e8c" stroke-width="1.34" fill="none" opacity="0.53"/><path d="M97.4 795.6 Q93.7 791.5 96.8 787.4" stroke="#2a3062" stroke-width="0.62" fill="none" opacity="0.48"/><path d="M274.8 847.4 Q272.0 834.4 266.0 821.4" stroke="#535685" stroke-width="0.55" fill="none" opacity="0.63"/><path d="M228.4 832.6 Q225.6 824.4 229.3 816.2" stroke="#464b7a" stroke-width="1.32" fill="none" opacity="0.35"/><path d="M208.5 823.1 Q211.0 812.9 218.5 802.7" stroke="#414676" stroke-width="0.66" fill="none" opacity="0.50"/><path d="M327.8 860.5 Q325.9 853.7 328.1 846.9" stroke="#616391" stroke-width="0.52" fill="none" opacity="0.56"/><path d="M446.6 894.3 Q439.7 883.0 435.8 871.6" stroke="#8181ac" stroke-width="1.04" fill="none" opacity="0.53"/><path d="M320.6 869.1 Q314.4 862.6 314.8 856.1" stroke="#5f628f" stroke-width="0.55" fill="none" opacity="0.51"/><path d="M39.9 793.0 Q29.1 768.0 10.9 742.9" stroke="#2a3062" stroke-width="1.06" fill="none" opacity="0.25"/><path d="M194.3 824.9 Q185.4 815.2 180.5 805.6" stroke="#3d4272" stroke-width="0.52" fill="none" opacity="0.45"/><path d="M245.5 839.1 Q252.6 820.3 259.8 801.4" stroke="#4b4f7e" stroke-width="1.22" fill="none" opacity="0.41"/><path d="M386.5 885.2 Q386.4 879.1 388.8 873.0" stroke="#71729e" stroke-width="0.66" fill="none" opacity="0.44"/><path d="M54.1 792.1 Q55.5 781.8 52.0 771.4" stroke="#2a3062" stroke-width="1.04" fill="none" opacity="0.66"/><path d="M372.4 880.9 Q377.2 869.9 375.3 858.8" stroke="#6d6f9b" stroke-width="1.04" fill="none" opacity="0.55"/><path d="M281.0 856.9 Q271.7 837.6 267.3 818.3" stroke="#545886" stroke-width="0.95" fill="none" opacity="0.39"/><path d="M366.3 878.6 Q366.5 876.9 364.8 875.3" stroke="#6b6d9a" stroke-width="0.86" fill="none" opacity="0.56"/><path d="M239.1 834.4 Q243.0 820.3 253.3 806.3" stroke="#494d7d" stroke-width="1.05" fill="none" opacity="0.53"/><path d="M313.6 865.9 Q322.3 855.1 325.1 844.2" stroke="#5d608e" stroke-width="0.89" fill="none" opacity="0.62"/><path d="M342.1 878.7 Q331.5 867.0 325.5 855.2" stroke="#656794" stroke-width="0.71" fill="none" opacity="0.62"/><path d="M475.5 883.6 Q480.1 876.2 481.2 868.8" stroke="#8888b2" stroke-width="1.03" fill="none" opacity="0.65"/><path d="M475.3 880.3 Q471.5 867.2 465.8 854.1" stroke="#8888b2" stroke-width="1.18" fill="none" opacity="0.38"/><path d="M154.3 823.6 Q162.2 801.8 176.6 780.0" stroke="#333869" stroke-width="1.06" fill="none" opacity="0.58"/><path d="M492.3 897.4 Q486.8 893.0 486.5 888.5" stroke="#8a8ab4" stroke-width="0.73" fill="none" opacity="0.51"/><path d="M162.8 808.5 Q166.1 802.5 164.3 796.6" stroke="#353a6b" stroke-width="0.61" fill="none" opacity="0.48"/><path d="M504.7 890.1 Q503.2 881.9 509.3 873.6" stroke="#8a8ab4" stroke-width="1.29" fill="none" opacity="0.60"/><path d="M377.8 873.4 Q377.7 866.1 384.5 858.9" stroke="#6e709c" stroke-width="0.57" fill="none" opacity="0.54"/><path d="M490.3 883.4 Q492.0 879.3 489.1 875.1" stroke="#8a8ab4" stroke-width="1.01" fill="none" opacity="0.55"/><path d="M22.0 773.2 Q21.9 754.3 28.4 735.5" stroke="#2a3062" stroke-width="0.58" fill="none" opacity="0.39"/><path d="M210.6 830.0 Q208.3 825.2 203.8 820.4" stroke="#424676" stroke-width="1.36" fill="none" opacity="0.54"/><path d="M473.0 880.9 Q473.3 871.7 468.0 862.5" stroke="#8888b2" stroke-width="1.04" fill="none" opacity="0.53"/><path d="M470.5 900.6 Q466.6 897.1 469.3 893.6" stroke="#8787b1" stroke-width="1.00" fill="none" opacity="0.35"/><path d="M358.2 870.6 Q355.9 868.8 359.6 867.0" stroke="#696b98" stroke-width="0.74" fill="none" opacity="0.48"/><path d="M24.7 787.5 Q13.7 768.4 0.8 749.2" stroke="#2a3062" stroke-width="0.62" fill="none" opacity="0.49"/><path d="M43.5 779.5 Q44.1 763.9 42.1 748.4" stroke="#2a3062" stroke-width="1.33" fill="none" opacity="0.40"/><path d="M177.0 815.1 Q168.8 792.7 165.2 770.4" stroke="#393e6e" stroke-width="0.67" fill="none" opacity="0.44"/><path d="M429.9 883.6 Q429.0 871.7 426.7 859.7" stroke="#7c7da8" stroke-width="0.73" fill="none" opacity="0.43"/><path d="M371.7 866.2 Q367.1 859.3 365.9 852.3" stroke="#6d6e9b" stroke-width="0.80" fill="none" opacity="0.34"/><path d="M294.7 849.2 Q289.5 842.5 289.3 835.8" stroke="#585b89" stroke-width="1.25" fill="none" opacity="0.56"/><path d="M456.6 879.3 Q455.4 875.3 454.0 871.4" stroke="#8384ae" stroke-width="1.25" fill="none" opacity="0.63"/><path d="M442.2 874.9 Q441.0 872.8 440.9 870.8" stroke="#7f80ab" stroke-width="0.51" fill="none" opacity="0.41"/><path d="M61.5 797.3 Q56.0 788.5 55.7 779.7" stroke="#2a3062" stroke-width="1.26" fill="none" opacity="0.30"/><path d="M223.6 832.0 Q228.8 825.5 230.5 819.0" stroke="#454979" stroke-width="1.16" fill="none" opacity="0.41"/><path d="M503.3 904.4 Q495.6 895.5 495.1 886.6" stroke="#8a8ab4" stroke-width="0.99" fill="none" opacity="0.47"/><path d="M443.6 898.6 Q442.7 887.5 434.0 876.4" stroke="#8080ab" stroke-width="1.05" fill="none" opacity="0.27"/><path d="M103.1 808.9 Q109.0 784.7 112.3 760.5" stroke="#2a3062" stroke-width="0.52" fill="none" opacity="0.67"/><path d="M149.9 818.9 Q148.1 801.1 145.8 783.3" stroke="#313768" stroke-width="1.33" fill="none" opacity="0.63"/><path d="M200.1 838.8 Q197.0 833.0 196.8 827.2" stroke="#3f4474" stroke-width="0.54" fill="none" opacity="0.43"/><path d="M-3.9 905.2 Q-10.5 880.2 -10.2 855.2" stroke="#2a3062" stroke-width="0.74" fill="none" opacity="0.60"/><path d="M147.7 801.8 Q144.6 786.9 147.5 771.9" stroke="#313668" stroke-width="0.84" fill="none" opacity="0.50"/><path d="M382.3 875.7 Q378.8 862.5 371.3 849.3" stroke="#6f719d" stroke-width="0.57" fill="none" opacity="0.66"/><path d="M278.4 847.5 Q281.8 830.6 291.1 813.6" stroke="#545786" stroke-width="1.29" fill="none" opacity="0.68"/><path d="M180.0 830.1 Q178.6 807.4 179.1 784.8" stroke="#393e6f" stroke-width="0.78" fill="none" opacity="0.62"/><path d="M402.0 891.8 Q403.6 889.1 401.9 886.5" stroke="#7576a2" stroke-width="0.70" fill="none" opacity="0.26"/><path d="M459.6 895.1 Q456.0 884.8 453.3 874.5" stroke="#8484af" stroke-width="1.23" fill="none" opacity="0.29"/><path d="M370.8 881.0 Q375.1 874.1 377.4 867.2" stroke="#6c6e9b" stroke-width="1.30" fill="none" opacity="0.34"/><path d="M207.2 827.9 Q213.6 816.0 212.1 804.1" stroke="#414575" stroke-width="1.32" fill="none" opacity="0.63"/><path d="M502.3 898.7 Q495.4 889.5 489.9 880.3" stroke="#8a8ab4" stroke-width="0.94" fill="none" opacity="0.30"/><path d="M463.8 885.8 Q461.3 881.8 458.3 877.8" stroke="#8585b0" stroke-width="0.80" fill="none" opacity="0.68"/><path d="M324.8 866.9 Q323.0 862.4 318.1 857.8" stroke="#606390" stroke-width="1.05" fill="none" opacity="0.47"/><path d="M258.2 847.2 Q244.4 831.2 234.8 815.3" stroke="#4e5281" stroke-width="1.21" fill="none" opacity="0.39"/><path d="M167.5 817.0 Q166.7 805.8 172.4 794.5" stroke="#363b6c" stroke-width="1.00" fill="none" opacity="0.57"/><path d="M173.6 826.3 Q171.0 813.3 174.8 800.2" stroke="#383d6e" stroke-width="0.79" fill="none" opacity="0.50"/><path d="M312.9 864.7 Q315.7 861.3 312.6 857.9" stroke="#5d608d" stroke-width="0.74" fill="none" opacity="0.34"/><path d="M317.9 860.6 Q316.2 856.9 312.6 853.1" stroke="#5e618f" stroke-width="1.29" fill="none" opacity="0.60"/><path d="M301.6 871.2 Q293.8 853.8 287.8 836.4" stroke="#5a5d8b" stroke-width="1.38" fill="none" opacity="0.67"/><path d="M328.2 872.3 Q321.8 864.7 318.0 857.1" stroke="#616491" stroke-width="0.71" fill="none" opacity="0.53"/><path d="M335.8 873.5 Q324.9 863.3 318.7 853.2" stroke="#636593" stroke-width="0.59" fill="none" opacity="0.42"/><path d="M470.1 888.8 Q463.5 878.3 459.1 867.7" stroke="#8787b1" stroke-width="1.22" fill="none" opacity="0.38"/><path d="M374.8 879.1 Q367.4 871.2 362.3 863.2" stroke="#6d6f9c" stroke-width="1.39" fill="none" opacity="0.42"/><path d="M139.8 820.7 Q142.3 801.7 145.0 782.6" stroke="#2f3466" stroke-width="1.06" fill="none" opacity="0.43"/><path d="M137.9 803.0 Q135.9 793.4 140.5 783.8" stroke="#2e3466" stroke-width="0.61" fill="none" opacity="0.48"/><path d="M509.7 900.7 Q509.3 890.7 513.6 880.6" stroke="#8a8ab4" stroke-width="0.96" fill="none" opacity="0.26"/><path d="M265.4 840.3 Q261.6 836.1 260.3 832.0" stroke="#505483" stroke-width="0.93" fill="none" opacity="0.35"/><path d="M35.3 774.0 Q51.9 748.6 61.9 723.1" stroke="#2a3062" stroke-width="0.62" fill="none" opacity="0.34"/><path d="M452.0 875.9 Q456.0 872.3 452.6 868.6" stroke="#8283ad" stroke-width="1.33" fill="none" opacity="0.63"/><path d="M160.2 821.6 Q174.4 795.3 181.2 769.0" stroke="#343a6b" stroke-width="1.19" fill="none" opacity="0.60"/><path d="M360.0 872.5 Q364.2 864.2 367.3 856.0" stroke="#6a6c98" stroke-width="0.52" fill="none" opacity="0.45"/><path d="M447.9 892.1 Q453.2 884.9 454.4 877.7" stroke="#8181ac" stroke-width="0.70" fill="none" opacity="0.57"/><path d="M447.3 875.2 Q447.6 861.8 442.4 848.4" stroke="#8181ac" stroke-width="0.51" fill="none" opacity="0.39"/><path d="M153.0 806.7 Q159.5 786.3 163.6 766.0" stroke="#323869" stroke-width="1.32" fill="none" opacity="0.30"/><path d="M144.1 807.9 Q152.6 783.8 153.2 759.6" stroke="#303667" stroke-width="1.29" fill="none" opacity="0.49"/><path d="M379.5 885.1 Q383.3 876.8 381.5 868.5" stroke="#6f709d" stroke-width="1.25" fill="none" opacity="0.32"/><path d="M10.6 783.1 Q1.9 760.7 -12.3 738.3" stroke="#2a3062" stroke-width="1.18" fill="none" opacity="0.32"/><path d="M75.6 795.4 Q69.1 777.8 56.0 760.2" stroke="#2a3062" stroke-width="0.69" fill="none" opacity="0.63"/><path d="M486.7 882.3 Q489.6 871.7 485.9 861.1" stroke="#8a8ab4" stroke-width="0.90" fill="none" opacity="0.44"/><path d="M116.2 809.2 Q117.2 798.0 125.6 786.8" stroke="#2a3062" stroke-width="1.30" fill="none" opacity="0.26"/><path d="M371.2 886.9 Q370.6 881.1 371.3 875.2" stroke="#6c6e9b" stroke-width="0.56" fill="none" opacity="0.63"/><path d="M251.7 854.7 Q247.9 851.7 248.4 848.8" stroke="#4d507f" stroke-width="1.23" fill="none" opacity="0.26"/><path d="M6.6 774.4 Q13.8 761.2 15.3 748.0" stroke="#2a3062" stroke-width="0.72" fill="none" opacity="0.58"/><path d="M180.8 829.8 Q168.4 812.6 156.5 795.4" stroke="#3a3f6f" stroke-width="0.88" fill="none" opacity="0.46"/><path d="M283.8 861.5 Q285.6 851.3 282.2 841.0" stroke="#555887" stroke-width="1.11" fill="none" opacity="0.34"/><path d="M66.7 784.1 Q63.0 756.1 53.3 728.2" stroke="#2a3062" stroke-width="1.37" fill="none" opacity="0.56"/><path d="M186.8 831.4 Q194.1 816.1 201.3 800.8" stroke="#3b4071" stroke-width="1.07" fill="none" opacity="0.56"/><path d="M322.5 860.5 Q321.5 847.3 317.6 834.1" stroke="#606290" stroke-width="1.20" fill="none" opacity="0.34"/><path d="M187.3 819.9 Q183.7 791.1 180.8 762.3" stroke="#3b4071" stroke-width="1.37" fill="none" opacity="0.60"/><path d="M441.7 886.5 Q437.5 883.2 440.0 879.9" stroke="#7f80ab" stroke-width="0.86" fill="none" opacity="0.45"/><path d="M244.4 856.7 Q235.7 845.5 232.1 834.3" stroke="#4b4f7e" stroke-width="1.11" fill="none" opacity="0.48"/><path d="M208.0 833.0 Q209.9 822.6 210.4 812.2" stroke="#414676" stroke-width="0.54" fill="none" opacity="0.47"/><path d="M125.1 805.4 Q132.1 789.9 131.8 774.3" stroke="#2b3163" stroke-width="1.17" fill="none" opacity="0.53"/><path d="M258.9 840.3 Q250.6 825.5 244.2 810.8" stroke="#4f5281" stroke-width="1.03" fill="none" opacity="0.37"/><path d="M443.9 887.8 Q434.8 876.8 426.4 865.8" stroke="#8080ab" stroke-width="0.79" fill="none" opacity="0.51"/><path d="M332.0 872.0 Q328.7 858.5 327.4 845.1" stroke="#626592" stroke-width="1.17" fill="none" opacity="0.50"/><path d="M134.8 817.1 Q129.6 809.1 123.7 801.2" stroke="#2d3365" stroke-width="1.32" fill="none" opacity="0.63"/><path d="M419.5 886.6 Q414.0 878.8 413.8 871.1" stroke="#797aa6" stroke-width="0.90" fill="none" opacity="0.62"/><path d="M283.1 868.3 Q283.0 850.5 281.4 832.7" stroke="#555887" stroke-width="0.88" fill="none" opacity="0.66"/><path d="M428.1 877.2 Q428.4 864.1 431.0 851.0" stroke="#7c7da8" stroke-width="1.17" fill="none" opacity="0.44"/><path d="M355.8 873.7 Q362.7 864.8 363.4 855.8" stroke="#686a97" stroke-width="0.93" fill="none" opacity="0.42"/><path d="M366.8 879.4 Q364.8 876.4 366.3 873.4" stroke="#6b6d9a" stroke-width="1.08" fill="none" opacity="0.33"/><path d="M149.9 806.4 Q152.6 795.3 149.5 784.2" stroke="#313768" stroke-width="1.08" fill="none" opacity="0.54"/><path d="M391.0 876.7 Q389.3 869.5 392.2 862.4" stroke="#72739f" stroke-width="1.18" fill="none" opacity="0.66"/><path d="M453.0 877.2 Q444.5 865.1 441.9 853.0" stroke="#8283ad" stroke-width="1.06" fill="none" opacity="0.41"/><path d="M88.3 797.1 Q87.3 779.3 86.3 761.5" stroke="#2a3062" stroke-width="1.06" fill="none" opacity="0.60"/><path d="M369.8 880.8 Q369.3 868.7 366.5 856.6" stroke="#6c6e9a" stroke-width="0.60" fill="none" opacity="0.29"/><path d="M230.4 845.5 Q231.8 839.0 236.6 832.6" stroke="#474b7b" stroke-width="0.94" fill="none" opacity="0.46"/><path d="M499.8 884.6 Q499.0 879.6 500.4 874.6" stroke="#8a8ab4" stroke-width="0.81" fill="none" opacity="0.31"/><path d="M471.9 888.4 Q471.8 880.0 464.7 871.7" stroke="#8787b2" stroke-width="0.60" fill="none" opacity="0.56"/><path d="M29.2 782.6 Q33.9 771.5 39.7 760.4" stroke="#2a3062" stroke-width="1.26" fill="none" opacity="0.26"/><path d="M117.7 812.9 Q107.6 802.2 101.3 791.6" stroke="#2a3062" stroke-width="0.83" fill="none" opacity="0.49"/><path d="M193.5 823.2 Q188.7 807.2 189.1 791.1" stroke="#3d4272" stroke-width="0.97" fill="none" opacity="0.51"/><path d="M293.2 865.5 Q291.9 855.4 283.6 845.2" stroke="#585b89" stroke-width="0.61" fill="none" opacity="0.39"/><path d="M211.8 832.4 Q212.4 826.1 216.2 819.8" stroke="#424676" stroke-width="0.99" fill="none" opacity="0.52"/><path d="M62.9 787.0 Q64.4 779.8 62.2 772.6" stroke="#2a3062" stroke-width="1.27" fill="none" opacity="0.67"/><path d="M53.9 785.8 Q52.2 765.2 43.4 744.6" stroke="#2a3062" stroke-width="0.95" fill="none" opacity="0.64"/><path d="M29.9 779.3 Q36.5 758.3 43.1 737.3" stroke="#2a3062" stroke-width="1.27" fill="none" opacity="0.59"/><path d="M209.9 838.8 Q206.4 828.3 196.5 817.8" stroke="#414676" stroke-width="1.26" fill="none" opacity="0.65"/><path d="M117.3 807.8 Q115.2 803.1 116.3 798.3" stroke="#2a3062" stroke-width="0.95" fill="none" opacity="0.42"/><path d="M281.0 854.5 Q280.7 837.6 284.0 820.6" stroke="#545886" stroke-width="0.68" fill="none" opacity="0.36"/><path d="M164.8 815.9 Q172.3 799.3 172.1 782.7" stroke="#353b6c" stroke-width="0.74" fill="none" opacity="0.38"/><path d="M264.5 839.4 Q256.3 827.8 246.6 816.1" stroke="#505482" stroke-width="1.03" fill="none" opacity="0.42"/><path d="M510.1 889.5 Q507.0 887.8 507.9 886.1" stroke="#8a8ab4" stroke-width="1.16" fill="none" opacity="0.58"/><path d="M179.0 831.9 Q176.2 824.6 172.4 817.3" stroke="#393e6f" stroke-width="0.98" fill="none" opacity="0.61"/><path d="M155.6 824.0 Q158.7 803.8 160.7 783.7" stroke="#33386a" stroke-width="0.69" fill="none" opacity="0.50"/><path d="M485.3 879.6 Q481.4 874.0 481.5 868.3" stroke="#8a8ab4" stroke-width="1.19" fill="none" opacity="0.54"/><path d="M64.9 794.0 Q45.5 772.2 33.7 750.4" stroke="#2a3062" stroke-width="1.04" fill="none" opacity="0.65"/><path d="M281.1 856.3 Q284.2 845.9 280.7 835.5" stroke="#545886" stroke-width="1.04" fill="none" opacity="0.59"/><path d="M237.2 852.3 Q234.1 835.2 234.1 818.0" stroke="#494d7c" stroke-width="0.77" fill="none" opacity="0.69"/><path d="M327.6 858.8 Q326.1 846.5 323.0 834.1" stroke="#616391" stroke-width="0.76" fill="none" opacity="0.66"/><path d="M246.0 853.6 Q249.1 846.5 251.4 839.4" stroke="#4b4f7e" stroke-width="0.99" fill="none" opacity="0.45"/><path d="M484.9 892.7 Q482.4 884.5 480.5 876.2" stroke="#8a8ab4" stroke-width="0.74" fill="none" opacity="0.45"/><path d="M132.0 795.8 Q125.1 785.3 115.5 774.8" stroke="#2d3364" stroke-width="0.59" fill="none" opacity="0.66"/><path d="M159.8 810.4 Q155.4 793.3 147.4 776.3" stroke="#34396b" stroke-width="0.77" fill="none" opacity="0.66"/><path d="M16.7 768.7 Q18.2 742.0 23.5 715.3" stroke="#2a3062" stroke-width="1.08" fill="none" opacity="0.41"/><path d="M259.3 844.3 Q263.1 831.4 261.3 818.6" stroke="#4f5281" stroke-width="0.73" fill="none" opacity="0.51"/><path d="M289.9 867.8 Q297.2 856.6 297.7 845.5" stroke="#575a88" stroke-width="0.87" fill="none" opacity="0.43"/><path d="M498.9 894.7 Q501.7 886.4 502.8 878.2" stroke="#8a8ab4" stroke-width="0.97" fill="none" opacity="0.55"/><path d="M131.1 802.7 Q134.3 798.8 132.4 794.8" stroke="#2c3264" stroke-width="1.16" fill="none" opacity="0.69"/><path d="M387.9 869.4 Q387.1 864.0 392.5 858.6" stroke="#71729f" stroke-width="1.29" fill="none" opacity="0.61"/><path d="M71.7 783.7 Q69.8 760.8 75.5 738.0" stroke="#2a3062" stroke-width="0.98" fill="none" opacity="0.33"/><path d="M441.4 887.2 Q437.1 885.3 440.5 883.4" stroke="#7f80ab" stroke-width="1.32" fill="none" opacity="0.65"/><path d="M368.4 863.7 Q364.5 851.1 358.2 838.5" stroke="#6c6e9a" stroke-width="1.19" fill="none" opacity="0.50"/><path d="M55.3 780.9 Q42.3 761.4 31.2 741.9" stroke="#2a3062" stroke-width="1.34" fill="none" opacity="0.43"/><path d="M74.3 794.9 Q76.4 782.4 80.6 769.8" stroke="#2a3062" stroke-width="1.25" fill="none" opacity="0.62"/><path d="M87.6 795.5 Q82.8 782.3 71.4 769.2" stroke="#2a3062" stroke-width="0.81" fill="none" opacity="0.53"/><path d="M26.4 792.1 Q27.0 762.8 33.5 733.6" stroke="#2a3062" stroke-width="1.10" fill="none" opacity="0.46"/><path d="M241.1 837.5 Q243.7 832.2 244.6 827.0" stroke="#4a4e7d" stroke-width="1.17" fill="none" opacity="0.58"/><path d="M203.7 832.8 Q203.9 824.4 205.2 816.0" stroke="#404475" stroke-width="1.21" fill="none" opacity="0.38"/><path d="M193.4 817.9 Q187.5 813.6 189.3 809.2" stroke="#3d4272" stroke-width="0.88" fill="none" opacity="0.42"/><path d="M453.7 876.8 Q448.5 864.9 438.0 853.1" stroke="#8283ae" stroke-width="0.82" fill="none" opacity="0.36"/><path d="M312.5 862.0 Q312.4 859.5 309.4 856.9" stroke="#5d608d" stroke-width="1.15" fill="none" opacity="0.70"/><path d="M126.6 810.5 Q123.8 797.8 124.5 785.1" stroke="#2b3163" stroke-width="0.87" fill="none" opacity="0.66"/><path d="M125.9 801.9 Q124.1 774.7 117.2 747.4" stroke="#2b3163" stroke-width="0.98" fill="none" opacity="0.41"/><path d="M369.5 879.5 Q369.4 873.7 375.8 867.9" stroke="#6c6e9a" stroke-width="1.26" fill="none" opacity="0.57"/><path d="M364.1 874.3 Q358.7 865.4 350.6 856.4" stroke="#6b6d99" stroke-width="1.28" fill="none" opacity="0.43"/><path d="M380.1 882.2 Q381.7 874.3 383.7 866.4" stroke="#6f719d" stroke-width="0.61" fill="none" opacity="0.49"/><path d="M386.6 870.6 Q385.0 863.3 391.2 856.0" stroke="#71729e" stroke-width="1.28" fill="none" opacity="0.41"/><path d="M183.9 829.3 Q174.6 811.6 170.8 794.0" stroke="#3b3f70" stroke-width="0.88" fill="none" opacity="0.65"/><path d="M512.3 899.2 Q516.9 888.7 514.9 878.3" stroke="#8a8ab4" stroke-width="0.64" fill="none" opacity="0.32"/><path d="M433.7 874.0 Q435.3 865.8 430.1 857.6" stroke="#7d7ea9" stroke-width="1.06" fill="none" opacity="0.35"/><path d="M28.5 781.0 Q26.7 763.0 23.5 744.9" stroke="#2a3062" stroke-width="0.56" fill="none" opacity="0.41"/><path d="M426.5 879.7 Q428.1 876.0 422.6 872.3" stroke="#7b7ca7" stroke-width="1.28" fill="none" opacity="0.43"/><path d="M166.3 815.1 Q180.2 790.2 186.8 765.3" stroke="#363b6c" stroke-width="1.27" fill="none" opacity="0.56"/><path d="M55.8 797.8 Q56.2 789.8 58.8 781.8" stroke="#2a3062" stroke-width="0.53" fill="none" opacity="0.55"/><path d="M127.5 813.6 Q127.9 805.2 129.3 796.7" stroke="#2c3163" stroke-width="0.54" fill="none" opacity="0.38"/><path d="M155.9 821.1 Q163.0 799.2 175.6 777.3" stroke="#33386a" stroke-width="0.69" fill="none" opacity="0.42"/><path d="M161.6 809.5 Q146.8 791.4 131.5 773.3" stroke="#353a6b" stroke-width="0.62" fill="none" opacity="0.39"/><path d="M146.8 810.3 Q151.4 782.4 157.2 754.5" stroke="#313668" stroke-width="1.39" fill="none" opacity="0.36"/><path d="M92.9 798.8 Q97.0 775.2 101.0 751.6" stroke="#2a3062" stroke-width="1.15" fill="none" opacity="0.40"/><path d="M488.1 897.3 Q490.9 885.5 486.9 873.6" stroke="#8a8ab4" stroke-width="0.92" fill="none" opacity="0.68"/><path d="M225.6 850.2 Q225.4 841.6 224.2 832.9" stroke="#464a7a" stroke-width="0.99" fill="none" opacity="0.63"/><path d="M435.8 878.1 Q434.3 867.4 434.3 856.8" stroke="#7e7ea9" stroke-width="0.60" fill="none" opacity="0.66"/><path d="M509.2 899.3 Q502.7 891.9 499.0 884.5" stroke="#8a8ab4" stroke-width="0.80" fill="none" opacity="0.29"/><path d="M190.0 823.5 Q178.7 811.6 173.2 799.7" stroke="#3c4171" stroke-width="1.36" fill="none" opacity="0.50"/><path d="M116.1 799.7 Q111.9 786.5 113.0 773.3" stroke="#2a3062" stroke-width="1.17" fill="none" opacity="0.67"/><path d="M321.7 879.1 Q320.9 861.1 319.7 843.0" stroke="#5f628f" stroke-width="1.12" fill="none" opacity="0.42"/><path d="M34.7 781.8 Q33.8 756.7 40.2 731.7" stroke="#2a3062" stroke-width="1.24" fill="none" opacity="0.27"/><path d="M264.7 843.6 Q262.2 835.9 257.9 828.3" stroke="#505482" stroke-width="1.14" fill="none" opacity="0.65"/><path d="M258.0 838.8 Q253.1 835.9 254.2 833.1" stroke="#4e5281" stroke-width="0.66" fill="none" opacity="0.38"/><path d="M73.1 799.4 Q73.8 786.3 69.9 773.3" stroke="#2a3062" stroke-width="0.66" fill="none" opacity="0.48"/><path d="M16.4 778.9 Q14.3 750.8 15.3 722.7" stroke="#2a3062" stroke-width="1.07" fill="none" opacity="0.48"/><path d="M253.9 851.4 Q263.5 836.3 265.5 821.2" stroke="#4d5180" stroke-width="1.37" fill="none" opacity="0.61"/><path d="M350.0 879.9 Q350.8 876.1 346.2 872.3" stroke="#676996" stroke-width="0.89" fill="none" opacity="0.26"/><path d="M382.4 869.1 Q382.0 864.3 386.5 859.5" stroke="#6f719d" stroke-width="1.24" fill="none" opacity="0.37"/><path d="M407.8 879.2 Q410.6 870.4 409.9 861.5" stroke="#7677a3" stroke-width="0.69" fill="none" opacity="0.55"/><path d="M81.4 786.8 Q68.8 765.8 57.5 744.7" stroke="#2a3062" stroke-width="0.60" fill="none" opacity="0.51"/><path d="M86.2 790.7 Q81.4 761.6 76.5 732.6" stroke="#2a3062" stroke-width="0.53" fill="none" opacity="0.37"/><path d="M50.1 788.9 Q43.6 782.0 42.8 775.1" stroke="#2a3062" stroke-width="1.17" fill="none" opacity="0.54"/><path d="M146.9 806.8 Q147.0 795.8 145.9 784.8" stroke="#313668" stroke-width="0.62" fill="none" opacity="0.32"/><path d="M320.8 862.7 Q310.4 849.2 306.4 835.7" stroke="#5f628f" stroke-width="0.56" fill="none" opacity="0.64"/><path d="M274.0 842.5 Q272.3 833.1 275.1 823.7" stroke="#535685" stroke-width="1.25" fill="none" opacity="0.25"/><path d="M268.4 854.2 Q271.7 848.7 274.3 843.1" stroke="#515583" stroke-width="0.62" fill="none" opacity="0.59"/><path d="M9.7 782.3 Q7.5 756.7 13.1 731.1" stroke="#2a3062" stroke-width="0.56" fill="none" opacity="0.62"/><path d="M435.4 880.2 Q435.9 867.2 442.7 854.2" stroke="#7e7ea9" stroke-width="1.30" fill="none" opacity="0.26"/><path d="M163.7 810.3 Q159.2 801.1 161.9 791.9" stroke="#353a6b" stroke-width="1.37" fill="none" opacity="0.34"/><path d="M349.7 869.1 Q349.3 855.7 349.0 842.4" stroke="#676996" stroke-width="1.18" fill="none" opacity="0.50"/><path d="M229.4 832.9 Q230.1 815.2 231.3 797.4" stroke="#474b7a" stroke-width="1.39" fill="none" opacity="0.46"/><path d="M380.5 869.5 Q379.0 863.2 381.2 856.9" stroke="#6f719d" stroke-width="1.40" fill="none" opacity="0.70"/><path d="M330.5 874.8 Q334.5 869.7 332.8 864.6" stroke="#626491" stroke-width="0.91" fill="none" opacity="0.50"/><path d="M335.3 864.3 Q334.4 862.2 333.1 860.1" stroke="#636593" stroke-width="1.07" fill="none" opacity="0.64"/><path d="M134.3 798.8 Q125.2 785.8 120.0 772.9" stroke="#2d3365" stroke-width="0.94" fill="none" opacity="0.56"/><path d="M49.9 778.1 Q46.1 762.1 47.5 746.0" stroke="#2a3062" stroke-width="1.09" fill="none" opacity="0.50"/><path d="M495.8 903.3 Q490.5 895.3 484.9 887.2" stroke="#8a8ab4" stroke-width="0.74" fill="none" opacity="0.38"/><path d="M34.4 787.5 Q24.6 767.9 19.2 748.3" stroke="#2a3062" stroke-width="1.39" fill="none" opacity="0.50"/><path d="M357.6 867.8 Q359.9 854.3 362.0 840.8" stroke="#696b98" stroke-width="0.60" fill="none" opacity="0.45"/><path d="M7.9 770.6 Q-7.5 750.1 -18.1 729.7" stroke="#2a3062" stroke-width="0.81" fill="none" opacity="0.69"/><path d="M80.6 790.7 Q70.4 776.5 59.2 762.4" stroke="#2a3062" stroke-width="0.56" fill="none" opacity="0.39"/><path d="M162.7 828.8 Q156.2 814.5 152.5 800.1" stroke="#353a6b" stroke-width="0.77" fill="none" opacity="0.32"/><path d="M159.3 820.3 Q150.3 808.5 148.6 796.6" stroke="#34396a" stroke-width="1.21" fill="none" opacity="0.38"/><path d="M135.7 815.6 Q131.1 786.5 133.4 757.3" stroke="#2e3365" stroke-width="1.25" fill="none" opacity="0.59"/><path d="M4.0 771.7 Q-1.9 746.3 -2.6 720.8" stroke="#2a3062" stroke-width="1.39" fill="none" opacity="0.35"/><path d="M88.8 799.3 Q89.4 770.0 97.6 740.6" stroke="#2a3062" stroke-width="0.52" fill="none" opacity="0.35"/><path d="M340.8 882.2 Q342.5 879.0 341.5 875.7" stroke="#646794" stroke-width="0.53" fill="none" opacity="0.66"/><path d="M158.0 812.2 Q157.8 787.7 155.7 763.2" stroke="#34396a" stroke-width="0.55" fill="none" opacity="0.53"/><path d="M72.6 798.7 Q75.7 774.7 76.4 750.7" stroke="#2a3062" stroke-width="1.38" fill="none" opacity="0.62"/><path d="M367.3 872.1 Q364.8 870.4 369.2 868.7" stroke="#6b6d9a" stroke-width="0.54" fill="none" opacity="0.52"/><path d="M511.0 892.7 Q505.5 889.2 505.4 885.8" stroke="#8a8ab4" stroke-width="0.83" fill="none" opacity="0.41"/><path d="M134.9 816.1 Q146.1 789.4 162.3 762.7" stroke="#2d3365" stroke-width="1.13" fill="none" opacity="0.32"/><path d="M235.3 842.6 Q235.2 834.2 239.5 825.8" stroke="#484c7c" stroke-width="1.22" fill="none" opacity="0.59"/><path d="M322.1 858.0 Q327.1 853.2 324.7 848.4" stroke="#5f6290" stroke-width="0.72" fill="none" opacity="0.55"/><path d="M389.1 887.9 Q384.1 884.7 386.0 881.5" stroke="#71739f" stroke-width="1.12" fill="none" opacity="0.41"/><path d="M358.0 865.9 Q353.9 856.8 350.8 847.6" stroke="#696b98" stroke-width="1.03" fill="none" opacity="0.68"/><path d="M94.6 802.7 Q93.8 798.2 89.8 793.8" stroke="#2a3062" stroke-width="0.57" fill="none" opacity="0.63"/><path d="M457.1 881.4 Q461.8 870.7 458.8 860.0" stroke="#8384ae" stroke-width="0.95" fill="none" opacity="0.42"/><path d="M451.7 881.9 Q447.5 869.1 444.7 856.2" stroke="#8282ad" stroke-width="1.25" fill="none" opacity="0.59"/><path d="M90.8 798.9 Q84.8 769.9 77.9 740.9" stroke="#2a3062" stroke-width="1.09" fill="none" opacity="0.57"/><path d="M198.1 826.7 Q197.1 818.3 198.9 809.9" stroke="#3e4373" stroke-width="1.21" fill="none" opacity="0.27"/><path d="M389.9 871.0 Q392.4 858.8 397.1 846.5" stroke="#71739f" stroke-width="0.59" fill="none" opacity="0.34"/><path d="M103.0 809.4 Q83.6 789.8 72.0 770.3" stroke="#2a3062" stroke-width="1.00" fill="none" opacity="0.45"/><path d="M282.2 864.7 Q276.5 848.8 263.2 832.9" stroke="#555886" stroke-width="0.91" fill="none" opacity="0.46"/><path d="M73.6 784.8 Q70.8 776.8 67.4 768.7" stroke="#2a3062" stroke-width="0.73" fill="none" opacity="0.37"/><path d="M52.5 776.2 Q47.4 748.9 43.0 721.7" stroke="#2a3062" stroke-width="0.62" fill="none" opacity="0.69"/><path d="M1.6 783.1 Q-0.2 778.6 -1.8 774.0" stroke="#2a3062" stroke-width="0.91" fill="none" opacity="0.57"/><path d="M291.5 864.1 Q288.4 860.4 288.8 856.7" stroke="#575a89" stroke-width="0.93" fill="none" opacity="0.44"/><path d="M51.1 777.3 Q49.2 773.0 44.8 768.7" stroke="#2a3062" stroke-width="1.37" fill="none" opacity="0.52"/><path d="M97.8 799.3 Q94.3 783.7 86.0 768.0" stroke="#2a3062" stroke-width="0.74" fill="none" opacity="0.39"/><path d="M18.7 773.5 Q17.0 745.8 11.7 718.0" stroke="#2a3062" stroke-width="0.94" fill="none" opacity="0.37"/><path d="M179.4 823.1 Q174.6 811.3 177.4 799.5" stroke="#393e6f" stroke-width="0.85" fill="none" opacity="0.30"/><path d="M243.8 845.8 Q253.7 827.1 257.4 808.4" stroke="#4b4e7e" stroke-width="0.90" fill="none" opacity="0.38"/><path d="M435.7 876.6 Q434.3 871.3 428.0 865.9" stroke="#7e7ea9" stroke-width="1.17" fill="none" opacity="0.67"/><path d="M91.6 803.3 Q90.2 781.3 89.6 759.3" stroke="#2a3062" stroke-width="1.22" fill="none" opacity="0.46"/><path d="M486.9 901.6 Q486.0 895.2 486.3 888.8" stroke="#8a8ab4" stroke-width="1.31" fill="none" opacity="0.63"/><path d="M203.3 828.3 Q205.5 819.6 205.0 811.0" stroke="#404474" stroke-width="1.06" fill="none" opacity="0.48"/><path d="M344.2 859.9 Q347.1 852.1 346.3 844.4" stroke="#656895" stroke-width="1.23" fill="none" opacity="0.35"/><path d="M476.8 901.6 Q477.1 892.3 482.2 883.1" stroke="#8989b3" stroke-width="0.67" fill="none" opacity="0.35"/><path d="M272.5 863.1 Q278.9 854.5 280.1 846.0" stroke="#525684" stroke-width="0.54" fill="none" opacity="0.26"/><path d="M513.9 894.0 Q516.2 883.0 521.5 872.1" stroke="#8a8ab4" stroke-width="0.51" fill="none" opacity="0.64"/><path d="M479.4 888.2 Q476.5 880.3 466.5 872.5" stroke="#8989b3" stroke-width="1.05" fill="none" opacity="0.69"/><path d="M353.0 869.8 Q355.6 865.8 352.4 861.7" stroke="#686a97" stroke-width="0.98" fill="none" opacity="0.49"/><path d="M109.4 790.9 Q105.9 781.4 102.8 772.0" stroke="#2a3062" stroke-width="1.35" fill="none" opacity="0.37"/><path d="M113.7 806.1 Q100.6 780.2 90.7 754.2" stroke="#2a3062" stroke-width="0.87" fill="none" opacity="0.28"/><path d="M43.2 785.9 Q41.5 776.6 34.9 767.2" stroke="#2a3062" stroke-width="0.93" fill="none" opacity="0.50"/><path d="M336.1 876.3 Q339.0 864.3 348.1 852.3" stroke="#636693" stroke-width="1.17" fill="none" opacity="0.26"/><path d="M57.0 781.5 Q51.3 775.3 49.9 769.1" stroke="#2a3062" stroke-width="1.23" fill="none" opacity="0.60"/><path d="M255.7 849.8 Q252.5 833.0 256.0 816.2" stroke="#4e5180" stroke-width="0.91" fill="none" opacity="0.34"/><path d="M239.8 855.4 Q238.5 849.3 235.8 843.1" stroke="#494d7d" stroke-width="1.09" fill="none" opacity="0.39"/><path d="M200.3 830.4 Q191.3 814.1 176.1 797.8" stroke="#3f4474" stroke-width="1.00" fill="none" opacity="0.66"/><path d="M198.0 833.2 Q197.3 829.2 194.3 825.2" stroke="#3e4373" stroke-width="0.80" fill="none" opacity="0.48"/><path d="M506.1 895.0 Q503.9 884.8 505.7 874.6" stroke="#8a8ab4" stroke-width="1.39" fill="none" opacity="0.42"/><path d="M7.4 775.7 Q0.4 762.5 -5.4 749.4" stroke="#2a3062" stroke-width="0.57" fill="none" opacity="0.67"/><path d="M265.8 846.5 Q265.1 833.5 266.1 820.4" stroke="#505483" stroke-width="1.23" fill="none" opacity="0.45"/><path d="M474.9 896.5 Q471.4 887.3 464.7 878.1" stroke="#8888b2" stroke-width="1.38" fill="none" opacity="0.62"/><path d="M17.8 774.4 Q21.3 770.6 18.5 766.8" stroke="#2a3062" stroke-width="1.12" fill="none" opacity="0.55"/><path d="M277.0 860.5 Q277.6 847.9 283.6 835.3" stroke="#535785" stroke-width="0.92" fill="none" opacity="0.53"/><path d="M30.7 783.6 Q17.0 760.6 -0.5 737.6" stroke="#2a3062" stroke-width="1.15" fill="none" opacity="0.65"/><path d="M497.5 895.9 Q495.8 886.7 495.1 877.4" stroke="#8a8ab4" stroke-width="1.04" fill="none" opacity="0.40"/><path d="M410.3 883.5 Q411.3 876.3 409.1 869.0" stroke="#7778a4" stroke-width="1.25" fill="none" opacity="0.62"/><path d="M363.7 868.8 Q359.4 867.2 361.8 865.7" stroke="#6a6c99" stroke-width="0.96" fill="none" opacity="0.28"/><path d="M241.1 850.4 Q243.8 840.1 248.6 829.7" stroke="#4a4e7d" stroke-width="0.94" fill="none" opacity="0.37"/><path d="M63.0 790.6 Q57.8 784.5 56.0 778.4" stroke="#2a3062" stroke-width="1.16" fill="none" opacity="0.69"/><path d="M107.9 792.8 Q110.2 763.6 107.7 734.4" stroke="#2a3062" stroke-width="1.40" fill="none" opacity="0.55"/><path d="M123.6 814.5 Q109.9 793.7 88.8 772.8" stroke="#2a3062" stroke-width="1.08" fill="none" opacity="0.35"/><path d="M241.6 839.7 Q234.5 822.8 234.0 805.8" stroke="#4a4e7d" stroke-width="1.30" fill="none" opacity="0.40"/><path d="M85.5 798.7 Q85.3 791.5 85.9 784.3" stroke="#2a3062" stroke-width="0.61" fill="none" opacity="0.68"/><path d="M355.5 862.9 Q359.1 849.8 357.5 836.7" stroke="#686a97" stroke-width="1.19" fill="none" opacity="0.33"/><path d="M158.3 807.5 Q169.5 784.8 179.5 762.1" stroke="#34396a" stroke-width="1.10" fill="none" opacity="0.69"/><path d="M265.9 850.2 Q266.6 843.1 273.3 836.0" stroke="#505483" stroke-width="0.67" fill="none" opacity="0.63"/><path d="M9.0 770.6 Q1.0 754.4 -5.2 738.3" stroke="#2a3062" stroke-width="0.52" fill="none" opacity="0.55"/><path d="M33.8 777.7 Q32.4 771.3 35.5 765.0" stroke="#2a3062" stroke-width="1.00" fill="none" opacity="0.26"/><path d="M289.4 854.8 Q278.8 837.1 271.5 819.4" stroke="#575a88" stroke-width="1.28" fill="none" opacity="0.28"/><path d="M250.1 846.6 Q246.2 839.4 242.3 832.2" stroke="#4c507f" stroke-width="0.53" fill="none" opacity="0.25"/><path d="M143.7 807.2 Q144.6 796.8 146.9 786.4" stroke="#303567" stroke-width="1.05" fill="none" opacity="0.52"/><path d="M364.6 885.4 Q366.3 876.6 367.0 867.8" stroke="#6b6d99" stroke-width="0.57" fill="none" opacity="0.63"/><path d="M270.0 841.8 Q271.9 825.1 266.7 808.5" stroke="#515584" stroke-width="0.88" fill="none" opacity="0.46"/><path d="M460.8 898.8 Q458.4 887.5 457.0 876.1" stroke="#8485af" stroke-width="1.16" fill="none" opacity="0.65"/><path d="M233.1 846.8 Q230.3 833.5 232.1 820.2" stroke="#484c7b" stroke-width="0.75" fill="none" opacity="0.36"/><path d="M506.7 882.3 Q507.2 878.2 502.7 874.1" stroke="#8a8ab4" stroke-width="1.10" fill="none" opacity="0.39"/><path d="M50.5 790.3 Q53.8 767.0 53.7 743.7" stroke="#2a3062" stroke-width="1.04" fill="none" opacity="0.26"/><path d="M408.5 891.0 Q411.4 887.2 406.6 883.5" stroke="#7678a3" stroke-width="1.38" fill="none" opacity="0.62"/><path d="M433.3 877.3 Q434.6 865.0 440.6 852.7" stroke="#7d7ea9" stroke-width="1.32" fill="none" opacity="0.62"/><path d="M471.3 899.3 Q472.4 896.6 468.5 894.0" stroke="#8787b2" stroke-width="0.66" fill="none" opacity="0.41"/><path d="M405.3 889.5 Q405.5 882.9 402.5 876.2" stroke="#7677a2" stroke-width="1.40" fill="none" opacity="0.53"/><path d="M175.4 815.2 Q177.4 806.6 176.0 797.9" stroke="#383d6e" stroke-width="0.70" fill="none" opacity="0.58"/><path d="M309.3 866.3 Q302.9 853.9 304.2 841.5" stroke="#5c5f8d" stroke-width="0.98" fill="none" opacity="0.55"/><path d="M456.5 899.4 Q454.5 890.7 446.8 882.0" stroke="#8384ae" stroke-width="0.87" fill="none" opacity="0.68"/><path d="M486.0 881.5 Q486.0 879.5 483.1 877.6" stroke="#8a8ab4" stroke-width="0.94" fill="none" opacity="0.53"/><path d="M163.9 819.6 Q163.0 814.0 158.4 808.4" stroke="#353a6b" stroke-width="0.71" fill="none" opacity="0.30"/><path d="M332.6 881.5 Q339.1 868.8 342.2 856.0" stroke="#626592" stroke-width="0.51" fill="none" opacity="0.32"/><path d="M297.8 861.9 Q287.4 847.3 275.0 832.7" stroke="#595c8a" stroke-width="0.56" fill="none" opacity="0.59"/><path d="M41.5 784.0 Q55.0 762.7 63.8 741.4" stroke="#2a3062" stroke-width="1.20" fill="none" opacity="0.38"/><path d="M327.1 870.0 Q326.9 857.9 327.5 845.9" stroke="#616391" stroke-width="0.84" fill="none" opacity="0.59"/><path d="M331.3 881.1 Q331.7 868.1 338.3 855.0" stroke="#626492" stroke-width="0.95" fill="none" opacity="0.47"/><path d="M405.8 891.5 Q406.1 888.2 400.4 884.9" stroke="#7677a3" stroke-width="1.38" fill="none" opacity="0.40"/><path d="M307.5 861.2 Q309.7 851.3 308.8 841.4" stroke="#5c5e8c" stroke-width="1.31" fill="none" opacity="0.41"/><path d="M252.1 846.4 Q253.7 825.1 248.7 803.8" stroke="#4d5180" stroke-width="1.37" fill="none" opacity="0.26"/><path d="M396.3 870.8 Q393.3 862.8 397.2 854.7" stroke="#7375a0" stroke-width="1.02" fill="none" opacity="0.56"/><path d="M176.0 822.6 Q167.1 810.3 162.0 798.0" stroke="#383e6e" stroke-width="1.35" fill="none" opacity="0.54"/><path d="M276.3 862.1 Q279.3 844.0 283.9 825.8" stroke="#535785" stroke-width="0.99" fill="none" opacity="0.40"/><path d="M28.5 791.9 Q29.8 786.2 25.6 780.6" stroke="#2a3062" stroke-width="0.78" fill="none" opacity="0.66"/><path d="M6.1 768.8 Q9.4 753.4 8.1 737.9" stroke="#2a3062" stroke-width="1.31" fill="none" opacity="0.62"/><path d="M91.5 807.0 Q89.5 802.1 90.1 797.2" stroke="#2a3062" stroke-width="0.52" fill="none" opacity="0.34"/><path d="M511.7 905.3 Q516.6 899.9 517.6 894.5" stroke="#8a8ab4" stroke-width="0.53" fill="none" opacity="0.52"/><path d="M101.5 792.2 Q90.5 771.9 81.8 751.6" stroke="#2a3062" stroke-width="0.51" fill="none" opacity="0.39"/><path d="M152.9 804.1 Q148.2 798.0 150.2 791.8" stroke="#323869" stroke-width="1.34" fill="none" opacity="0.37"/><path d="M186.0 814.8 Q171.2 792.5 163.2 770.2" stroke="#3b4071" stroke-width="0.83" fill="none" opacity="0.66"/><path d="M472.3 889.0 Q470.3 881.6 461.8 874.1" stroke="#8788b2" stroke-width="1.18" fill="none" opacity="0.36"/><path d="M431.8 877.2 Q429.6 869.8 426.3 862.4" stroke="#7d7da9" stroke-width="0.73" fill="none" opacity="0.49"/><path d="M127.9 792.8 Q129.1 786.3 131.1 779.8" stroke="#2c3163" stroke-width="0.96" fill="none" opacity="0.55"/><path d="M127.7 796.9 Q132.5 782.8 133.5 768.6" stroke="#2c3163" stroke-width="0.91" fill="none" opacity="0.52"/><path d="M127.5 815.1 Q131.9 795.3 138.3 775.4" stroke="#2c3163" stroke-width="1.02" fill="none" opacity="0.57"/><path d="M271.8 859.7 Q272.2 852.0 275.5 844.4" stroke="#525584" stroke-width="0.96" fill="none" opacity="0.31"/><path d="M204.9 841.3 Q203.7 838.4 201.9 835.5" stroke="#404575" stroke-width="1.09" fill="none" opacity="0.56"/><path d="M352.0 878.3 Q347.8 870.1 342.8 861.9" stroke="#676a96" stroke-width="0.75" fill="none" opacity="0.25"/><path d="M258.7 860.9 Q262.1 849.7 263.6 838.4" stroke="#4e5281" stroke-width="0.53" fill="none" opacity="0.50"/><path d="M509.0 897.6 Q512.4 892.4 513.2 887.3" stroke="#8a8ab4" stroke-width="1.34" fill="none" opacity="0.63"/><path d="M298.3 860.5 Q297.2 848.4 290.4 836.3" stroke="#595c8a" stroke-width="0.61" fill="none" opacity="0.70"/><path d="M171.4 818.6 Q165.9 799.9 158.8 781.2" stroke="#373c6d" stroke-width="0.55" fill="none" opacity="0.64"/><path d="M49.7 794.9 Q58.1 769.4 62.4 743.9" stroke="#2a3062" stroke-width="0.67" fill="none" opacity="0.51"/><path d="M27.1 787.3 Q16.1 765.3 5.9 743.3" stroke="#2a3062" stroke-width="0.58" fill="none" opacity="0.55"/><path d="M358.0 863.4 Q358.7 854.5 364.6 845.6" stroke="#696b98" stroke-width="1.32" fill="none" opacity="0.37"/><path d="M3.6 766.7 Q-4.2 745.7 -17.8 724.6" stroke="#2a3062" stroke-width="0.89" fill="none" opacity="0.29"/><path d="M419.6 879.8 Q415.8 877.1 415.1 874.5" stroke="#797aa6" stroke-width="0.92" fill="none" opacity="0.47"/><path d="M297.9 851.1 Q298.2 848.5 299.8 845.9" stroke="#595c8a" stroke-width="1.15" fill="none" opacity="0.65"/><path d="M304.0 868.7 Q301.2 862.5 298.1 856.3" stroke="#5b5e8b" stroke-width="1.39" fill="none" opacity="0.69"/><path d="M115.5 803.9 Q110.7 793.0 109.4 782.0" stroke="#2a3062" stroke-width="1.40" fill="none" opacity="0.42"/><path d="M236.3 832.9 Q228.4 817.4 215.2 802.0" stroke="#494d7c" stroke-width="0.72" fill="none" opacity="0.36"/><path d="M16.8 775.8 Q7.9 748.0 1.6 720.2" stroke="#2a3062" stroke-width="1.17" fill="none" opacity="0.35"/><path d="M388.7 890.1 Q383.3 880.1 373.4 870.1" stroke="#71739f" stroke-width="1.21" fill="none" opacity="0.61"/><path d="M295.8 851.1 Q295.7 835.6 295.7 820.1" stroke="#585b8a" stroke-width="1.19" fill="none" opacity="0.33"/><path d="M190.4 830.0 Q206.3 805.9 216.0 781.8" stroke="#3c4172" stroke-width="0.74" fill="none" opacity="0.44"/><path d="M267.9 851.3 Q270.3 847.2 265.7 843.2" stroke="#515483" stroke-width="0.84" fill="none" opacity="0.65"/><path d="M458.6 888.6 Q460.7 876.7 470.7 864.8" stroke="#8484af" stroke-width="1.03" fill="none" opacity="0.68"/><path d="M156.3 811.3 Q159.5 804.1 161.7 796.9" stroke="#33396a" stroke-width="1.03" fill="none" opacity="0.52"/><path d="M461.6 889.0 Q458.9 880.4 458.8 871.8" stroke="#8585af" stroke-width="1.37" fill="none" opacity="0.54"/><path d="M252.1 837.7 Q243.0 825.9 234.3 814.1" stroke="#4d5180" stroke-width="0.69" fill="none" opacity="0.43"/><path d="M110.0 792.9 Q100.0 779.9 93.9 767.0" stroke="#2a3062" stroke-width="1.15" fill="none" opacity="0.30"/><path d="M435.1 883.6 Q435.1 879.2 437.1 874.8" stroke="#7e7ea9" stroke-width="0.83" fill="none" opacity="0.25"/><path d="M87.8 804.9 Q85.6 788.4 81.9 772.0" stroke="#2a3062" stroke-width="0.58" fill="none" opacity="0.32"/><path d="M443.3 889.7 Q443.6 884.2 447.2 878.8" stroke="#8080ab" stroke-width="0.90" fill="none" opacity="0.60"/><path d="M438.1 880.7 Q430.1 868.0 425.8 855.2" stroke="#7e7faa" stroke-width="0.96" fill="none" opacity="0.50"/><path d="M275.9 853.8 Q268.6 837.8 262.4 821.7" stroke="#535685" stroke-width="1.11" fill="none" opacity="0.65"/><path d="M127.3 800.8 Q121.5 785.8 115.4 770.9" stroke="#2b3163" stroke-width="1.35" fill="none" opacity="0.36"/><path d="M427.1 894.1 Q421.9 886.5 422.7 878.8" stroke="#7b7ca7" stroke-width="0.99" fill="none" opacity="0.63"/><path d="M193.5 822.1 Q181.6 799.8 168.6 777.6" stroke="#3d4272" stroke-width="1.19" fill="none" opacity="0.48"/><path d="M147.3 813.8 Q151.0 801.3 149.9 788.8" stroke="#313668" stroke-width="1.22" fill="none" opacity="0.60"/><path d="M59.4 782.4 Q63.9 761.1 62.1 739.9" stroke="#2a3062" stroke-width="0.90" fill="none" opacity="0.28"/><path d="M33.4 771.9 Q24.2 754.8 22.4 737.8" stroke="#2a3062" stroke-width="1.32" fill="none" opacity="0.28"/><path d="M176.0 828.3 Q170.5 808.6 157.6 789.0" stroke="#383e6e" stroke-width="0.90" fill="none" opacity="0.62"/><path d="M214.4 839.0 Q202.8 822.2 190.0 805.4" stroke="#434777" stroke-width="1.03" fill="none" opacity="0.69"/><path d="M307.7 858.3 Q304.9 853.0 307.3 847.7" stroke="#5c5e8c" stroke-width="0.82" fill="none" opacity="0.68"/><path d="M90.0 787.8 Q91.2 766.6 85.9 745.3" stroke="#2a3062" stroke-width="0.79" fill="none" opacity="0.59"/><path d="M210.5 845.9 Q200.5 828.0 192.5 810.1" stroke="#424676" stroke-width="0.93" fill="none" opacity="0.46"/><path d="M302.6 867.1 Q305.6 861.6 303.5 856.1" stroke="#5a5d8b" stroke-width="0.87" fill="none" opacity="0.37"/><path d="M126.3 806.5 Q121.7 800.2 120.3 794.0" stroke="#2b3163" stroke-width="1.12" fill="none" opacity="0.58"/><path d="M277.7 846.7 Q276.2 839.1 266.7 831.5" stroke="#545785" stroke-width="0.91" fill="none" opacity="0.63"/><path d="M123.0 797.3 Q122.7 790.0 119.5 782.7" stroke="#2a3062" stroke-width="1.00" fill="none" opacity="0.40"/><path d="M61.8 782.9 Q54.5 761.8 39.3 740.6" stroke="#2a3062" stroke-width="1.25" fill="none" opacity="0.33"/><path d="M-3.5 901.8 Q-3.0 896.9 -2.5 892.1" stroke="#2a3062" stroke-width="0.87" fill="none" opacity="0.51"/><path d="M4.1 782.8 Q-13.4 762.3 -27.4 741.9" stroke="#2a3062" stroke-width="1.26" fill="none" opacity="0.34"/><path d="M70.2 797.7 Q81.6 771.4 98.0 745.1" stroke="#2a3062" stroke-width="0.62" fill="none" opacity="0.25"/><path d="M56.5 783.2 Q59.9 754.8 68.4 726.5" stroke="#2a3062" stroke-width="0.86" fill="none" opacity="0.50"/><path d="M77.1 781.3 Q70.4 773.0 71.2 764.8" stroke="#2a3062" stroke-width="1.38" fill="none" opacity="0.69"/><path d="M240.5 842.5 Q243.7 830.0 248.3 817.4" stroke="#4a4e7d" stroke-width="1.33" fill="none" opacity="0.68"/><path d="M139.1 810.4 Q133.5 783.1 120.1 755.9" stroke="#2f3466" stroke-width="0.95" fill="none" opacity="0.55"/><path d="M44.7 782.4 Q39.2 763.6 26.3 744.7" stroke="#2a3062" stroke-width="0.86" fill="none" opacity="0.51"/><path d="M399.8 876.2 Q403.9 865.8 403.6 855.3" stroke="#7475a1" stroke-width="0.79" fill="none" opacity="0.40"/><path d="M298.3 860.0 Q300.1 848.4 297.8 836.7" stroke="#595c8a" stroke-width="0.63" fill="none" opacity="0.35"/><path d="M60.6 788.6 Q62.0 780.2 68.0 771.8" stroke="#2a3062" stroke-width="0.90" fill="none" opacity="0.60"/><path d="M142.1 799.5 Q142.4 789.8 145.0 780.0" stroke="#2f3567" stroke-width="1.35" fill="none" opacity="0.32"/><path d="M152.7 813.2 Q145.3 801.4 144.2 789.6" stroke="#323869" stroke-width="0.96" fill="none" opacity="0.59"/></g>
<g><circle cx="155.1" cy="896.3" r="1.6" fill="#fff" opacity="0.57"/><circle cx="419.4" cy="915.8" r="1.0" fill="#fff" opacity="0.54"/><circle cx="198.3" cy="857.8" r="1.0" fill="#fff" opacity="0.54"/><circle cx="12.6" cy="851.4" r="1.0" fill="#fff" opacity="0.81"/><circle cx="277.7" cy="880.0" r="0.8" fill="#fff" opacity="0.94"/><circle cx="398.3" cy="963.8" r="0.6" fill="#fff" opacity="0.55"/><circle cx="8.8" cy="798.1" r="0.8" fill="#fff" opacity="0.59"/><circle cx="389.2" cy="950.9" r="1.0" fill="#fff" opacity="0.79"/><circle cx="61.1" cy="761.3" r="0.6" fill="#fff" opacity="0.67"/><circle cx="403.2" cy="847.3" r="1.0" fill="#fff" opacity="0.82"/><circle cx="284.1" cy="939.1" r="1.2" fill="#fff" opacity="0.74"/><circle cx="324.1" cy="889.3" r="0.6" fill="#fff" opacity="0.82"/><circle cx="390.4" cy="863.6" r="1.2" fill="#fff" opacity="0.85"/><circle cx="145.5" cy="884.8" r="0.8" fill="#fff" opacity="0.82"/><circle cx="151.6" cy="794.8" r="1.0" fill="#fff" opacity="0.89"/><circle cx="168.7" cy="860.8" r="1.2" fill="#fff" opacity="0.76"/><circle cx="76.9" cy="796.0" r="1.6" fill="#fff" opacity="0.84"/><circle cx="89.7" cy="837.2" r="0.8" fill="#fff" opacity="0.84"/><circle cx="74.8" cy="821.4" r="0.6" fill="#fff" opacity="0.95"/><circle cx="161.8" cy="817.6" r="1.6" fill="#fff" opacity="0.77"/><circle cx="131.3" cy="836.6" r="1.6" fill="#fff" opacity="0.89"/><circle cx="412.5" cy="925.9" r="1.6" fill="#fff" opacity="0.68"/><circle cx="322.9" cy="865.1" r="1.6" fill="#fff" opacity="0.90"/><circle cx="409.0" cy="945.8" r="0.8" fill="#fff" opacity="0.83"/><circle cx="371.6" cy="932.5" r="1.6" fill="#fff" opacity="0.86"/><circle cx="391.2" cy="844.8" r="1.2" fill="#fff" opacity="0.81"/><circle cx="62.0" cy="794.5" r="1.0" fill="#fff" opacity="0.59"/><circle cx="71.5" cy="812.1" r="0.8" fill="#fff" opacity="0.78"/><circle cx="73.7" cy="779.9" r="0.6" fill="#fff" opacity="0.84"/><circle cx="72.5" cy="796.5" r="1.2" fill="#fff" opacity="0.58"/><circle cx="169.4" cy="791.8" r="1.0" fill="#fff" opacity="0.79"/><circle cx="177.7" cy="876.7" r="1.2" fill="#fff" opacity="0.71"/><circle cx="57.3" cy="833.4" r="1.6" fill="#fff" opacity="0.82"/><circle cx="36.0" cy="770.6" r="0.8" fill="#fff" opacity="0.51"/><circle cx="280.4" cy="884.8" r="0.8" fill="#fff" opacity="0.69"/><circle cx="175.5" cy="827.7" r="1.2" fill="#fff" opacity="0.84"/><circle cx="355.8" cy="950.6" r="1.6" fill="#fff" opacity="0.93"/><circle cx="311.9" cy="929.8" r="1.6" fill="#fff" opacity="0.91"/><circle cx="19.7" cy="792.1" r="1.2" fill="#fff" opacity="0.75"/><circle cx="371.9" cy="850.6" r="0.8" fill="#fff" opacity="0.80"/><circle cx="283.0" cy="911.8" r="0.8" fill="#fff" opacity="0.95"/><circle cx="25.6" cy="853.5" r="1.2" fill="#fff" opacity="0.77"/><circle cx="230.1" cy="858.5" r="1.6" fill="#fff" opacity="0.60"/><circle cx="113.6" cy="819.0" r="0.8" fill="#fff" opacity="0.86"/><circle cx="410.4" cy="955.4" r="1.6" fill="#fff" opacity="0.57"/><circle cx="326.0" cy="932.7" r="1.6" fill="#fff" opacity="0.84"/><circle cx="158.0" cy="818.0" r="0.6" fill="#fff" opacity="0.70"/><circle cx="32.6" cy="826.7" r="1.2" fill="#fff" opacity="0.72"/><circle cx="405.8" cy="890.5" r="0.8" fill="#fff" opacity="0.63"/><circle cx="394.4" cy="900.8" r="1.2" fill="#fff" opacity="0.85"/><circle cx="235.5" cy="817.9" r="0.8" fill="#fff" opacity="0.92"/><circle cx="385.1" cy="845.4" r="1.6" fill="#fff" opacity="0.82"/><circle cx="305.4" cy="906.4" r="0.8" fill="#fff" opacity="0.53"/><circle cx="280.0" cy="939.5" r="1.6" fill="#fff" opacity="0.74"/><circle cx="37.4" cy="822.0" r="0.6" fill="#fff" opacity="0.56"/><circle cx="3.5" cy="814.8" r="1.6" fill="#fff" opacity="0.60"/><circle cx="222.5" cy="918.3" r="0.6" fill="#fff" opacity="0.55"/><circle cx="198.1" cy="885.5" r="0.8" fill="#fff" opacity="0.71"/><circle cx="289.3" cy="897.0" r="1.2" fill="#fff" opacity="0.78"/><circle cx="115.6" cy="797.0" r="0.8" fill="#fff" opacity="0.70"/><circle cx="417.7" cy="939.8" r="0.6" fill="#fff" opacity="0.63"/><circle cx="5.4" cy="818.6" r="1.2" fill="#fff" opacity="0.87"/><circle cx="214.1" cy="908.3" r="1.0" fill="#fff" opacity="0.62"/><circle cx="181.0" cy="812.2" r="0.6" fill="#fff" opacity="0.67"/><circle cx="193.6" cy="836.0" r="0.8" fill="#fff" opacity="0.82"/><circle cx="67.5" cy="851.1" r="1.6" fill="#fff" opacity="0.56"/><circle cx="258.2" cy="888.1" r="1.6" fill="#fff" opacity="0.56"/><circle cx="16.1" cy="803.9" r="1.6" fill="#fff" opacity="0.91"/><circle cx="36.6" cy="862.0" r="1.0" fill="#fff" opacity="0.59"/><circle cx="135.3" cy="814.8" r="1.0" fill="#fff" opacity="0.77"/><circle cx="297.8" cy="943.0" r="1.6" fill="#fff" opacity="0.65"/><circle cx="231.5" cy="836.8" r="1.6" fill="#fff" opacity="0.92"/><circle cx="382.4" cy="855.1" r="1.6" fill="#fff" opacity="0.92"/><circle cx="34.7" cy="763.5" r="0.6" fill="#fff" opacity="0.57"/><circle cx="209.9" cy="834.1" r="0.8" fill="#fff" opacity="0.56"/><circle cx="1.9" cy="753.2" r="0.6" fill="#fff" opacity="0.65"/><circle cx="239.4" cy="850.9" r="1.2" fill="#fff" opacity="0.76"/><circle cx="78.7" cy="874.1" r="1.2" fill="#fff" opacity="0.69"/><circle cx="299.8" cy="920.1" r="1.0" fill="#fff" opacity="0.60"/><circle cx="126.1" cy="872.7" r="1.2" fill="#fff" opacity="0.90"/><circle cx="247.1" cy="881.8" r="1.2" fill="#fff" opacity="0.78"/><circle cx="321.4" cy="906.9" r="0.6" fill="#fff" opacity="0.79"/><circle cx="223.0" cy="832.9" r="0.6" fill="#fff" opacity="0.53"/><circle cx="176.5" cy="896.8" r="1.6" fill="#fff" opacity="0.81"/><circle cx="356.1" cy="857.2" r="0.6" fill="#fff" opacity="0.84"/><circle cx="286.2" cy="896.1" r="1.0" fill="#fff" opacity="0.67"/><circle cx="119.4" cy="840.2" r="0.6" fill="#fff" opacity="0.82"/><circle cx="360.1" cy="937.8" r="0.6" fill="#fff" opacity="0.57"/><circle cx="241.0" cy="833.7" r="1.2" fill="#fff" opacity="0.85"/><circle cx="338.2" cy="857.7" r="1.0" fill="#fff" opacity="0.76"/><circle cx="67.9" cy="827.4" r="1.6" fill="#fff" opacity="0.91"/><circle cx="34.6" cy="838.2" r="1.6" fill="#fff" opacity="0.58"/><circle cx="400.7" cy="937.7" r="1.2" fill="#fff" opacity="0.82"/><circle cx="146.9" cy="817.2" r="1.6" fill="#fff" opacity="0.52"/><circle cx="278.7" cy="917.0" r="1.0" fill="#fff" opacity="0.78"/><circle cx="86.8" cy="838.6" r="0.8" fill="#fff" opacity="0.84"/><circle cx="103.8" cy="793.2" r="1.2" fill="#fff" opacity="0.83"/><circle cx="125.8" cy="800.2" r="0.6" fill="#fff" opacity="0.56"/><circle cx="21.6" cy="824.6" r="1.6" fill="#fff" opacity="0.57"/><circle cx="118.6" cy="867.7" r="0.6" fill="#fff" opacity="0.94"/><circle cx="419.3" cy="944.5" r="1.6" fill="#fff" opacity="0.64"/><circle cx="310.7" cy="939.6" r="1.6" fill="#fff" opacity="0.70"/><circle cx="307.1" cy="937.2" r="0.6" fill="#fff" opacity="0.80"/><circle cx="205.0" cy="810.9" r="1.2" fill="#fff" opacity="0.51"/><circle cx="256.5" cy="876.1" r="1.0" fill="#fff" opacity="0.61"/><circle cx="83.8" cy="847.4" r="1.6" fill="#fff" opacity="0.65"/><circle cx="352.1" cy="866.9" r="0.8" fill="#fff" opacity="0.55"/><circle cx="72.6" cy="796.8" r="1.0" fill="#fff" opacity="0.64"/><circle cx="334.9" cy="892.3" r="0.8" fill="#fff" opacity="0.54"/><circle cx="372.0" cy="852.6" r="1.0" fill="#fff" opacity="0.80"/><circle cx="171.3" cy="856.7" r="1.6" fill="#fff" opacity="0.53"/><circle cx="280.6" cy="884.0" r="1.0" fill="#fff" opacity="0.51"/><circle cx="152.5" cy="836.4" r="0.8" fill="#fff" opacity="0.89"/><circle cx="335.3" cy="945.1" r="1.0" fill="#fff" opacity="0.72"/><circle cx="298.4" cy="856.5" r="1.0" fill="#fff" opacity="0.81"/><circle cx="45.8" cy="839.3" r="1.2" fill="#fff" opacity="0.71"/><circle cx="272.4" cy="922.1" r="1.2" fill="#fff" opacity="0.64"/><circle cx="189.4" cy="857.1" r="0.6" fill="#fff" opacity="0.88"/><circle cx="62.0" cy="775.1" r="1.6" fill="#fff" opacity="0.70"/><circle cx="162.5" cy="880.8" r="0.8" fill="#fff" opacity="0.70"/><circle cx="419.1" cy="896.9" r="0.8" fill="#fff" opacity="0.85"/><circle cx="177.0" cy="860.5" r="0.8" fill="#fff" opacity="0.68"/><circle cx="50.4" cy="796.7" r="1.2" fill="#fff" opacity="0.56"/><circle cx="26.3" cy="854.7" r="0.6" fill="#fff" opacity="0.79"/><circle cx="253.2" cy="835.0" r="0.8" fill="#fff" opacity="0.67"/><circle cx="55.0" cy="854.9" r="1.2" fill="#fff" opacity="0.73"/><circle cx="33.4" cy="860.5" r="0.8" fill="#fff" opacity="0.68"/><circle cx="57.1" cy="832.0" r="1.6" fill="#fff" opacity="0.67"/><circle cx="189.4" cy="891.2" r="1.2" fill="#fff" opacity="0.80"/><circle cx="151.7" cy="894.6" r="1.2" fill="#fff" opacity="0.50"/><circle cx="26.6" cy="852.6" r="1.2" fill="#fff" opacity="0.87"/><circle cx="127.5" cy="810.1" r="0.6" fill="#fff" opacity="0.70"/><circle cx="202.6" cy="843.5" r="0.6" fill="#fff" opacity="0.81"/><circle cx="417.5" cy="963.6" r="1.6" fill="#fff" opacity="0.67"/><circle cx="144.7" cy="863.0" r="1.6" fill="#fff" opacity="0.73"/><circle cx="112.8" cy="873.2" r="0.6" fill="#fff" opacity="0.57"/><circle cx="273.5" cy="890.9" r="0.8" fill="#fff" opacity="0.57"/><circle cx="244.5" cy="822.4" r="1.2" fill="#fff" opacity="0.75"/><circle cx="210.8" cy="812.8" r="1.6" fill="#fff" opacity="0.54"/><circle cx="373.4" cy="940.9" r="1.2" fill="#fff" opacity="0.82"/><circle cx="15.1" cy="801.1" r="0.6" fill="#fff" opacity="0.87"/><circle cx="135.0" cy="847.9" r="0.6" fill="#fff" opacity="0.71"/><circle cx="194.3" cy="882.9" r="0.6" fill="#fff" opacity="0.55"/><circle cx="364.7" cy="863.0" r="0.6" fill="#fff" opacity="0.71"/><circle cx="147.4" cy="792.1" r="1.6" fill="#fff" opacity="0.68"/><circle cx="130.9" cy="860.9" r="1.0" fill="#fff" opacity="0.60"/><circle cx="238.9" cy="845.9" r="1.6" fill="#fff" opacity="0.57"/><circle cx="385.9" cy="889.2" r="1.0" fill="#fff" opacity="0.77"/><circle cx="49.4" cy="792.8" r="1.0" fill="#fff" opacity="0.84"/><circle cx="178.9" cy="844.3" r="0.6" fill="#fff" opacity="0.75"/></g>
<path d="M180.0 633.0 C193.0 633.0 202.0 643.0 201.0 658.0 L202.0 670.0 L207.0 680.0 Q217.0 692.0 219.0 713.0 L213.0 722.0 L214.0 750.0 L217.0 783.0 L199.0 788.0 L199.0 837.0 L185.0 837.0 L184.0 789.0 L177.0 789.0 L177.0 837.0 L162.0 837.0 L162.0 783.0 L138.0 773.0 L147.0 746.0 L153.0 727.0 L149.0 723.0 L138.0 718.0 L145.0 712.0 L130.0 704.0 Q146.0 692.0 154.0 674.0 L159.0 654.0 C160.0 640.0 168.0 633.0 180.0 633.0Z" fill="#353c6b" filter="url(#b1)"/>
<g><path d="M172.7 671.8 Q152.3 691.0 143.9 710.3" stroke="#3a3f6e" stroke-width="0.92" fill="none" opacity="0.8"/><path d="M165.3 673.5 Q146.5 699.7 139.8 725.8" stroke="#3a3f6e" stroke-width="1.31" fill="none" opacity="0.8"/><path d="M165.5 658.9 Q146.1 680.9 138.8 702.9" stroke="#3a3f6e" stroke-width="1.36" fill="none" opacity="0.8"/><path d="M173.6 647.5 Q151.1 679.0 140.7 710.5" stroke="#3a3f6e" stroke-width="1.38" fill="none" opacity="0.8"/><path d="M162.8 653.3 Q149.7 675.9 148.7 698.4" stroke="#3a3f6e" stroke-width="1.51" fill="none" opacity="0.8"/><path d="M170.9 655.7 Q154.8 689.5 150.8 723.3" stroke="#3a3f6e" stroke-width="1.26" fill="none" opacity="0.8"/><path d="M162.9 650.8 Q139.5 670.0 128.0 689.3" stroke="#3a3f6e" stroke-width="0.86" fill="none" opacity="0.8"/><path d="M164.9 651.9 Q146.3 674.5 139.8 697.1" stroke="#3a3f6e" stroke-width="1.51" fill="none" opacity="0.8"/><path d="M164.7 665.9 Q148.9 693.9 145.1 721.9" stroke="#3a3f6e" stroke-width="1.57" fill="none" opacity="0.8"/><path d="M163.6 647.5 Q149.4 682.6 147.2 717.6" stroke="#3a3f6e" stroke-width="1.04" fill="none" opacity="0.8"/><path d="M163.3 665.6 Q142.7 684.6 134.1 703.6" stroke="#3a3f6e" stroke-width="1.07" fill="none" opacity="0.8"/><path d="M165.6 658.5 Q149.6 683.9 145.6 709.3" stroke="#3a3f6e" stroke-width="1.41" fill="none" opacity="0.8"/><path d="M168.6 664.9 Q153.0 680.0 149.4 695.1" stroke="#3a3f6e" stroke-width="1.20" fill="none" opacity="0.8"/><path d="M166.1 671.3 Q142.5 694.3 130.9 717.2" stroke="#3a3f6e" stroke-width="1.31" fill="none" opacity="0.8"/></g>
<text x="139.8" y="94.7" font-family="Liberation Serif" font-size="16.5" font-style="normal" font-weight="normal" fill="#fff" stroke="#fff" stroke-width="0.35" letter-spacing="3.86">RAKAS ÄITIMME</text>
<text x="125.7" y="195.9" font-family="Liberation Serif" font-size="16" font-style="italic" font-weight="normal" fill="#fff" stroke="#fff" stroke-width="0.35" letter-spacing="1.13">S. xx.xx.xxxx | K. xx.xx.xxxx</text>
<text x="104.5" y="221.3" font-family="Liberation Serif" font-size="16" font-style="italic" font-weight="normal" fill="#fff" stroke="#fff" stroke-width="0.35" letter-spacing="1.00">on kutsuttu pois ajasta iäisyyteen.</text>
<text x="76.0" y="279.3" font-family="Liberation Serif" font-size="15.5" font-style="italic" font-weight="normal" fill="#fff" stroke="#fff" stroke-width="0.35" letter-spacing="0.95">Pienenä tähtien alla seisot hiljaa ja katsot.</text>
<text x="115.7" y="296.5" font-family="Liberation Serif" font-size="15.5" font-style="italic" font-weight="normal" fill="#fff" stroke="#fff" stroke-width="0.35" letter-spacing="1.18">Yksi tähti loistaa kirkkaammin,</text>
<text x="132.0" y="314.9" font-family="Liberation Serif" font-size="15.5" font-style="italic" font-weight="normal" fill="#fff" stroke="#fff" stroke-width="0.35" letter-spacing="1.25">niin kuin se tuntisi nimesi.</text>
<text x="99.0" y="350.5" font-family="Liberation Serif" font-size="15.5" font-style="italic" font-weight="normal" fill="#fff" stroke="#fff" stroke-width="0.35" letter-spacing="0.97">Se ei ole poissa, vain korkeammalla.</text>
<text x="109.0" y="368.0" font-family="Liberation Serif" font-size="15.5" font-style="italic" font-weight="normal" fill="#fff" stroke="#fff" stroke-width="0.35" letter-spacing="0.96">Valona yössä, turvana katseellesi.</text>
<text x="127.5" y="430.4" font-family="Liberation Serif" font-size="15.5" font-style="italic" font-weight="bold" fill="#fff" stroke="#fff" stroke-width="0.35" letter-spacing="0.05">LÄMPIMÄSTI TERVETULOA</text>
<text x="110.0" y="449.9" font-family="Liberation Serif" font-size="16" font-style="italic" font-weight="normal" fill="#fff" stroke="#fff" stroke-width="0.35" letter-spacing="1.14">yhdessä saattamaan rakkaamme</text>
<text x="155.0" y="469.7" font-family="Liberation Serif" font-size="16" font-style="italic" font-weight="normal" fill="#fff" stroke="#fff" stroke-width="0.35" letter-spacing="0.92">viimeiselle matkalle.</text>
<text x="135.0" y="509.3" font-family="Liberation Serif" font-size="16" font-style="italic" font-weight="normal" fill="#fff" stroke="#fff" stroke-width="0.35" letter-spacing="1.04">Siunaustilaisuus pidetään</text>
<text x="107.7" y="528.4" font-family="Liberation Serif" font-size="16" font-style="italic" font-weight="normal" fill="#fff" stroke="#fff" stroke-width="0.35" letter-spacing="1.18">sunnuntaina xx.xx.xxxx klo xx.xx</text>
<text x="198.0" y="547.0" font-family="Liberation Serif" font-size="16" font-style="italic" font-weight="normal" fill="#fff" stroke="#fff" stroke-width="0.35" letter-spacing="0.84">(paikka.)</text>
<text x="87.0" y="587.0" font-family="Liberation Serif" font-size="16" font-style="italic" font-weight="normal" fill="#fff" stroke="#fff" stroke-width="0.35" letter-spacing="0.91">Tämän jälkeen muistotilaisuus (paikka)</text>
<text x="117.5" y="605.8" font-family="Liberation Serif" font-size="16" font-style="italic" font-weight="normal" fill="#fff" stroke="#fff" stroke-width="0.35" letter-spacing="0.73">jossa tarjolla kahvia ja kakkua.</text>
<text x="295.5" y="679.4" font-family="Liberation Serif" font-size="15" font-style="italic" font-weight="normal" fill="#3d4b92" stroke="#3d4b92" stroke-width="0.35" letter-spacing="0.78">Pyydämme ystävällisesti</text>
<text x="370.7" y="694.8" font-family="Liberation Serif" font-size="15" font-style="italic" font-weight="normal" fill="#3d4b92" stroke="#3d4b92" stroke-width="0.35" letter-spacing="0.83">ilmoittamaan</text>
<text x="327.8" y="710.5" font-family="Liberation Serif" font-size="15" font-style="italic" font-weight="normal" fill="#3d4b92" stroke="#3d4b92" stroke-width="0.35" letter-spacing="0.80">osallistumisestanne</text>
<text x="247.8" y="726.3" font-family="Liberation Serif" font-size="15" font-style="italic" font-weight="normal" fill="#3d4b92" stroke="#3d4b92" stroke-width="0.35" letter-spacing="0.59">päivämäärään mennessä nimi ja</text>
<text x="357.0" y="741.7" font-family="Liberation Serif" font-size="15" font-style="italic" font-weight="normal" fill="#3d4b92" stroke="#3d4b92" stroke-width="0.35" letter-spacing="1.04">puhelinnumero</text>
<text x="219.2" y="892.0" font-family="Liberation Sans" font-size="7.5" font-style="normal" font-weight="bold" fill="#fff" stroke="#fff" stroke-width="0.0" letter-spacing="1.02">DREAMSTUFF.FI</text>
<rect x="108" y="250" width="243" height="1.3" fill="#e9e9f2"/>
<rect x="108" y="391" width="243" height="1.3" fill="#e9e9f2"/>
<text x="80" y="163" font-family="Liberation Serif" font-style="italic" font-size="58" fill="#fff" stroke="#29306a" stroke-width="1.3" textLength="305" lengthAdjust="spacingAndGlyphs">Nimi Sukunimi</text>
<text x="358" y="773" font-family="Liberation Serif" font-style="italic" font-size="21" fill="#4a5a9c" stroke="#e4dcea" stroke-width="0.7" textLength="101" lengthAdjust="spacingAndGlyphs">Omaiset</text>
</g>
</svg>
</div>

<div id="strip" class="a"></div>
<div id="lay" class="a"></div>
<div class="a" style="left:1138px;top:207.5px;width:307px;height:1.5px;background:#dfdfdf"></div>
<div class="a nw" style="left:1150px;top:173px;font-size:15px;font-weight:bold;color:#575f69;letter-spacing:1.7px">LAYERS</div>
<svg class="a" style="left:1385px;top:175px" width="23" height="23" viewBox="0 0 23 23"><rect x="1" y="7.5" width="16" height="14" fill="none" stroke="#9a9a9a" stroke-width="1" opacity="0.45"/><path d="M13 7.5 V4.5 a3.5 3.5 0 0 1 7 0 V6" fill="none" stroke="#9a9a9a" stroke-width="1" opacity="0.45"/><circle cx="9" cy="14.5" r="1" fill="#9a9a9a" opacity="0.45"/></svg>
<svg class="a" style="left:1418px;top:180px" width="18" height="12" viewBox="0 0 18 12"><path d="M2 2 L9 9 L16 2" fill="none" stroke="#5f6873" stroke-width="2"/></svg>
<svg class="a" style="left:1114px;top:636px" width="12" height="18" viewBox="0 0 12 18"><path d="M3 2 L9.5 9 L3 16" fill="none" stroke="#555" stroke-width="2"/></svg>
<div class="a" style="left:1138px;top:258.9px;width:307px;height:1.5px;background:#dfdfdf"></div>
<svg class="a" style="left:1152px;top:225px" width="25" height="20" viewBox="0 0 25 20"><path d="M0 0 H16 V4 H10 V19 H6 V4 H0z" fill="#5f6873"/><path d="M12 7 H24 V11 H20 V19 H16.5 V11 H12z" fill="#5f6873"/></svg>
<div class="a nw lname" style="left:1189px;top:224.7px">Päivä</div>
<svg class="a" style="left:1385px;top:223px" width="23" height="23" viewBox="0 0 23 23"><rect x="1" y="7.5" width="16" height="14" fill="none" stroke="#9a9a9a" stroke-width="1" opacity="0.45"/><path d="M13 7.5 V4.5 a3.5 3.5 0 0 1 7 0 V6" fill="none" stroke="#9a9a9a" stroke-width="1" opacity="0.45"/><circle cx="9" cy="14.5" r="1" fill="#9a9a9a" opacity="0.45"/></svg>
<svg class="a" style="left:1415px;top:224px" width="18" height="21" viewBox="0 0 18 21"><path d="M1 3.2 H17" stroke="#727a84" stroke-width="1.2"/><rect x="5.5" y="1" width="7" height="2.2" fill="#727a84"/><rect x="2.5" y="4.5" width="13" height="15.5" rx="1.2" fill="none" stroke="#727a84" stroke-width="1.4"/><path d="M6.5 7.5 V17 M9 7.5 V17 M11.5 7.5 V17" stroke="#727a84" stroke-width="1.1"/></svg>
<div class="a" style="left:1138px;top:310.2px;width:307px;height:1.5px;background:#dfdfdf"></div>
<svg class="a" style="left:1152px;top:276px" width="25" height="20" viewBox="0 0 25 20"><path d="M0 0 H16 V4 H10 V19 H6 V4 H0z" fill="#5f6873"/><path d="M12 7 H24 V11 H20 V19 H16.5 V11 H12z" fill="#5f6873"/></svg>
<div class="a nw lname" style="left:1189px;top:276.1px">Allekirjoitus</div>
<svg class="a" style="left:1385px;top:274px" width="23" height="23" viewBox="0 0 23 23"><rect x="1" y="7.5" width="16" height="14" fill="none" stroke="#9a9a9a" stroke-width="1" opacity="0.45"/><path d="M13 7.5 V4.5 a3.5 3.5 0 0 1 7 0 V6" fill="none" stroke="#9a9a9a" stroke-width="1" opacity="0.45"/><circle cx="9" cy="14.5" r="1" fill="#9a9a9a" opacity="0.45"/></svg>
<svg class="a" style="left:1415px;top:276px" width="18" height="21" viewBox="0 0 18 21"><path d="M1 3.2 H17" stroke="#727a84" stroke-width="1.2"/><rect x="5.5" y="1" width="7" height="2.2" fill="#727a84"/><rect x="2.5" y="4.5" width="13" height="15.5" rx="1.2" fill="none" stroke="#727a84" stroke-width="1.4"/><path d="M6.5 7.5 V17 M9 7.5 V17 M11.5 7.5 V17" stroke="#727a84" stroke-width="1.1"/></svg>
<div class="a" style="left:1138px;top:361.6px;width:307px;height:1.5px;background:#dfdfdf"></div>
<svg class="a" style="left:1152px;top:327px" width="25" height="20" viewBox="0 0 25 20"><path d="M0 0 H16 V4 H10 V19 H6 V4 H0z" fill="#5f6873"/><path d="M12 7 H24 V11 H20 V19 H16.5 V11 H12z" fill="#5f6873"/></svg>
<div class="a nw lname" style="left:1189px;top:327.4px">RSVP</div>
<svg class="a" style="left:1385px;top:325px" width="23" height="23" viewBox="0 0 23 23"><rect x="1" y="7.5" width="16" height="14" fill="none" stroke="#9a9a9a" stroke-width="1" opacity="0.45"/><path d="M13 7.5 V4.5 a3.5 3.5 0 0 1 7 0 V6" fill="none" stroke="#9a9a9a" stroke-width="1" opacity="0.45"/><circle cx="9" cy="14.5" r="1" fill="#9a9a9a" opacity="0.45"/></svg>
<svg class="a" style="left:1415px;top:327px" width="18" height="21" viewBox="0 0 18 21"><path d="M1 3.2 H17" stroke="#727a84" stroke-width="1.2"/><rect x="5.5" y="1" width="7" height="2.2" fill="#727a84"/><rect x="2.5" y="4.5" width="13" height="15.5" rx="1.2" fill="none" stroke="#727a84" stroke-width="1.4"/><path d="M6.5 7.5 V17 M9 7.5 V17 M11.5 7.5 V17" stroke="#727a84" stroke-width="1.1"/></svg>
<div class="a" style="left:1138px;top:412.9px;width:307px;height:1.5px;background:#dfdfdf"></div>
<svg class="a" style="left:1152px;top:379px" width="25" height="20" viewBox="0 0 25 20"><path d="M0 0 H16 V4 H10 V19 H6 V4 H0z" fill="#5f6873"/><path d="M12 7 H24 V11 H20 V19 H16.5 V11 H12z" fill="#5f6873"/></svg>
<div class="a nw lname" style="left:1189px;top:378.8px">Osoite</div>
<svg class="a" style="left:1385px;top:377px" width="23" height="23" viewBox="0 0 23 23"><rect x="1" y="7.5" width="16" height="14" fill="none" stroke="#9a9a9a" stroke-width="1" opacity="0.45"/><path d="M13 7.5 V4.5 a3.5 3.5 0 0 1 7 0 V6" fill="none" stroke="#9a9a9a" stroke-width="1" opacity="0.45"/><circle cx="9" cy="14.5" r="1" fill="#9a9a9a" opacity="0.45"/></svg>
<svg class="a" style="left:1415px;top:378px" width="18" height="21" viewBox="0 0 18 21"><path d="M1 3.2 H17" stroke="#727a84" stroke-width="1.2"/><rect x="5.5" y="1" width="7" height="2.2" fill="#727a84"/><rect x="2.5" y="4.5" width="13" height="15.5" rx="1.2" fill="none" stroke="#727a84" stroke-width="1.4"/><path d="M6.5 7.5 V17 M9 7.5 V17 M11.5 7.5 V17" stroke="#727a84" stroke-width="1.1"/></svg>
<div class="a" style="left:1138px;top:464.2px;width:307px;height:1.5px;background:#dfdfdf"></div>
<svg class="a" style="left:1152px;top:430px" width="25" height="20" viewBox="0 0 25 20"><path d="M0 0 H16 V4 H10 V19 H6 V4 H0z" fill="#5f6873"/><path d="M12 7 H24 V11 H20 V19 H16.5 V11 H12z" fill="#5f6873"/></svg>
<div class="a nw lname" style="left:1189px;top:430.1px">Klo.</div>
<svg class="a" style="left:1385px;top:428px" width="23" height="23" viewBox="0 0 23 23"><rect x="1" y="7.5" width="16" height="14" fill="none" stroke="#9a9a9a" stroke-width="1" opacity="0.45"/><path d="M13 7.5 V4.5 a3.5 3.5 0 0 1 7 0 V6" fill="none" stroke="#9a9a9a" stroke-width="1" opacity="0.45"/><circle cx="9" cy="14.5" r="1" fill="#9a9a9a" opacity="0.45"/></svg>
<svg class="a" style="left:1415px;top:430px" width="18" height="21" viewBox="0 0 18 21"><path d="M1 3.2 H17" stroke="#727a84" stroke-width="1.2"/><rect x="5.5" y="1" width="7" height="2.2" fill="#727a84"/><rect x="2.5" y="4.5" width="13" height="15.5" rx="1.2" fill="none" stroke="#727a84" stroke-width="1.4"/><path d="M6.5 7.5 V17 M9 7.5 V17 M11.5 7.5 V17" stroke="#727a84" stroke-width="1.1"/></svg>
<div class="a" style="left:1138px;top:515.6px;width:307px;height:1.5px;background:#dfdfdf"></div>
<svg class="a" style="left:1152px;top:481px" width="25" height="20" viewBox="0 0 25 20"><path d="M0 0 H16 V4 H10 V19 H6 V4 H0z" fill="#5f6873"/><path d="M12 7 H24 V11 H20 V19 H16.5 V11 H12z" fill="#5f6873"/></svg>
<div class="a nw lname" style="left:1189px;top:481.4px">Vuosi</div>
<svg class="a" style="left:1385px;top:479px" width="23" height="23" viewBox="0 0 23 23"><rect x="1" y="7.5" width="16" height="14" fill="none" stroke="#9a9a9a" stroke-width="1" opacity="0.45"/><path d="M13 7.5 V4.5 a3.5 3.5 0 0 1 7 0 V6" fill="none" stroke="#9a9a9a" stroke-width="1" opacity="0.45"/><circle cx="9" cy="14.5" r="1" fill="#9a9a9a" opacity="0.45"/></svg>
<svg class="a" style="left:1415px;top:481px" width="18" height="21" viewBox="0 0 18 21"><path d="M1 3.2 H17" stroke="#727a84" stroke-width="1.2"/><rect x="5.5" y="1" width="7" height="2.2" fill="#727a84"/><rect x="2.5" y="4.5" width="13" height="15.5" rx="1.2" fill="none" stroke="#727a84" stroke-width="1.4"/><path d="M6.5 7.5 V17 M9 7.5 V17 M11.5 7.5 V17" stroke="#727a84" stroke-width="1.1"/></svg>
<div class="a" style="left:1138px;top:567.0px;width:307px;height:1.5px;background:#dfdfdf"></div>
<svg class="a" style="left:1152px;top:533px" width="25" height="20" viewBox="0 0 25 20"><path d="M0 0 H16 V4 H10 V19 H6 V4 H0z" fill="#5f6873"/><path d="M12 7 H24 V11 H20 V19 H16.5 V11 H12z" fill="#5f6873"/></svg>
<div class="a nw lname" style="left:1189px;top:532.8px">Kuukausi</div>
<svg class="a" style="left:1385px;top:531px" width="23" height="23" viewBox="0 0 23 23"><rect x="1" y="7.5" width="16" height="14" fill="none" stroke="#9a9a9a" stroke-width="1" opacity="0.45"/><path d="M13 7.5 V4.5 a3.5 3.5 0 0 1 7 0 V6" fill="none" stroke="#9a9a9a" stroke-width="1" opacity="0.45"/><circle cx="9" cy="14.5" r="1" fill="#9a9a9a" opacity="0.45"/></svg>
<svg class="a" style="left:1415px;top:532px" width="18" height="21" viewBox="0 0 18 21"><path d="M1 3.2 H17" stroke="#727a84" stroke-width="1.2"/><rect x="5.5" y="1" width="7" height="2.2" fill="#727a84"/><rect x="2.5" y="4.5" width="13" height="15.5" rx="1.2" fill="none" stroke="#727a84" stroke-width="1.4"/><path d="M6.5 7.5 V17 M9 7.5 V17 M11.5 7.5 V17" stroke="#727a84" stroke-width="1.1"/></svg>
<div class="a" style="left:1138px;top:618.3px;width:307px;height:1.5px;background:#dfdfdf"></div>
<svg class="a" style="left:1152px;top:584px" width="25" height="20" viewBox="0 0 25 20"><path d="M0 0 H16 V4 H10 V19 H6 V4 H0z" fill="#5f6873"/><path d="M12 7 H24 V11 H20 V19 H16.5 V11 H12z" fill="#5f6873"/></svg>
<div class="a nw lname" style="left:1189px;top:584.2px">Viikkopäivä</div>
<svg class="a" style="left:1385px;top:582px" width="23" height="23" viewBox="0 0 23 23"><rect x="1" y="7.5" width="16" height="14" fill="none" stroke="#9a9a9a" stroke-width="1" opacity="0.45"/><path d="M13 7.5 V4.5 a3.5 3.5 0 0 1 7 0 V6" fill="none" stroke="#9a9a9a" stroke-width="1" opacity="0.45"/><circle cx="9" cy="14.5" r="1" fill="#9a9a9a" opacity="0.45"/></svg>
<svg class="a" style="left:1415px;top:584px" width="18" height="21" viewBox="0 0 18 21"><path d="M1 3.2 H17" stroke="#727a84" stroke-width="1.2"/><rect x="5.5" y="1" width="7" height="2.2" fill="#727a84"/><rect x="2.5" y="4.5" width="13" height="15.5" rx="1.2" fill="none" stroke="#727a84" stroke-width="1.4"/><path d="M6.5 7.5 V17 M9 7.5 V17 M11.5 7.5 V17" stroke="#727a84" stroke-width="1.1"/></svg>
<div class="a" style="left:1138px;top:669.6px;width:307px;height:1.5px;background:#dfdfdf"></div>
<svg class="a" style="left:1152px;top:636px" width="25" height="20" viewBox="0 0 25 20"><path d="M0 0 H16 V4 H10 V19 H6 V4 H0z" fill="#5f6873"/><path d="M12 7 H24 V11 H20 V19 H16.5 V11 H12z" fill="#5f6873"/></svg>
<div class="a nw lname" style="left:1189px;top:635.5px">Ylioppilasju...</div>
<svg class="a" style="left:1385px;top:634px" width="23" height="23" viewBox="0 0 23 23"><rect x="1" y="7.5" width="16" height="14" fill="none" stroke="#9a9a9a" stroke-width="1" opacity="0.45"/><path d="M13 7.5 V4.5 a3.5 3.5 0 0 1 7 0 V6" fill="none" stroke="#9a9a9a" stroke-width="1" opacity="0.45"/><circle cx="9" cy="14.5" r="1" fill="#9a9a9a" opacity="0.45"/></svg>
<svg class="a" style="left:1415px;top:635px" width="18" height="21" viewBox="0 0 18 21"><path d="M1 3.2 H17" stroke="#727a84" stroke-width="1.2"/><rect x="5.5" y="1" width="7" height="2.2" fill="#727a84"/><rect x="2.5" y="4.5" width="13" height="15.5" rx="1.2" fill="none" stroke="#727a84" stroke-width="1.4"/><path d="M6.5 7.5 V17 M9 7.5 V17 M11.5 7.5 V17" stroke="#727a84" stroke-width="1.1"/></svg>
<div class="a" style="left:1138px;top:721.0px;width:307px;height:1.5px;background:#dfdfdf"></div>
<svg class="a" style="left:1152px;top:687px" width="25" height="20" viewBox="0 0 25 20"><path d="M0 0 H16 V4 H10 V19 H6 V4 H0z" fill="#5f6873"/><path d="M12 7 H24 V11 H20 V19 H16.5 V11 H12z" fill="#5f6873"/></svg>
<div class="a nw lname" style="left:1189px;top:686.9px">Tervetuloa</div>
<svg class="a" style="left:1385px;top:685px" width="23" height="23" viewBox="0 0 23 23"><rect x="1" y="7.5" width="16" height="14" fill="none" stroke="#9a9a9a" stroke-width="1" opacity="0.45"/><path d="M13 7.5 V4.5 a3.5 3.5 0 0 1 7 0 V6" fill="none" stroke="#9a9a9a" stroke-width="1" opacity="0.45"/><circle cx="9" cy="14.5" r="1" fill="#9a9a9a" opacity="0.45"/></svg>
<svg class="a" style="left:1415px;top:686px" width="18" height="21" viewBox="0 0 18 21"><path d="M1 3.2 H17" stroke="#727a84" stroke-width="1.2"/><rect x="5.5" y="1" width="7" height="2.2" fill="#727a84"/><rect x="2.5" y="4.5" width="13" height="15.5" rx="1.2" fill="none" stroke="#727a84" stroke-width="1.4"/><path d="M6.5 7.5 V17 M9 7.5 V17 M11.5 7.5 V17" stroke="#727a84" stroke-width="1.1"/></svg>
<div class="a" style="left:1138px;top:772.4px;width:307px;height:1.5px;background:#dfdfdf"></div>
<svg class="a" style="left:1150px;top:737px" width="27" height="22" viewBox="0 0 27 22"><rect x="1" y="1" width="25" height="20" fill="none" stroke="#5f6873" stroke-width="1.5"/><circle cx="6" cy="6" r="2" fill="#5f6873"/><path d="M3 18 L9.5 10.5 L13 13.5 L19 6.5 L24.5 18z" fill="#5f6873"/></svg>
<div class="a nw lname" style="left:1187px;top:738.2px">Dreamstuff-...</div>
<svg class="a" style="left:1384px;top:735px" width="20" height="24" viewBox="0 0 20 24"><rect x="1.5" y="8" width="17" height="15" rx="1" fill="none" stroke="#555c66" stroke-width="1.2"/><path d="M5.5 8 V5 a4.5 4.5 0 0 1 9 0 V8" fill="none" stroke="#555c66" stroke-width="1.2"/><circle cx="10" cy="15.5" r="1.3" fill="#555c66"/></svg>
<svg class="a" style="left:1415px;top:738px" width="18" height="21" viewBox="0 0 18 21"><path d="M1 3.2 H17" stroke="#d5d8db" stroke-width="1.2"/><rect x="5.5" y="1" width="7" height="2.2" fill="#d5d8db"/><rect x="2.5" y="4.5" width="13" height="15.5" rx="1.2" fill="none" stroke="#d5d8db" stroke-width="1.4"/><path d="M6.5 7.5 V17 M9 7.5 V17 M11.5 7.5 V17" stroke="#d5d8db" stroke-width="1.1"/></svg>

<!-- BOTTOM BAR -->
<div id="bb" class="a"></div>
<div class="a nw" style="left:545px;top:1154px;font-size:18px;color:#5b636d">Page 1</div>
<svg class="a" style="left:613px;top:1152px" width="26" height="25" viewBox="0 0 26 25"><g fill="#5a5a5a"><rect x="0.5" y="0.5" width="11" height="10.5" rx="2.5"/><rect x="14" y="0.5" width="11" height="10.5" rx="2.5"/><rect x="0.5" y="13.5" width="11" height="10.5" rx="2.5"/><rect x="14" y="13.5" width="11" height="10.5" rx="2.5"/></g></svg>
<div class="a bsep" style="left:654px"></div>
<svg class="a" style="left:665px;top:1151px" width="17" height="25" viewBox="0 0 17 25"><path d="M15 1.5 Q16 1 16 3 V22 Q16 24 14.5 23 L2 13.5 Q1 12.5 2 11.5z" fill="#b8bcc2"/></svg>
<div class="a bsep" style="left:693px"></div>
<div class="a nw" style="left:701px;top:1154px;font-size:18px;color:#5b636d">Page</div>
<div class="a" style="left:747px;top:1147px;width:50px;height:34px;border:1px solid #d6d6d6;border-radius:3px;background:#fbfbfb"></div>
<div class="a nw" style="left:767px;top:1154px;font-size:18px;color:#5b636d">1</div>
<div class="a nw" style="left:803px;top:1154px;font-size:18px;color:#5b636d">of 1</div>
<div class="a bsep" style="left:842px"></div>
<svg class="a" style="left:853px;top:1151px" width="17" height="25" viewBox="0 0 17 25"><path d="M2 1.5 Q1 1 1 3 V22 Q1 24 2.5 23 L15 13.5 Q16 12.5 15 11.5z" fill="#b8bcc2"/></svg>
<div class="a bsep" style="left:881px"></div>
<svg class="a" style="left:897px;top:1151px" width="24" height="26" viewBox="0 0 24 26"><path d="M1 18 V1.5 H16.5 V5" fill="none" stroke="#6a7079" stroke-width="1.8"/><rect x="6" y="7" width="16.5" height="17.5" fill="none" stroke="#6a7079" stroke-width="1.8"/><path d="M6 16.5 H14 M11 13.5 L14 16.5 L11 19.5" fill="none" stroke="#6a7079" stroke-width="1.6"/></svg>
<svg class="a" style="left:945px;top:1150px" width="22" height="28" viewBox="0 0 22 28"><path d="M0.5 4 H21.5" stroke="#c2c5c9" stroke-width="1.2"/><rect x="7" y="1" width="8" height="3" fill="#c2c5c9"/><rect x="3" y="6" width="16" height="21" rx="1.5" fill="none" stroke="#c2c5c9" stroke-width="1.6"/><path d="M8 10 V23 M11 10 V23 M14 10 V23" stroke="#c2c5c9" stroke-width="1.2"/></svg>
<div class="a bsep" style="left:1271px"></div>
<div class="a" style="left:1283px;top:1163px;width:16px;height:2.4px;background:#5b636d"></div>
<div class="a bsep" style="left:1310px"></div>
<div class="a nw" style="left:1326px;top:1156px;font-size:19px;font-weight:bold;color:#5b636d">37%</div>
<div class="a bsep" style="left:1380px"></div>
<div class="a" style="left:1392px;top:1163.5px;width:16px;height:2.4px;background:#5b636d"></div>
<div class="a" style="left:1398.8px;top:1157px;width:2.4px;height:15px;background:#5b636d"></div>
<div class="a bsep" style="left:1419px"></div>

</body></html>
